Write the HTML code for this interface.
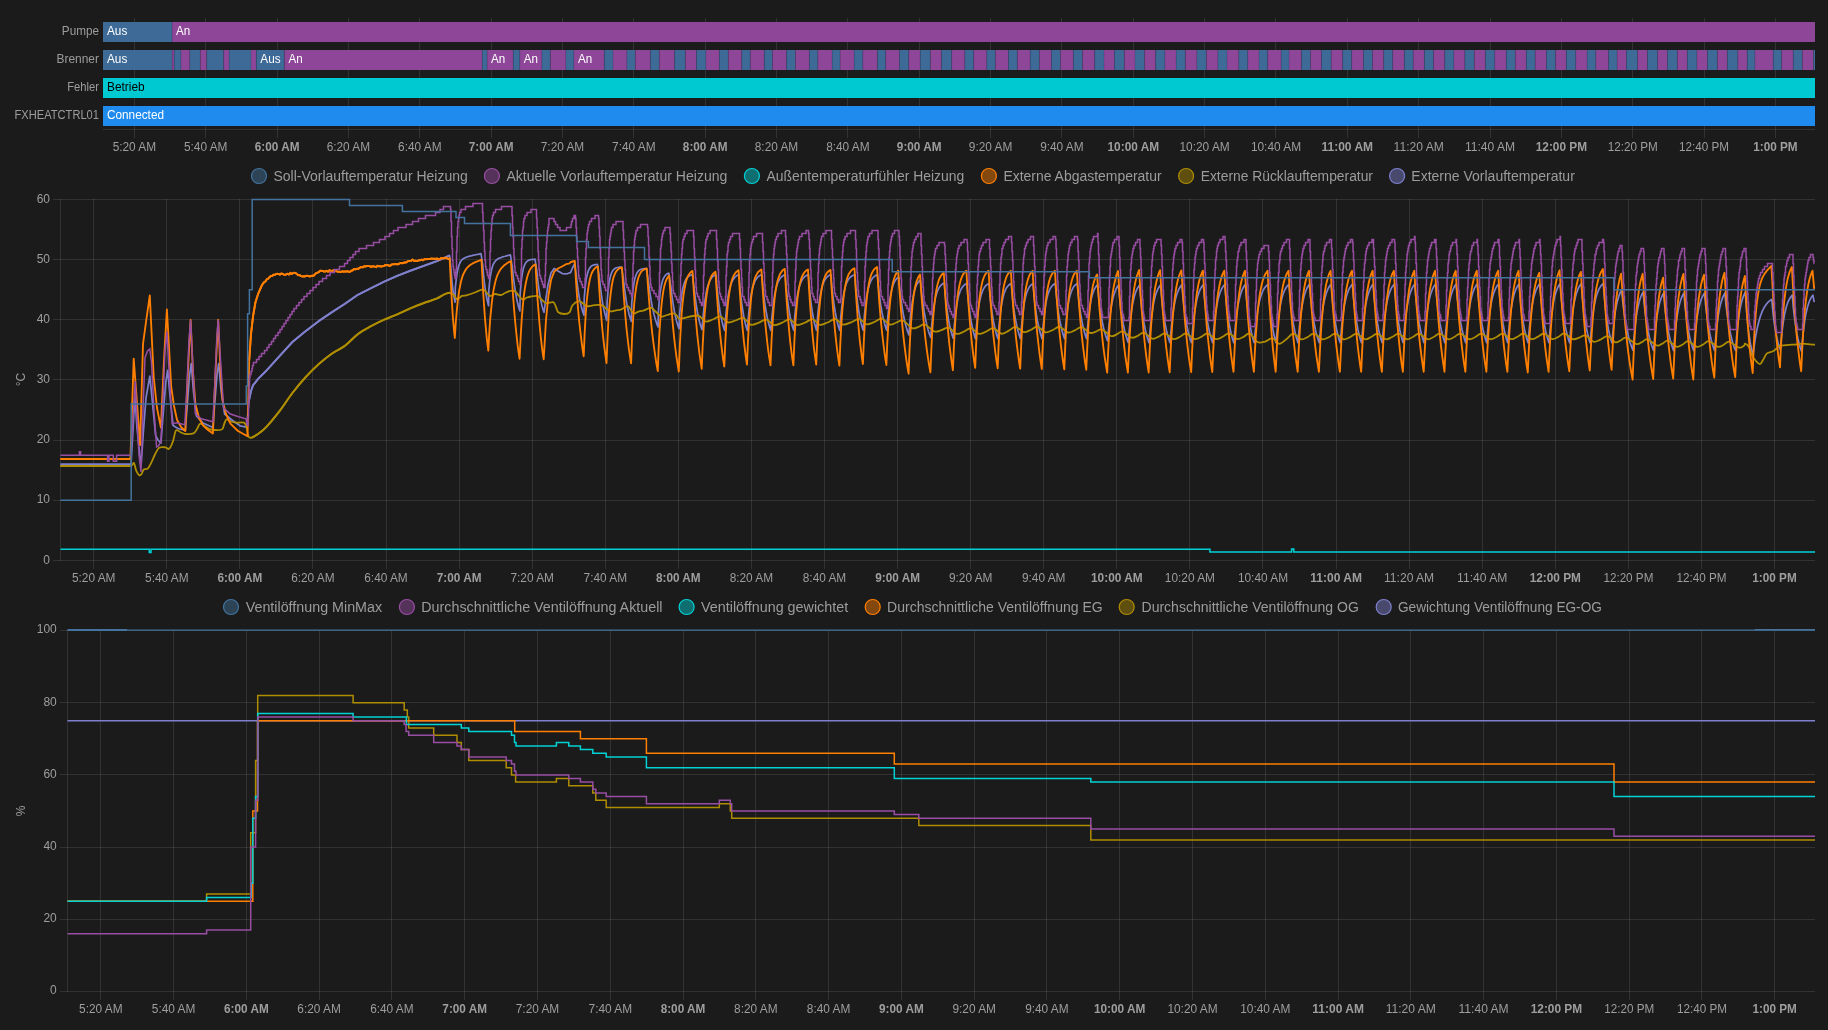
<!DOCTYPE html>
<html><head><meta charset="utf-8"><title>Heizung</title>
<style>html,body{margin:0;padding:0;background:#1b1b1b;overflow:hidden}svg{display:block;will-change:transform;transform:translateZ(0)}text{font-family:"Liberation Sans",sans-serif}</style></head>
<body><svg width="1828" height="1030" viewBox="0 0 1828 1030">
<g shape-rendering="crispEdges" stroke="#e1e1e1" stroke-opacity="0.12" stroke-width="1">
<line x1="134.5" y1="18" x2="134.5" y2="138"/>
<line x1="205.5" y1="18" x2="205.5" y2="138"/>
<line x1="277.5" y1="18" x2="277.5" y2="138"/>
<line x1="348.5" y1="18" x2="348.5" y2="138"/>
<line x1="419.5" y1="18" x2="419.5" y2="138"/>
<line x1="491.5" y1="18" x2="491.5" y2="138"/>
<line x1="562.5" y1="18" x2="562.5" y2="138"/>
<line x1="633.5" y1="18" x2="633.5" y2="138"/>
<line x1="705.5" y1="18" x2="705.5" y2="138"/>
<line x1="776.5" y1="18" x2="776.5" y2="138"/>
<line x1="847.5" y1="18" x2="847.5" y2="138"/>
<line x1="919.5" y1="18" x2="919.5" y2="138"/>
<line x1="990.5" y1="18" x2="990.5" y2="138"/>
<line x1="1061.5" y1="18" x2="1061.5" y2="138"/>
<line x1="1133.5" y1="18" x2="1133.5" y2="138"/>
<line x1="1204.5" y1="18" x2="1204.5" y2="138"/>
<line x1="1275.5" y1="18" x2="1275.5" y2="138"/>
<line x1="1347.5" y1="18" x2="1347.5" y2="138"/>
<line x1="1418.5" y1="18" x2="1418.5" y2="138"/>
<line x1="1490.5" y1="18" x2="1490.5" y2="138"/>
<line x1="1561.5" y1="18" x2="1561.5" y2="138"/>
<line x1="1632.5" y1="18" x2="1632.5" y2="138"/>
<line x1="1704.5" y1="18" x2="1704.5" y2="138"/>
<line x1="1775.5" y1="18" x2="1775.5" y2="138"/>
<line x1="103" y1="129.5" x2="1815" y2="129.5"/>
</g>
<rect x="103.00" y="22" width="69.10" height="20" fill="#3d6a97"/>
<rect x="172.10" y="22" width="1642.90" height="20" fill="#8e4699"/>
<g>
<rect x="103.00" y="50" width="69.10" height="20" fill="#3d6a97"/>
<rect x="172.10" y="50" width="2.10" height="20" fill="#8e4699"/>
<rect x="174.20" y="50" width="6.70" height="20" fill="#3d6a97"/>
<rect x="180.90" y="50" width="8.90" height="20" fill="#8e4699"/>
<rect x="189.80" y="50" width="10.50" height="20" fill="#3d6a97"/>
<rect x="200.30" y="50" width="6.40" height="20" fill="#8e4699"/>
<rect x="206.70" y="50" width="17.00" height="20" fill="#3d6a97"/>
<rect x="223.70" y="50" width="5.40" height="20" fill="#8e4699"/>
<rect x="229.10" y="50" width="21.90" height="20" fill="#3d6a97"/>
<rect x="251.00" y="50" width="5.30" height="20" fill="#8e4699"/>
<rect x="256.30" y="50" width="28.10" height="20" fill="#3d6a97"/>
<rect x="284.40" y="50" width="197.80" height="20" fill="#8e4699"/>
<rect x="482.20" y="50" width="4.90" height="20" fill="#3d6a97"/>
<rect x="487.10" y="50" width="26.10" height="20" fill="#8e4699"/>
<rect x="513.20" y="50" width="6.60" height="20" fill="#3d6a97"/>
<rect x="519.80" y="50" width="22.10" height="20" fill="#8e4699"/>
<rect x="541.90" y="50" width="8.50" height="20" fill="#3d6a97"/>
<rect x="550.40" y="50" width="15.50" height="20" fill="#8e4699"/>
<rect x="565.90" y="50" width="8.00" height="20" fill="#3d6a97"/>
<rect x="573.90" y="50" width="30.40" height="20" fill="#8e4699"/>
<rect x="604.30" y="50" width="8.70" height="20" fill="#3d6a97"/>
<rect x="613.00" y="50" width="13.90" height="20" fill="#8e4699"/>
<rect x="626.90" y="50" width="8.40" height="20" fill="#3d6a97"/>
<rect x="635.30" y="50" width="15.10" height="20" fill="#8e4699"/>
<rect x="650.40" y="50" width="8.90" height="20" fill="#3d6a97"/>
<rect x="659.30" y="50" width="15.30" height="20" fill="#8e4699"/>
<rect x="674.60" y="50" width="10.80" height="20" fill="#3d6a97"/>
<rect x="685.40" y="50" width="11.10" height="20" fill="#8e4699"/>
<rect x="696.50" y="50" width="9.40" height="20" fill="#3d6a97"/>
<rect x="705.90" y="50" width="13.40" height="20" fill="#8e4699"/>
<rect x="719.30" y="50" width="9.00" height="20" fill="#3d6a97"/>
<rect x="728.30" y="50" width="13.40" height="20" fill="#8e4699"/>
<rect x="741.70" y="50" width="8.60" height="20" fill="#3d6a97"/>
<rect x="750.30" y="50" width="14.00" height="20" fill="#8e4699"/>
<rect x="764.30" y="50" width="8.20" height="20" fill="#3d6a97"/>
<rect x="772.50" y="50" width="14.10" height="20" fill="#8e4699"/>
<rect x="786.60" y="50" width="8.90" height="20" fill="#3d6a97"/>
<rect x="795.50" y="50" width="13.90" height="20" fill="#8e4699"/>
<rect x="809.40" y="50" width="8.40" height="20" fill="#3d6a97"/>
<rect x="817.80" y="50" width="14.30" height="20" fill="#8e4699"/>
<rect x="832.10" y="50" width="8.00" height="20" fill="#3d6a97"/>
<rect x="840.10" y="50" width="14.00" height="20" fill="#8e4699"/>
<rect x="854.10" y="50" width="8.70" height="20" fill="#3d6a97"/>
<rect x="862.80" y="50" width="14.70" height="20" fill="#8e4699"/>
<rect x="877.50" y="50" width="8.20" height="20" fill="#3d6a97"/>
<rect x="885.70" y="50" width="13.80" height="20" fill="#8e4699"/>
<rect x="899.50" y="50" width="9.20" height="20" fill="#3d6a97"/>
<rect x="908.70" y="50" width="11.50" height="20" fill="#8e4699"/>
<rect x="920.20" y="50" width="10.20" height="20" fill="#3d6a97"/>
<rect x="930.40" y="50" width="11.10" height="20" fill="#8e4699"/>
<rect x="941.50" y="50" width="10.20" height="20" fill="#3d6a97"/>
<rect x="951.70" y="50" width="13.10" height="20" fill="#8e4699"/>
<rect x="964.80" y="50" width="8.90" height="20" fill="#3d6a97"/>
<rect x="973.70" y="50" width="13.10" height="20" fill="#8e4699"/>
<rect x="986.80" y="50" width="8.60" height="20" fill="#3d6a97"/>
<rect x="995.40" y="50" width="13.10" height="20" fill="#8e4699"/>
<rect x="1008.50" y="50" width="8.90" height="20" fill="#3d6a97"/>
<rect x="1017.40" y="50" width="12.80" height="20" fill="#8e4699"/>
<rect x="1030.20" y="50" width="9.20" height="20" fill="#3d6a97"/>
<rect x="1039.40" y="50" width="12.10" height="20" fill="#8e4699"/>
<rect x="1051.50" y="50" width="9.00" height="20" fill="#3d6a97"/>
<rect x="1060.50" y="50" width="12.80" height="20" fill="#8e4699"/>
<rect x="1073.30" y="50" width="9.20" height="20" fill="#3d6a97"/>
<rect x="1082.50" y="50" width="12.20" height="20" fill="#8e4699"/>
<rect x="1094.70" y="50" width="9.30" height="20" fill="#3d6a97"/>
<rect x="1104.00" y="50" width="10.50" height="20" fill="#8e4699"/>
<rect x="1114.50" y="50" width="9.90" height="20" fill="#3d6a97"/>
<rect x="1124.40" y="50" width="10.60" height="20" fill="#8e4699"/>
<rect x="1135.00" y="50" width="9.60" height="20" fill="#3d6a97"/>
<rect x="1144.60" y="50" width="11.00" height="20" fill="#8e4699"/>
<rect x="1155.60" y="50" width="9.30" height="20" fill="#3d6a97"/>
<rect x="1164.90" y="50" width="11.20" height="20" fill="#8e4699"/>
<rect x="1176.10" y="50" width="9.30" height="20" fill="#3d6a97"/>
<rect x="1185.40" y="50" width="11.50" height="20" fill="#8e4699"/>
<rect x="1196.90" y="50" width="9.50" height="20" fill="#3d6a97"/>
<rect x="1206.40" y="50" width="11.50" height="20" fill="#8e4699"/>
<rect x="1217.90" y="50" width="9.10" height="20" fill="#3d6a97"/>
<rect x="1227.00" y="50" width="11.80" height="20" fill="#8e4699"/>
<rect x="1238.80" y="50" width="9.00" height="20" fill="#3d6a97"/>
<rect x="1247.80" y="50" width="11.20" height="20" fill="#8e4699"/>
<rect x="1259.00" y="50" width="8.70" height="20" fill="#3d6a97"/>
<rect x="1267.70" y="50" width="13.40" height="20" fill="#8e4699"/>
<rect x="1281.10" y="50" width="7.90" height="20" fill="#3d6a97"/>
<rect x="1289.00" y="50" width="12.50" height="20" fill="#8e4699"/>
<rect x="1301.50" y="50" width="9.00" height="20" fill="#3d6a97"/>
<rect x="1310.50" y="50" width="11.00" height="20" fill="#8e4699"/>
<rect x="1321.50" y="50" width="9.70" height="20" fill="#3d6a97"/>
<rect x="1331.20" y="50" width="11.40" height="20" fill="#8e4699"/>
<rect x="1342.60" y="50" width="9.10" height="20" fill="#3d6a97"/>
<rect x="1351.70" y="50" width="11.80" height="20" fill="#8e4699"/>
<rect x="1363.50" y="50" width="9.00" height="20" fill="#3d6a97"/>
<rect x="1372.50" y="50" width="11.20" height="20" fill="#8e4699"/>
<rect x="1383.70" y="50" width="9.00" height="20" fill="#3d6a97"/>
<rect x="1392.70" y="50" width="11.70" height="20" fill="#8e4699"/>
<rect x="1404.40" y="50" width="8.80" height="20" fill="#3d6a97"/>
<rect x="1413.20" y="50" width="11.20" height="20" fill="#8e4699"/>
<rect x="1424.40" y="50" width="9.20" height="20" fill="#3d6a97"/>
<rect x="1433.60" y="50" width="11.10" height="20" fill="#8e4699"/>
<rect x="1444.70" y="50" width="9.20" height="20" fill="#3d6a97"/>
<rect x="1453.90" y="50" width="10.90" height="20" fill="#8e4699"/>
<rect x="1464.80" y="50" width="9.50" height="20" fill="#3d6a97"/>
<rect x="1474.30" y="50" width="11.10" height="20" fill="#8e4699"/>
<rect x="1485.40" y="50" width="9.40" height="20" fill="#3d6a97"/>
<rect x="1494.80" y="50" width="11.50" height="20" fill="#8e4699"/>
<rect x="1506.30" y="50" width="9.00" height="20" fill="#3d6a97"/>
<rect x="1515.30" y="50" width="11.00" height="20" fill="#8e4699"/>
<rect x="1526.30" y="50" width="8.90" height="20" fill="#3d6a97"/>
<rect x="1535.20" y="50" width="11.30" height="20" fill="#8e4699"/>
<rect x="1546.50" y="50" width="9.10" height="20" fill="#3d6a97"/>
<rect x="1555.60" y="50" width="10.70" height="20" fill="#8e4699"/>
<rect x="1566.30" y="50" width="9.50" height="20" fill="#3d6a97"/>
<rect x="1575.80" y="50" width="11.30" height="20" fill="#8e4699"/>
<rect x="1587.10" y="50" width="8.70" height="20" fill="#3d6a97"/>
<rect x="1595.80" y="50" width="12.80" height="20" fill="#8e4699"/>
<rect x="1608.60" y="50" width="8.50" height="20" fill="#3d6a97"/>
<rect x="1617.10" y="50" width="9.40" height="20" fill="#8e4699"/>
<rect x="1626.50" y="50" width="11.10" height="20" fill="#3d6a97"/>
<rect x="1637.60" y="50" width="9.90" height="20" fill="#8e4699"/>
<rect x="1647.50" y="50" width="10.20" height="20" fill="#3d6a97"/>
<rect x="1657.70" y="50" width="9.80" height="20" fill="#8e4699"/>
<rect x="1667.50" y="50" width="9.80" height="20" fill="#3d6a97"/>
<rect x="1677.30" y="50" width="10.00" height="20" fill="#8e4699"/>
<rect x="1687.30" y="50" width="9.60" height="20" fill="#3d6a97"/>
<rect x="1696.90" y="50" width="10.60" height="20" fill="#8e4699"/>
<rect x="1707.50" y="50" width="9.90" height="20" fill="#3d6a97"/>
<rect x="1717.40" y="50" width="10.00" height="20" fill="#8e4699"/>
<rect x="1727.40" y="50" width="10.40" height="20" fill="#3d6a97"/>
<rect x="1737.80" y="50" width="9.50" height="20" fill="#8e4699"/>
<rect x="1747.30" y="50" width="7.60" height="20" fill="#3d6a97"/>
<rect x="1754.90" y="50" width="18.30" height="20" fill="#8e4699"/>
<rect x="1773.20" y="50" width="8.40" height="20" fill="#3d6a97"/>
<rect x="1781.60" y="50" width="11.60" height="20" fill="#8e4699"/>
<rect x="1793.20" y="50" width="9.10" height="20" fill="#3d6a97"/>
<rect x="1802.30" y="50" width="11.10" height="20" fill="#8e4699"/>
<rect x="1813.40" y="50" width="1.60" height="20" fill="#3d6a97"/>
</g>
<g stroke="#2a2540" stroke-opacity="0.35" stroke-width="0.6">
<line x1="172.10" y1="50" x2="172.10" y2="70"/>
<line x1="174.20" y1="50" x2="174.20" y2="70"/>
<line x1="180.90" y1="50" x2="180.90" y2="70"/>
<line x1="189.80" y1="50" x2="189.80" y2="70"/>
<line x1="200.30" y1="50" x2="200.30" y2="70"/>
<line x1="206.70" y1="50" x2="206.70" y2="70"/>
<line x1="223.70" y1="50" x2="223.70" y2="70"/>
<line x1="229.10" y1="50" x2="229.10" y2="70"/>
<line x1="251.00" y1="50" x2="251.00" y2="70"/>
<line x1="256.30" y1="50" x2="256.30" y2="70"/>
<line x1="284.40" y1="50" x2="284.40" y2="70"/>
<line x1="482.20" y1="50" x2="482.20" y2="70"/>
<line x1="487.10" y1="50" x2="487.10" y2="70"/>
<line x1="513.20" y1="50" x2="513.20" y2="70"/>
<line x1="519.80" y1="50" x2="519.80" y2="70"/>
<line x1="541.90" y1="50" x2="541.90" y2="70"/>
<line x1="550.40" y1="50" x2="550.40" y2="70"/>
<line x1="565.90" y1="50" x2="565.90" y2="70"/>
<line x1="573.90" y1="50" x2="573.90" y2="70"/>
<line x1="604.30" y1="50" x2="604.30" y2="70"/>
<line x1="613.00" y1="50" x2="613.00" y2="70"/>
<line x1="626.90" y1="50" x2="626.90" y2="70"/>
<line x1="635.30" y1="50" x2="635.30" y2="70"/>
<line x1="650.40" y1="50" x2="650.40" y2="70"/>
<line x1="659.30" y1="50" x2="659.30" y2="70"/>
<line x1="674.60" y1="50" x2="674.60" y2="70"/>
<line x1="685.40" y1="50" x2="685.40" y2="70"/>
<line x1="696.50" y1="50" x2="696.50" y2="70"/>
<line x1="705.90" y1="50" x2="705.90" y2="70"/>
<line x1="719.30" y1="50" x2="719.30" y2="70"/>
<line x1="728.30" y1="50" x2="728.30" y2="70"/>
<line x1="741.70" y1="50" x2="741.70" y2="70"/>
<line x1="750.30" y1="50" x2="750.30" y2="70"/>
<line x1="764.30" y1="50" x2="764.30" y2="70"/>
<line x1="772.50" y1="50" x2="772.50" y2="70"/>
<line x1="786.60" y1="50" x2="786.60" y2="70"/>
<line x1="795.50" y1="50" x2="795.50" y2="70"/>
<line x1="809.40" y1="50" x2="809.40" y2="70"/>
<line x1="817.80" y1="50" x2="817.80" y2="70"/>
<line x1="832.10" y1="50" x2="832.10" y2="70"/>
<line x1="840.10" y1="50" x2="840.10" y2="70"/>
<line x1="854.10" y1="50" x2="854.10" y2="70"/>
<line x1="862.80" y1="50" x2="862.80" y2="70"/>
<line x1="877.50" y1="50" x2="877.50" y2="70"/>
<line x1="885.70" y1="50" x2="885.70" y2="70"/>
<line x1="899.50" y1="50" x2="899.50" y2="70"/>
<line x1="908.70" y1="50" x2="908.70" y2="70"/>
<line x1="920.20" y1="50" x2="920.20" y2="70"/>
<line x1="930.40" y1="50" x2="930.40" y2="70"/>
<line x1="941.50" y1="50" x2="941.50" y2="70"/>
<line x1="951.70" y1="50" x2="951.70" y2="70"/>
<line x1="964.80" y1="50" x2="964.80" y2="70"/>
<line x1="973.70" y1="50" x2="973.70" y2="70"/>
<line x1="986.80" y1="50" x2="986.80" y2="70"/>
<line x1="995.40" y1="50" x2="995.40" y2="70"/>
<line x1="1008.50" y1="50" x2="1008.50" y2="70"/>
<line x1="1017.40" y1="50" x2="1017.40" y2="70"/>
<line x1="1030.20" y1="50" x2="1030.20" y2="70"/>
<line x1="1039.40" y1="50" x2="1039.40" y2="70"/>
<line x1="1051.50" y1="50" x2="1051.50" y2="70"/>
<line x1="1060.50" y1="50" x2="1060.50" y2="70"/>
<line x1="1073.30" y1="50" x2="1073.30" y2="70"/>
<line x1="1082.50" y1="50" x2="1082.50" y2="70"/>
<line x1="1094.70" y1="50" x2="1094.70" y2="70"/>
<line x1="1104.00" y1="50" x2="1104.00" y2="70"/>
<line x1="1114.50" y1="50" x2="1114.50" y2="70"/>
<line x1="1124.40" y1="50" x2="1124.40" y2="70"/>
<line x1="1135.00" y1="50" x2="1135.00" y2="70"/>
<line x1="1144.60" y1="50" x2="1144.60" y2="70"/>
<line x1="1155.60" y1="50" x2="1155.60" y2="70"/>
<line x1="1164.90" y1="50" x2="1164.90" y2="70"/>
<line x1="1176.10" y1="50" x2="1176.10" y2="70"/>
<line x1="1185.40" y1="50" x2="1185.40" y2="70"/>
<line x1="1196.90" y1="50" x2="1196.90" y2="70"/>
<line x1="1206.40" y1="50" x2="1206.40" y2="70"/>
<line x1="1217.90" y1="50" x2="1217.90" y2="70"/>
<line x1="1227.00" y1="50" x2="1227.00" y2="70"/>
<line x1="1238.80" y1="50" x2="1238.80" y2="70"/>
<line x1="1247.80" y1="50" x2="1247.80" y2="70"/>
<line x1="1259.00" y1="50" x2="1259.00" y2="70"/>
<line x1="1267.70" y1="50" x2="1267.70" y2="70"/>
<line x1="1281.10" y1="50" x2="1281.10" y2="70"/>
<line x1="1289.00" y1="50" x2="1289.00" y2="70"/>
<line x1="1301.50" y1="50" x2="1301.50" y2="70"/>
<line x1="1310.50" y1="50" x2="1310.50" y2="70"/>
<line x1="1321.50" y1="50" x2="1321.50" y2="70"/>
<line x1="1331.20" y1="50" x2="1331.20" y2="70"/>
<line x1="1342.60" y1="50" x2="1342.60" y2="70"/>
<line x1="1351.70" y1="50" x2="1351.70" y2="70"/>
<line x1="1363.50" y1="50" x2="1363.50" y2="70"/>
<line x1="1372.50" y1="50" x2="1372.50" y2="70"/>
<line x1="1383.70" y1="50" x2="1383.70" y2="70"/>
<line x1="1392.70" y1="50" x2="1392.70" y2="70"/>
<line x1="1404.40" y1="50" x2="1404.40" y2="70"/>
<line x1="1413.20" y1="50" x2="1413.20" y2="70"/>
<line x1="1424.40" y1="50" x2="1424.40" y2="70"/>
<line x1="1433.60" y1="50" x2="1433.60" y2="70"/>
<line x1="1444.70" y1="50" x2="1444.70" y2="70"/>
<line x1="1453.90" y1="50" x2="1453.90" y2="70"/>
<line x1="1464.80" y1="50" x2="1464.80" y2="70"/>
<line x1="1474.30" y1="50" x2="1474.30" y2="70"/>
<line x1="1485.40" y1="50" x2="1485.40" y2="70"/>
<line x1="1494.80" y1="50" x2="1494.80" y2="70"/>
<line x1="1506.30" y1="50" x2="1506.30" y2="70"/>
<line x1="1515.30" y1="50" x2="1515.30" y2="70"/>
<line x1="1526.30" y1="50" x2="1526.30" y2="70"/>
<line x1="1535.20" y1="50" x2="1535.20" y2="70"/>
<line x1="1546.50" y1="50" x2="1546.50" y2="70"/>
<line x1="1555.60" y1="50" x2="1555.60" y2="70"/>
<line x1="1566.30" y1="50" x2="1566.30" y2="70"/>
<line x1="1575.80" y1="50" x2="1575.80" y2="70"/>
<line x1="1587.10" y1="50" x2="1587.10" y2="70"/>
<line x1="1595.80" y1="50" x2="1595.80" y2="70"/>
<line x1="1608.60" y1="50" x2="1608.60" y2="70"/>
<line x1="1617.10" y1="50" x2="1617.10" y2="70"/>
<line x1="1626.50" y1="50" x2="1626.50" y2="70"/>
<line x1="1637.60" y1="50" x2="1637.60" y2="70"/>
<line x1="1647.50" y1="50" x2="1647.50" y2="70"/>
<line x1="1657.70" y1="50" x2="1657.70" y2="70"/>
<line x1="1667.50" y1="50" x2="1667.50" y2="70"/>
<line x1="1677.30" y1="50" x2="1677.30" y2="70"/>
<line x1="1687.30" y1="50" x2="1687.30" y2="70"/>
<line x1="1696.90" y1="50" x2="1696.90" y2="70"/>
<line x1="1707.50" y1="50" x2="1707.50" y2="70"/>
<line x1="1717.40" y1="50" x2="1717.40" y2="70"/>
<line x1="1727.40" y1="50" x2="1727.40" y2="70"/>
<line x1="1737.80" y1="50" x2="1737.80" y2="70"/>
<line x1="1747.30" y1="50" x2="1747.30" y2="70"/>
<line x1="1754.90" y1="50" x2="1754.90" y2="70"/>
<line x1="1773.20" y1="50" x2="1773.20" y2="70"/>
<line x1="1781.60" y1="50" x2="1781.60" y2="70"/>
<line x1="1793.20" y1="50" x2="1793.20" y2="70"/>
<line x1="1802.30" y1="50" x2="1802.30" y2="70"/>
<line x1="1813.40" y1="50" x2="1813.40" y2="70"/>
<line x1="172.1" y1="22" x2="172.1" y2="42"/>
</g>
<rect x="103.00" y="78" width="1712.00" height="20" fill="#00c9d1"/>
<rect x="103.00" y="106" width="1712.00" height="20" fill="#1f8bef"/>
<text x="107.0" y="34.8" font-size="12" fill="#fff" text-anchor="start" textLength="20.3" lengthAdjust="spacingAndGlyphs" >Aus</text>
<text x="176.0" y="34.8" font-size="12" fill="#fff" text-anchor="start" textLength="14.2" lengthAdjust="spacingAndGlyphs" >An</text>
<text x="107.0" y="62.8" font-size="12" fill="#fff" text-anchor="start" textLength="20.3" lengthAdjust="spacingAndGlyphs" >Aus</text>
<text x="260.3" y="62.8" font-size="12" fill="#fff" text-anchor="start" textLength="20.3" lengthAdjust="spacingAndGlyphs" >Aus</text>
<text x="288.4" y="62.8" font-size="12" fill="#fff" text-anchor="start" textLength="14.2" lengthAdjust="spacingAndGlyphs" >An</text>
<text x="491.1" y="62.8" font-size="12" fill="#fff" text-anchor="start" textLength="14.2" lengthAdjust="spacingAndGlyphs" >An</text>
<text x="523.8" y="62.8" font-size="12" fill="#fff" text-anchor="start" textLength="14.2" lengthAdjust="spacingAndGlyphs" >An</text>
<text x="577.9" y="62.8" font-size="12" fill="#fff" text-anchor="start" textLength="14.2" lengthAdjust="spacingAndGlyphs" >An</text>
<text x="107.0" y="90.8" font-size="12" fill="#000" text-anchor="start" textLength="37.6" lengthAdjust="spacingAndGlyphs" >Betrieb</text>
<text x="107.0" y="118.8" font-size="12" fill="#fff" text-anchor="start" textLength="57.0" lengthAdjust="spacingAndGlyphs" >Connected</text>
<text x="99.0" y="34.8" font-size="12" fill="#9c9c9c" text-anchor="end" textLength="37.2" lengthAdjust="spacingAndGlyphs" >Pumpe</text>
<text x="99.0" y="62.8" font-size="12" fill="#9c9c9c" text-anchor="end" textLength="42.5" lengthAdjust="spacingAndGlyphs" >Brenner</text>
<text x="99.0" y="90.8" font-size="12" fill="#9c9c9c" text-anchor="end" textLength="31.8" lengthAdjust="spacingAndGlyphs" >Fehler</text>
<text x="99.0" y="118.8" font-size="12" fill="#9c9c9c" text-anchor="end" textLength="84.5" lengthAdjust="spacingAndGlyphs" >FXHEATCTRL01</text>
<text x="134.4" y="151.2" font-size="12" fill="#9e9e9e" text-anchor="middle" textLength="43.5" lengthAdjust="spacingAndGlyphs" >5:20 AM</text>
<text x="205.7" y="151.2" font-size="12" fill="#9e9e9e" text-anchor="middle" textLength="43.5" lengthAdjust="spacingAndGlyphs" >5:40 AM</text>
<text x="277.1" y="151.2" font-size="12" fill="#9e9e9e" text-anchor="middle" font-weight="bold" textLength="44.7" lengthAdjust="spacingAndGlyphs" >6:00 AM</text>
<text x="348.4" y="151.2" font-size="12" fill="#9e9e9e" text-anchor="middle" textLength="43.5" lengthAdjust="spacingAndGlyphs" >6:20 AM</text>
<text x="419.8" y="151.2" font-size="12" fill="#9e9e9e" text-anchor="middle" textLength="43.5" lengthAdjust="spacingAndGlyphs" >6:40 AM</text>
<text x="491.1" y="151.2" font-size="12" fill="#9e9e9e" text-anchor="middle" font-weight="bold" textLength="44.7" lengthAdjust="spacingAndGlyphs" >7:00 AM</text>
<text x="562.5" y="151.2" font-size="12" fill="#9e9e9e" text-anchor="middle" textLength="43.5" lengthAdjust="spacingAndGlyphs" >7:20 AM</text>
<text x="633.8" y="151.2" font-size="12" fill="#9e9e9e" text-anchor="middle" textLength="43.5" lengthAdjust="spacingAndGlyphs" >7:40 AM</text>
<text x="705.2" y="151.2" font-size="12" fill="#9e9e9e" text-anchor="middle" font-weight="bold" textLength="44.7" lengthAdjust="spacingAndGlyphs" >8:00 AM</text>
<text x="776.5" y="151.2" font-size="12" fill="#9e9e9e" text-anchor="middle" textLength="43.5" lengthAdjust="spacingAndGlyphs" >8:20 AM</text>
<text x="847.9" y="151.2" font-size="12" fill="#9e9e9e" text-anchor="middle" textLength="43.5" lengthAdjust="spacingAndGlyphs" >8:40 AM</text>
<text x="919.2" y="151.2" font-size="12" fill="#9e9e9e" text-anchor="middle" font-weight="bold" textLength="44.7" lengthAdjust="spacingAndGlyphs" >9:00 AM</text>
<text x="990.6" y="151.2" font-size="12" fill="#9e9e9e" text-anchor="middle" textLength="43.5" lengthAdjust="spacingAndGlyphs" >9:20 AM</text>
<text x="1061.9" y="151.2" font-size="12" fill="#9e9e9e" text-anchor="middle" textLength="43.5" lengthAdjust="spacingAndGlyphs" >9:40 AM</text>
<text x="1133.3" y="151.2" font-size="12" fill="#9e9e9e" text-anchor="middle" font-weight="bold" textLength="51.6" lengthAdjust="spacingAndGlyphs" >10:00 AM</text>
<text x="1204.6" y="151.2" font-size="12" fill="#9e9e9e" text-anchor="middle" textLength="50.2" lengthAdjust="spacingAndGlyphs" >10:20 AM</text>
<text x="1276.0" y="151.2" font-size="12" fill="#9e9e9e" text-anchor="middle" textLength="50.2" lengthAdjust="spacingAndGlyphs" >10:40 AM</text>
<text x="1347.3" y="151.2" font-size="12" fill="#9e9e9e" text-anchor="middle" font-weight="bold" textLength="51.6" lengthAdjust="spacingAndGlyphs" >11:00 AM</text>
<text x="1418.7" y="151.2" font-size="12" fill="#9e9e9e" text-anchor="middle" textLength="50.2" lengthAdjust="spacingAndGlyphs" >11:20 AM</text>
<text x="1490.0" y="151.2" font-size="12" fill="#9e9e9e" text-anchor="middle" textLength="50.2" lengthAdjust="spacingAndGlyphs" >11:40 AM</text>
<text x="1561.4" y="151.2" font-size="12" fill="#9e9e9e" text-anchor="middle" font-weight="bold" textLength="51.3" lengthAdjust="spacingAndGlyphs" >12:00 PM</text>
<text x="1632.7" y="151.2" font-size="12" fill="#9e9e9e" text-anchor="middle" textLength="50.0" lengthAdjust="spacingAndGlyphs" >12:20 PM</text>
<text x="1704.1" y="151.2" font-size="12" fill="#9e9e9e" text-anchor="middle" textLength="50.0" lengthAdjust="spacingAndGlyphs" >12:40 PM</text>
<text x="1775.4" y="151.2" font-size="12" fill="#9e9e9e" text-anchor="middle" font-weight="bold" textLength="44.4" lengthAdjust="spacingAndGlyphs" >1:00 PM</text>
<circle cx="259" cy="176" r="7.5" fill="#44739e" fill-opacity="0.46" stroke="#44739e" stroke-width="1.2"/>
<text x="273.5" y="181.0" font-size="14" fill="#9c9c9c" text-anchor="start" textLength="194.2" lengthAdjust="spacingAndGlyphs" >Soll-Vorlauftemperatur Heizung</text>
<circle cx="491.9" cy="176" r="7.5" fill="#984ea3" fill-opacity="0.46" stroke="#984ea3" stroke-width="1.2"/>
<text x="506.4" y="181.0" font-size="14" fill="#9c9c9c" text-anchor="start" textLength="221.0" lengthAdjust="spacingAndGlyphs" >Aktuelle Vorlauftemperatur Heizung</text>
<circle cx="751.9" cy="176" r="7.5" fill="#00d2d5" fill-opacity="0.46" stroke="#00d2d5" stroke-width="1.2"/>
<text x="766.4" y="181.0" font-size="14" fill="#9c9c9c" text-anchor="start" textLength="197.9" lengthAdjust="spacingAndGlyphs" >Außentemperaturfühler Heizung</text>
<circle cx="988.9" cy="176" r="7.5" fill="#ff7f00" fill-opacity="0.46" stroke="#ff7f00" stroke-width="1.2"/>
<text x="1003.4" y="181.0" font-size="14" fill="#9c9c9c" text-anchor="start" textLength="158.2" lengthAdjust="spacingAndGlyphs" >Externe Abgastemperatur</text>
<circle cx="1186.1" cy="176" r="7.5" fill="#af8d00" fill-opacity="0.46" stroke="#af8d00" stroke-width="1.2"/>
<text x="1200.7" y="181.0" font-size="14" fill="#9c9c9c" text-anchor="start" textLength="172.3" lengthAdjust="spacingAndGlyphs" >Externe Rücklauftemperatur</text>
<circle cx="1397.1" cy="176" r="7.5" fill="#7f80cd" fill-opacity="0.46" stroke="#7f80cd" stroke-width="1.2"/>
<text x="1411.3" y="181.0" font-size="14" fill="#9c9c9c" text-anchor="start" textLength="163.5" lengthAdjust="spacingAndGlyphs" >Externe Vorlauftemperatur</text>
<circle cx="231" cy="607" r="7.5" fill="#44739e" fill-opacity="0.46" stroke="#44739e" stroke-width="1.2"/>
<text x="245.7" y="612.0" font-size="14" fill="#9c9c9c" text-anchor="start" textLength="136.4" lengthAdjust="spacingAndGlyphs" >Ventilöffnung MinMax</text>
<circle cx="406.9" cy="607" r="7.5" fill="#984ea3" fill-opacity="0.46" stroke="#984ea3" stroke-width="1.2"/>
<text x="421.3" y="612.0" font-size="14" fill="#9c9c9c" text-anchor="start" textLength="241.2" lengthAdjust="spacingAndGlyphs" >Durchschnittliche Ventilöffnung Aktuell</text>
<circle cx="686.6" cy="607" r="7.5" fill="#00d2d5" fill-opacity="0.46" stroke="#00d2d5" stroke-width="1.2"/>
<text x="701.0" y="612.0" font-size="14" fill="#9c9c9c" text-anchor="start" textLength="147.2" lengthAdjust="spacingAndGlyphs" >Ventilöffnung gewichtet</text>
<circle cx="872.7" cy="607" r="7.5" fill="#ff7f00" fill-opacity="0.46" stroke="#ff7f00" stroke-width="1.2"/>
<text x="887.1" y="612.0" font-size="14" fill="#9c9c9c" text-anchor="start" textLength="215.6" lengthAdjust="spacingAndGlyphs" >Durchschnittliche Ventilöffnung EG</text>
<circle cx="1126.7" cy="607" r="7.5" fill="#af8d00" fill-opacity="0.46" stroke="#af8d00" stroke-width="1.2"/>
<text x="1141.5" y="612.0" font-size="14" fill="#9c9c9c" text-anchor="start" textLength="217.3" lengthAdjust="spacingAndGlyphs" >Durchschnittliche Ventilöffnung OG</text>
<circle cx="1383.7" cy="607" r="7.5" fill="#7f80cd" fill-opacity="0.46" stroke="#7f80cd" stroke-width="1.2"/>
<text x="1398.0" y="612.0" font-size="14" fill="#9c9c9c" text-anchor="start" textLength="203.9" lengthAdjust="spacingAndGlyphs" >Gewichtung Ventilöffnung EG-OG</text>
<g shape-rendering="crispEdges" stroke="#e1e1e1" stroke-opacity="0.12" stroke-width="1">
<line x1="53" y1="560.5" x2="1815.0" y2="560.5"/>
<line x1="53" y1="500.5" x2="1815.0" y2="500.5"/>
<line x1="53" y1="440.5" x2="1815.0" y2="440.5"/>
<line x1="53" y1="379.5" x2="1815.0" y2="379.5"/>
<line x1="53" y1="319.5" x2="1815.0" y2="319.5"/>
<line x1="53" y1="259.5" x2="1815.0" y2="259.5"/>
<line x1="53" y1="199.5" x2="1815.0" y2="199.5"/>
<line x1="60.5" y1="199" x2="60.5" y2="561"/>
<line x1="93.5" y1="199" x2="93.5" y2="569"/>
<line x1="166.5" y1="199" x2="166.5" y2="569"/>
<line x1="239.5" y1="199" x2="239.5" y2="569"/>
<line x1="312.5" y1="199" x2="312.5" y2="569"/>
<line x1="386.5" y1="199" x2="386.5" y2="569"/>
<line x1="459.5" y1="199" x2="459.5" y2="569"/>
<line x1="532.5" y1="199" x2="532.5" y2="569"/>
<line x1="605.5" y1="199" x2="605.5" y2="569"/>
<line x1="678.5" y1="199" x2="678.5" y2="569"/>
<line x1="751.5" y1="199" x2="751.5" y2="569"/>
<line x1="824.5" y1="199" x2="824.5" y2="569"/>
<line x1="897.5" y1="199" x2="897.5" y2="569"/>
<line x1="970.5" y1="199" x2="970.5" y2="569"/>
<line x1="1043.5" y1="199" x2="1043.5" y2="569"/>
<line x1="1116.5" y1="199" x2="1116.5" y2="569"/>
<line x1="1189.5" y1="199" x2="1189.5" y2="569"/>
<line x1="1262.5" y1="199" x2="1262.5" y2="569"/>
<line x1="1336.5" y1="199" x2="1336.5" y2="569"/>
<line x1="1409.5" y1="199" x2="1409.5" y2="569"/>
<line x1="1482.5" y1="199" x2="1482.5" y2="569"/>
<line x1="1555.5" y1="199" x2="1555.5" y2="569"/>
<line x1="1628.5" y1="199" x2="1628.5" y2="569"/>
<line x1="1701.5" y1="199" x2="1701.5" y2="569"/>
<line x1="1774.5" y1="199" x2="1774.5" y2="569"/>
</g>
<text x="50.0" y="563.5" font-size="12" fill="#9e9e9e" text-anchor="end" >0</text>
<text x="50.0" y="503.3" font-size="12" fill="#9e9e9e" text-anchor="end" >10</text>
<text x="50.0" y="443.2" font-size="12" fill="#9e9e9e" text-anchor="end" >20</text>
<text x="50.0" y="383.0" font-size="12" fill="#9e9e9e" text-anchor="end" >30</text>
<text x="50.0" y="322.8" font-size="12" fill="#9e9e9e" text-anchor="end" >40</text>
<text x="50.0" y="262.6" font-size="12" fill="#9e9e9e" text-anchor="end" >50</text>
<text x="50.0" y="202.5" font-size="12" fill="#9e9e9e" text-anchor="end" >60</text>
<text x="93.7" y="582.0" font-size="12" fill="#9e9e9e" text-anchor="middle" textLength="43.5" lengthAdjust="spacingAndGlyphs" >5:20 AM</text>
<text x="166.8" y="582.0" font-size="12" fill="#9e9e9e" text-anchor="middle" textLength="43.5" lengthAdjust="spacingAndGlyphs" >5:40 AM</text>
<text x="239.9" y="582.0" font-size="12" fill="#9e9e9e" text-anchor="middle" font-weight="bold" textLength="44.7" lengthAdjust="spacingAndGlyphs" >6:00 AM</text>
<text x="312.9" y="582.0" font-size="12" fill="#9e9e9e" text-anchor="middle" textLength="43.5" lengthAdjust="spacingAndGlyphs" >6:20 AM</text>
<text x="386.0" y="582.0" font-size="12" fill="#9e9e9e" text-anchor="middle" textLength="43.5" lengthAdjust="spacingAndGlyphs" >6:40 AM</text>
<text x="459.1" y="582.0" font-size="12" fill="#9e9e9e" text-anchor="middle" font-weight="bold" textLength="44.7" lengthAdjust="spacingAndGlyphs" >7:00 AM</text>
<text x="532.2" y="582.0" font-size="12" fill="#9e9e9e" text-anchor="middle" textLength="43.5" lengthAdjust="spacingAndGlyphs" >7:20 AM</text>
<text x="605.3" y="582.0" font-size="12" fill="#9e9e9e" text-anchor="middle" textLength="43.5" lengthAdjust="spacingAndGlyphs" >7:40 AM</text>
<text x="678.3" y="582.0" font-size="12" fill="#9e9e9e" text-anchor="middle" font-weight="bold" textLength="44.7" lengthAdjust="spacingAndGlyphs" >8:00 AM</text>
<text x="751.4" y="582.0" font-size="12" fill="#9e9e9e" text-anchor="middle" textLength="43.5" lengthAdjust="spacingAndGlyphs" >8:20 AM</text>
<text x="824.5" y="582.0" font-size="12" fill="#9e9e9e" text-anchor="middle" textLength="43.5" lengthAdjust="spacingAndGlyphs" >8:40 AM</text>
<text x="897.6" y="582.0" font-size="12" fill="#9e9e9e" text-anchor="middle" font-weight="bold" textLength="44.7" lengthAdjust="spacingAndGlyphs" >9:00 AM</text>
<text x="970.7" y="582.0" font-size="12" fill="#9e9e9e" text-anchor="middle" textLength="43.5" lengthAdjust="spacingAndGlyphs" >9:20 AM</text>
<text x="1043.7" y="582.0" font-size="12" fill="#9e9e9e" text-anchor="middle" textLength="43.5" lengthAdjust="spacingAndGlyphs" >9:40 AM</text>
<text x="1116.8" y="582.0" font-size="12" fill="#9e9e9e" text-anchor="middle" font-weight="bold" textLength="51.6" lengthAdjust="spacingAndGlyphs" >10:00 AM</text>
<text x="1189.9" y="582.0" font-size="12" fill="#9e9e9e" text-anchor="middle" textLength="50.2" lengthAdjust="spacingAndGlyphs" >10:20 AM</text>
<text x="1263.0" y="582.0" font-size="12" fill="#9e9e9e" text-anchor="middle" textLength="50.2" lengthAdjust="spacingAndGlyphs" >10:40 AM</text>
<text x="1336.1" y="582.0" font-size="12" fill="#9e9e9e" text-anchor="middle" font-weight="bold" textLength="51.6" lengthAdjust="spacingAndGlyphs" >11:00 AM</text>
<text x="1409.1" y="582.0" font-size="12" fill="#9e9e9e" text-anchor="middle" textLength="50.2" lengthAdjust="spacingAndGlyphs" >11:20 AM</text>
<text x="1482.2" y="582.0" font-size="12" fill="#9e9e9e" text-anchor="middle" textLength="50.2" lengthAdjust="spacingAndGlyphs" >11:40 AM</text>
<text x="1555.3" y="582.0" font-size="12" fill="#9e9e9e" text-anchor="middle" font-weight="bold" textLength="51.3" lengthAdjust="spacingAndGlyphs" >12:00 PM</text>
<text x="1628.4" y="582.0" font-size="12" fill="#9e9e9e" text-anchor="middle" textLength="50.0" lengthAdjust="spacingAndGlyphs" >12:20 PM</text>
<text x="1701.5" y="582.0" font-size="12" fill="#9e9e9e" text-anchor="middle" textLength="50.0" lengthAdjust="spacingAndGlyphs" >12:40 PM</text>
<text x="1774.5" y="582.0" font-size="12" fill="#9e9e9e" text-anchor="middle" font-weight="bold" textLength="44.4" lengthAdjust="spacingAndGlyphs" >1:00 PM</text>
<text transform="translate(24.5,379.5) rotate(-90)" font-size="12" fill="#9e9e9e" text-anchor="middle">°C</text>
<clipPath id="c1"><rect x="60" y="190" width="1755.2" height="372"/></clipPath>
<g clip-path="url(#c1)" fill="none" stroke-width="1.5" stroke-linejoin="round">
<path d="M60.5,464.4L131.0,464.4L133.0,430.0L134.9,396.5L137.0,428.0L141.0,466.4L143.5,430.0L146.0,398.0L149.8,376.1L152.0,398.0L155.6,435.3L158.0,440.0L160.9,443.1L163.5,410.0L165.8,382.0L167.7,370.3L170.0,396.0L173.1,425.6L178.0,428.5L185.3,430.5L187.5,402.0L189.5,376.0L191.2,363.5L193.5,392.0L196.4,415.9L203.0,423.0L212.9,427.6L215.0,400.0L217.0,375.0L218.7,363.5L221.0,390.0L224.6,414.0L232.0,420.0L240.0,425.8L246.5,427.1L249.2,399.6L251.0,391.0L253.1,385.2L258.3,378.6L266.2,370.8L279.3,356.4L292.4,342.0L305.5,331.2L318.6,321.2L331.7,312.3L344.8,303.9L357.9,294.8L371.0,288.2L384.1,281.7L397.2,275.9L410.3,270.7L423.4,266.0L436.5,261.3L449.6,255.5L450.7,265.9L451.4,274.4L452.0,281.5L452.6,287.3L453.2,292.1L453.9,296.1L454.5,299.4L455.1,302.2L455.3,287.6L456.4,277.8L457.4,271.2L458.4,266.8L459.5,263.8L460.5,261.7L461.5,260.3L462.5,259.2L463.6,258.5L464.6,257.9L465.6,257.4L466.6,257.1L467.7,256.7L468.7,256.4L469.7,256.2L470.8,255.9L471.8,255.7L472.8,255.4L473.8,255.2L474.9,255.0L475.9,254.7L476.9,254.5L478.0,254.3L479.0,254.1L480.0,253.8L481.0,253.6L482.7,265.1L483.5,274.6L484.4,282.5L485.2,289.0L486.1,294.4L486.9,298.9L487.7,302.6L488.6,305.7L488.8,290.3L489.8,280.0L490.9,273.1L491.9,268.4L492.9,265.2L494.0,263.0L495.0,261.5L496.0,260.3L497.0,259.5L498.1,258.8L499.1,258.3L500.1,257.9L501.2,257.5L502.2,257.1L503.2,256.8L504.2,256.5L505.3,256.2L506.3,255.9L507.3,255.6L508.4,255.3L509.4,255.1L510.4,254.8L512.3,267.1L513.4,277.4L514.5,285.9L515.6,292.9L516.7,298.8L517.7,303.6L518.8,307.6L519.9,310.9L520.2,293.1L521.2,281.4L522.3,273.7L523.3,268.7L524.4,265.4L525.5,263.2L526.5,261.8L527.6,260.9L528.6,260.3L529.7,259.9L530.8,259.6L531.8,259.5L532.9,259.4L533.9,259.3L535.0,259.2L536.8,270.9L537.8,280.6L538.9,288.6L539.9,295.3L540.9,300.8L541.9,305.4L542.9,309.1L544.0,312.3L546.0,298.0L548.0,285.0L551.0,273.0L554.2,268.5L558.0,271.0L562.3,273.6L567.0,273.8L570.5,272.6L572.5,268.0L574.8,263.4L576.2,274.8L577.3,284.3L578.4,292.2L579.5,298.7L580.7,304.1L581.8,308.6L582.9,312.3L584.0,315.3L584.2,298.3L585.2,286.9L586.2,279.3L587.3,274.3L588.3,270.9L589.3,268.7L590.3,267.2L591.3,266.2L592.3,265.5L593.4,265.1L594.4,264.8L595.4,264.6L596.4,264.5L597.4,264.4L599.3,276.7L600.4,286.9L601.5,295.3L602.5,302.3L603.6,308.1L604.7,313.0L605.8,317.0L606.8,320.3L607.1,302.3L608.1,290.3L609.1,282.4L610.2,277.2L611.2,273.8L612.2,271.5L613.2,270.0L614.3,268.9L615.3,268.3L616.3,267.8L617.4,267.5L618.4,267.4L619.4,267.2L620.5,267.1L621.5,267.1L623.4,279.1L624.6,289.0L625.7,297.2L626.8,304.1L628.0,309.7L629.1,314.4L630.3,318.3L631.4,321.5L631.7,303.8L632.7,291.9L633.8,284.1L634.8,278.8L635.9,275.3L636.9,273.0L638.0,271.4L639.0,270.4L640.0,269.7L641.1,269.3L642.1,269.0L643.2,268.8L644.2,268.6L645.3,268.5L646.3,268.5L648.4,281.4L649.8,292.1L651.2,300.9L652.6,308.3L654.0,314.3L655.4,319.4L656.7,323.6L658.1,327.0L658.3,313.0L659.1,302.5L659.9,294.7L660.7,288.9L661.5,284.7L662.3,281.5L663.1,279.1L664.0,277.4L664.8,276.1L665.6,275.1L666.4,274.4L667.2,273.8L668.0,273.4L668.8,273.2L670.7,285.4L671.9,295.5L673.1,303.9L674.3,310.8L675.5,316.6L676.7,321.4L677.9,325.4L679.1,328.6L679.7,313.8L680.7,303.0L681.6,295.1L682.6,289.4L683.6,285.2L684.6,282.2L685.6,280.0L686.5,278.4L687.5,277.2L688.5,276.3L689.5,275.7L690.5,275.2L691.4,274.9L692.4,274.7L694.0,286.8L695.1,296.8L696.3,305.1L697.4,312.0L698.6,317.8L699.7,322.5L700.9,326.4L702.0,329.7L703.1,316.9L704.1,306.9L705.1,299.3L706.1,293.3L707.0,288.7L708.0,285.2L709.0,282.5L710.0,280.4L711.0,278.7L711.9,277.5L712.9,276.5L713.9,275.7L714.9,275.1L715.9,274.7L716.9,287.0L718.0,297.1L719.1,305.5L720.2,312.5L721.3,318.3L722.4,323.1L723.5,327.1L724.6,330.4L725.7,316.9L726.7,306.7L727.7,298.8L728.7,292.8L729.8,288.2L730.8,284.7L731.8,282.0L732.8,280.0L733.9,278.4L734.9,277.2L735.9,276.3L736.9,275.6L738.0,275.1L739.0,274.7L739.9,287.0L741.0,297.1L742.0,305.5L743.1,312.5L744.1,318.3L745.2,323.1L746.2,327.1L747.3,330.4L748.4,316.8L749.4,306.5L750.5,298.7L751.5,292.7L752.5,288.1L753.6,284.6L754.6,281.9L755.6,279.9L756.7,278.4L757.7,277.2L758.7,276.3L759.8,275.6L760.8,275.1L761.8,274.7L762.9,286.9L764.0,297.1L765.1,305.5L766.3,312.5L767.4,318.3L768.5,323.1L769.7,327.0L770.8,330.3L771.9,317.0L773.0,306.7L774.0,298.9L775.0,292.9L776.0,288.3L777.0,284.8L778.0,282.1L779.1,280.1L780.1,278.5L781.1,277.3L782.1,276.4L783.1,275.7L784.1,275.1L785.2,274.7L786.1,286.9L787.2,297.1L788.3,305.5L789.4,312.5L790.4,318.3L791.5,323.0L792.6,327.0L793.7,330.3L794.8,316.6L795.8,306.3L796.9,298.4L797.9,292.4L799.0,287.8L800.0,284.4L801.1,281.8L802.1,279.8L803.2,278.3L804.2,277.1L805.3,276.2L806.3,275.6L807.3,275.1L808.4,274.7L809.3,286.9L810.3,297.1L811.4,305.5L812.4,312.5L813.4,318.2L814.4,323.0L815.5,327.0L816.5,330.3L817.6,316.9L818.6,306.6L819.7,298.7L820.7,292.8L821.7,288.2L822.7,284.7L823.7,282.0L824.8,280.0L825.8,278.4L826.8,277.2L827.8,276.3L828.9,275.6L829.9,275.1L830.9,274.7L831.9,286.9L833.0,297.1L834.2,305.5L835.3,312.4L836.4,318.2L837.5,323.0L838.6,327.0L839.7,330.3L840.8,317.1L841.8,307.0L842.8,299.3L843.8,293.3L844.8,288.7L845.8,285.2L846.8,282.5L847.8,280.5L848.8,278.9L849.9,277.7L850.9,276.7L851.9,276.0L852.9,275.5L853.9,275.0L854.9,274.7L855.8,286.9L856.9,297.1L857.9,305.5L859.0,312.4L860.0,318.2L861.1,323.0L862.1,326.9L863.2,330.2L864.3,317.0L865.3,306.8L866.3,299.0L867.3,293.0L868.3,288.4L869.3,284.9L870.3,282.2L871.3,280.1L872.3,278.5L873.4,277.3L874.4,276.4L875.4,275.7L876.4,275.1L877.4,274.7L878.5,286.9L879.6,297.0L880.8,305.4L882.0,312.4L883.2,318.2L884.4,322.9L885.5,326.9L886.7,330.2L887.6,319.1L888.5,310.3L889.3,303.1L890.2,297.4L891.0,292.9L891.9,289.2L892.7,286.3L893.5,283.9L894.4,282.0L895.2,280.5L896.1,279.3L896.9,278.4L897.7,277.6L898.6,277.0L899.8,289.7L901.1,300.3L902.4,309.0L903.7,316.3L905.0,322.3L906.3,327.3L907.6,331.5L908.9,334.9L909.8,323.7L910.6,314.7L911.5,307.5L912.3,301.6L913.1,296.9L913.9,293.0L914.7,289.9L915.5,287.4L916.3,285.4L917.1,283.8L918.0,282.5L918.8,281.4L919.6,280.6L920.4,279.9L921.6,292.5L922.9,303.0L924.2,311.7L925.5,319.0L926.8,324.9L928.1,329.9L929.4,334.0L930.7,337.4L931.8,324.9L932.7,315.2L933.7,307.7L934.7,301.8L935.6,297.3L936.6,293.7L937.5,291.0L938.5,288.8L939.4,287.2L940.4,285.9L941.4,284.9L942.3,284.1L943.3,283.5L944.2,283.0L945.3,295.2L946.4,305.2L947.6,313.6L948.7,320.5L949.8,326.2L951.0,331.0L952.1,334.9L953.2,338.2L954.3,325.7L955.3,315.9L956.2,308.3L957.2,302.4L958.1,297.8L959.1,294.3L960.1,291.5L961.0,289.3L962.0,287.7L962.9,286.4L963.9,285.4L964.8,284.6L965.8,284.0L966.8,283.5L967.8,295.7L968.9,305.8L970.0,314.1L971.1,321.1L972.2,326.8L973.3,331.6L974.4,335.5L975.5,338.8L976.5,326.1L977.5,316.2L978.4,308.6L979.4,302.6L980.4,298.0L981.3,294.4L982.3,291.6L983.2,289.4L984.2,287.7L985.1,286.4L986.1,285.4L987.1,284.6L988.0,284.0L989.0,283.5L990.0,295.7L991.2,305.8L992.3,314.1L993.4,321.1L994.6,326.8L995.7,331.6L996.8,335.5L998.0,338.8L999.0,326.3L1000.0,316.6L1000.9,309.0L1001.8,303.0L1002.8,298.4L1003.7,294.7L1004.6,291.9L1005.6,289.6L1006.5,287.9L1007.4,286.5L1008.4,285.5L1009.3,284.7L1010.3,284.0L1011.2,283.5L1012.3,295.7L1013.4,305.8L1014.6,314.1L1015.8,321.1L1017.0,326.8L1018.2,331.6L1019.3,335.5L1020.5,338.8L1021.5,326.9L1022.4,317.4L1023.3,309.9L1024.1,304.0L1025.0,299.2L1025.9,295.5L1026.8,292.6L1027.7,290.2L1028.6,288.4L1029.5,286.9L1030.3,285.7L1031.2,284.8L1032.1,284.1L1033.0,283.5L1034.0,295.7L1035.2,305.8L1036.3,314.1L1037.5,321.1L1038.7,326.8L1039.8,331.6L1041.0,335.5L1042.1,338.8L1043.1,326.3L1044.1,316.6L1045.0,309.0L1045.9,303.0L1046.9,298.4L1047.8,294.7L1048.8,291.9L1049.7,289.6L1050.6,287.9L1051.6,286.5L1052.5,285.5L1053.4,284.7L1054.4,284.0L1055.3,283.5L1056.4,295.7L1057.6,305.8L1058.7,314.1L1059.9,321.1L1061.1,326.8L1062.3,331.6L1063.4,335.5L1064.6,338.8L1065.6,326.8L1066.5,317.3L1067.4,309.8L1068.3,303.8L1069.2,299.1L1070.1,295.4L1071.0,292.5L1071.9,290.1L1072.8,288.3L1073.6,286.8L1074.5,285.7L1075.4,284.8L1076.3,284.1L1077.2,283.5L1078.3,295.7L1079.5,305.8L1080.7,314.1L1081.9,321.1L1083.1,326.8L1084.3,331.6L1085.4,335.6L1086.6,338.8L1087.5,328.4L1088.3,319.9L1089.0,312.9L1089.8,307.2L1090.6,302.5L1091.3,298.7L1092.1,295.6L1092.9,293.0L1093.6,290.9L1094.4,289.2L1095.2,287.8L1095.9,286.6L1096.7,285.7L1097.5,284.9L1098.7,297.2L1099.9,307.4L1101.2,315.8L1102.5,322.8L1103.7,328.6L1105.0,333.4L1106.3,337.4L1107.5,340.7L1108.4,331.1L1109.2,323.0L1109.9,316.2L1110.7,310.4L1111.5,305.6L1112.3,301.5L1113.0,298.1L1113.8,295.2L1114.6,292.8L1115.4,290.7L1116.1,289.0L1116.9,287.5L1117.7,286.3L1118.5,285.3L1119.6,297.9L1120.8,308.3L1122.1,317.0L1123.3,324.2L1124.5,330.1L1125.7,335.0L1127.0,339.1L1128.2,342.5L1129.1,332.4L1129.9,324.0L1130.7,316.9L1131.5,310.9L1132.3,305.9L1133.1,301.7L1133.9,298.2L1134.7,295.2L1135.5,292.7L1136.3,290.6L1137.1,288.9L1138.0,287.4L1138.8,286.2L1139.6,285.1L1140.6,297.8L1141.8,308.3L1143.0,317.0L1144.2,324.2L1145.4,330.2L1146.6,335.2L1147.8,339.3L1149.0,342.7L1149.9,332.4L1150.7,323.9L1151.5,316.7L1152.4,310.6L1153.2,305.6L1154.0,301.4L1154.8,297.9L1155.6,294.9L1156.5,292.5L1157.3,290.4L1158.1,288.7L1158.9,287.2L1159.7,286.0L1160.5,285.0L1161.6,297.7L1162.8,308.2L1164.0,316.9L1165.2,324.2L1166.4,330.2L1167.6,335.2L1168.8,339.3L1170.0,342.7L1170.9,332.2L1171.7,323.5L1172.6,316.2L1173.4,310.2L1174.3,305.1L1175.1,300.9L1176.0,297.4L1176.8,294.5L1177.6,292.1L1178.5,290.1L1179.3,288.4L1180.2,287.0L1181.0,285.8L1181.8,284.8L1183.0,297.6L1184.2,308.1L1185.4,316.9L1186.6,324.1L1187.8,330.2L1189.0,335.1L1190.2,339.3L1191.5,342.7L1192.4,332.2L1193.2,323.4L1194.1,316.2L1194.9,310.1L1195.8,305.0L1196.6,300.8L1197.4,297.3L1198.3,294.4L1199.1,292.0L1200.0,289.9L1200.8,288.2L1201.7,286.8L1202.5,285.7L1203.3,284.7L1204.4,297.5L1205.6,308.0L1206.7,316.8L1207.9,324.1L1209.1,330.1L1210.2,335.1L1211.4,339.3L1212.6,342.7L1213.5,332.0L1214.4,323.1L1215.2,315.7L1216.1,309.6L1217.0,304.5L1217.8,300.3L1218.7,296.9L1219.6,294.0L1220.4,291.6L1221.3,289.6L1222.1,288.0L1223.0,286.6L1223.9,285.5L1224.7,284.5L1225.8,297.3L1226.9,308.0L1228.1,316.7L1229.2,324.0L1230.4,330.1L1231.5,335.1L1232.7,339.3L1233.8,342.7L1234.8,332.3L1235.6,323.7L1236.4,316.4L1237.2,310.4L1238.0,305.3L1238.9,301.0L1239.7,297.5L1240.5,294.5L1241.3,292.0L1242.1,289.9L1243.0,288.2L1243.8,286.7L1244.6,285.5L1245.4,284.5L1246.4,297.3L1247.5,307.9L1248.6,316.7L1249.8,324.0L1250.9,330.1L1252.0,335.1L1253.1,339.3L1254.2,342.7L1255.3,330.9L1256.3,321.4L1257.3,313.7L1258.2,307.5L1259.2,302.5L1260.2,298.4L1261.2,295.1L1262.2,292.5L1263.1,290.3L1264.1,288.6L1265.1,287.2L1266.1,286.1L1267.1,285.2L1268.0,284.4L1268.9,297.3L1270.0,307.9L1271.0,316.7L1272.0,324.0L1273.0,330.1L1274.0,335.1L1275.0,339.2L1276.0,342.7L1277.0,331.5L1277.9,322.3L1278.9,314.8L1279.8,308.6L1280.7,303.6L1281.6,299.4L1282.5,296.0L1283.4,293.2L1284.3,290.9L1285.3,289.1L1286.2,287.5L1287.1,286.3L1288.0,285.2L1288.9,284.4L1290.0,297.2L1291.1,307.9L1292.3,316.7L1293.4,324.0L1294.6,330.1L1295.7,335.1L1296.9,339.2L1298.0,342.7L1298.9,332.5L1299.7,323.9L1300.5,316.6L1301.3,310.6L1302.2,305.5L1303.0,301.2L1303.8,297.6L1304.6,294.6L1305.4,292.1L1306.2,290.0L1307.0,288.2L1307.8,286.7L1308.6,285.4L1309.4,284.4L1310.5,297.2L1311.8,307.8L1313.0,316.7L1314.3,324.0L1315.5,330.0L1316.7,335.1L1318.0,339.2L1319.2,342.7L1320.2,332.2L1321.0,323.4L1321.8,316.1L1322.7,310.0L1323.5,304.9L1324.3,300.7L1325.2,297.1L1326.0,294.2L1326.8,291.7L1327.7,289.7L1328.5,287.9L1329.3,286.5L1330.2,285.3L1331.0,284.3L1332.1,297.2L1333.2,307.8L1334.4,316.7L1335.5,324.0L1336.7,330.0L1337.9,335.1L1339.0,339.2L1340.2,342.7L1341.2,331.9L1342.0,323.0L1342.9,315.6L1343.8,309.5L1344.6,304.4L1345.5,300.2L1346.3,296.7L1347.2,293.8L1348.1,291.4L1348.9,289.4L1349.8,287.7L1350.7,286.4L1351.5,285.2L1352.4,284.3L1353.4,297.1L1354.6,307.8L1355.7,316.6L1356.9,324.0L1358.0,330.0L1359.2,335.1L1360.3,339.2L1361.5,342.7L1362.4,332.3L1363.2,323.6L1364.1,316.3L1364.9,310.2L1365.7,305.1L1366.5,300.9L1367.3,297.3L1368.2,294.3L1369.0,291.8L1369.8,289.7L1370.6,288.0L1371.4,286.5L1372.2,285.3L1373.1,284.3L1374.1,297.1L1375.3,307.8L1376.4,316.6L1377.6,323.9L1378.7,330.0L1379.9,335.1L1381.0,339.2L1382.2,342.7L1383.1,332.0L1384.0,323.1L1384.8,315.7L1385.7,309.6L1386.6,304.5L1387.4,300.2L1388.3,296.7L1389.1,293.8L1390.0,291.4L1390.8,289.4L1391.7,287.7L1392.5,286.3L1393.4,285.2L1394.3,284.2L1395.3,297.1L1396.4,307.8L1397.5,316.6L1398.7,323.9L1399.8,330.0L1400.9,335.1L1402.0,339.2L1403.2,342.7L1404.1,332.3L1404.9,323.6L1405.7,316.3L1406.5,310.2L1407.4,305.1L1408.2,300.8L1409.0,297.3L1409.8,294.3L1410.6,291.8L1411.5,289.7L1412.3,287.9L1413.1,286.4L1413.9,285.2L1414.7,284.2L1415.8,297.1L1417.0,307.7L1418.2,316.6L1419.3,323.9L1420.5,330.0L1421.7,335.1L1422.9,339.2L1424.0,342.7L1425.0,332.4L1425.8,323.7L1426.6,316.4L1427.4,310.3L1428.2,305.2L1429.0,300.9L1429.8,297.3L1430.6,294.3L1431.5,291.8L1432.3,289.7L1433.1,287.9L1433.9,286.4L1434.7,285.2L1435.5,284.1L1436.6,297.0L1437.8,307.7L1438.9,316.6L1440.1,323.9L1441.3,330.0L1442.5,335.0L1443.7,339.2L1444.8,342.7L1445.7,332.5L1446.5,323.9L1447.3,316.6L1448.1,310.6L1448.9,305.5L1449.7,301.2L1450.5,297.5L1451.3,294.5L1452.1,291.9L1452.9,289.8L1453.7,288.0L1454.5,286.5L1455.3,285.2L1456.1,284.1L1457.2,297.0L1458.4,307.7L1459.6,316.6L1460.9,323.9L1462.1,330.0L1463.3,335.0L1464.5,339.2L1465.7,342.7L1466.6,332.3L1467.4,323.7L1468.2,316.4L1469.1,310.3L1469.9,305.2L1470.7,300.9L1471.5,297.3L1472.3,294.3L1473.1,291.7L1473.9,289.6L1474.7,287.9L1475.6,286.4L1476.4,285.1L1477.2,284.1L1478.3,297.0L1479.5,307.7L1480.7,316.5L1481.9,323.9L1483.1,330.0L1484.3,335.0L1485.5,339.2L1486.7,342.7L1487.6,332.1L1488.5,323.2L1489.3,315.9L1490.2,309.7L1491.0,304.6L1491.8,300.4L1492.7,296.8L1493.5,293.8L1494.4,291.4L1495.2,289.3L1496.0,287.6L1496.9,286.2L1497.7,285.0L1498.6,284.0L1499.6,296.9L1500.8,307.7L1501.9,316.5L1503.1,323.9L1504.2,330.0L1505.4,335.0L1506.5,339.2L1507.7,342.7L1508.6,332.4L1509.4,323.7L1510.2,316.5L1511.0,310.4L1511.8,305.3L1512.6,301.0L1513.4,297.3L1514.2,294.3L1515.0,291.8L1515.8,289.6L1516.6,287.8L1517.4,286.3L1518.2,285.1L1519.0,284.0L1520.1,296.9L1521.2,307.6L1522.4,316.5L1523.5,323.9L1524.6,330.0L1525.8,335.0L1526.9,339.2L1528.1,342.7L1529.0,332.2L1529.8,323.4L1530.6,316.0L1531.5,309.9L1532.3,304.8L1533.1,300.5L1533.9,296.9L1534.8,293.9L1535.6,291.4L1536.4,289.3L1537.2,287.6L1538.1,286.1L1538.9,284.9L1539.7,283.9L1540.8,296.8L1542.0,307.6L1543.1,316.5L1544.3,323.8L1545.4,329.9L1546.6,335.0L1547.8,339.2L1548.9,342.7L1549.8,332.5L1550.6,324.0L1551.4,316.7L1552.2,310.6L1553.0,305.5L1553.7,301.2L1554.5,297.5L1555.3,294.4L1556.1,291.8L1556.9,289.6L1557.6,287.8L1558.4,286.2L1559.2,284.9L1560.0,283.8L1561.1,296.7L1562.3,307.5L1563.5,316.4L1564.8,323.8L1566.0,329.9L1567.2,335.0L1568.4,339.2L1569.6,342.7L1570.5,332.1L1571.4,323.3L1572.2,315.9L1573.0,309.8L1573.8,304.6L1574.7,300.3L1575.5,296.7L1576.3,293.7L1577.2,291.2L1578.0,289.1L1578.8,287.3L1579.6,285.9L1580.5,284.7L1581.3,283.6L1582.3,296.6L1583.4,307.4L1584.5,316.3L1585.6,323.8L1586.8,329.9L1587.9,335.0L1589.0,339.2L1590.1,342.7L1591.1,331.1L1592.1,321.7L1593.0,314.0L1593.9,307.7L1594.9,302.6L1595.8,298.4L1596.7,295.0L1597.7,292.2L1598.6,289.9L1599.6,288.1L1600.5,286.6L1601.4,285.3L1602.4,284.3L1603.3,283.5L1604.3,296.5L1605.4,307.3L1606.5,316.3L1607.5,323.7L1608.6,329.9L1609.7,335.0L1610.8,339.2L1611.9,342.7L1612.7,334.4L1613.4,327.2L1614.1,321.0L1614.7,315.7L1615.4,311.1L1616.1,307.1L1616.8,303.7L1617.5,300.8L1618.2,298.3L1618.9,296.1L1619.6,294.2L1620.2,292.6L1620.9,291.2L1621.6,290.0L1622.9,303.2L1624.4,314.2L1625.8,323.3L1627.2,330.8L1628.6,337.1L1630.0,342.3L1631.5,346.6L1632.9,350.1L1633.7,340.6L1634.4,332.5L1635.2,325.6L1635.9,319.7L1636.6,314.6L1637.3,310.3L1638.1,306.6L1638.8,303.5L1639.5,300.8L1640.2,298.5L1640.9,296.5L1641.7,294.8L1642.4,293.4L1643.1,292.1L1644.3,305.0L1645.6,315.6L1646.9,324.5L1648.2,331.8L1649.5,337.8L1650.8,342.9L1652.2,347.0L1653.5,350.5L1654.3,341.2L1655.0,333.2L1655.7,326.4L1656.4,320.5L1657.1,315.5L1657.9,311.2L1658.6,307.6L1659.3,304.4L1660.0,301.8L1660.7,299.5L1661.4,297.5L1662.2,295.8L1662.9,294.4L1663.6,293.2L1664.7,305.8L1666.0,316.2L1667.3,324.9L1668.5,332.1L1669.8,338.1L1671.0,343.0L1672.3,347.1L1673.5,350.5L1674.4,341.1L1675.1,333.0L1675.8,326.1L1676.5,320.3L1677.3,315.3L1678.0,311.0L1678.7,307.4L1679.5,304.3L1680.2,301.6L1680.9,299.4L1681.7,297.4L1682.4,295.8L1683.1,294.4L1683.9,293.2L1685.0,305.8L1686.2,316.3L1687.4,324.9L1688.7,332.1L1689.9,338.1L1691.1,343.0L1692.4,347.1L1693.6,350.5L1694.5,340.7L1695.2,332.4L1696.0,325.4L1696.8,319.5L1697.6,314.5L1698.3,310.2L1699.1,306.7L1699.9,303.7L1700.7,301.1L1701.4,299.0L1702.2,297.1L1703.0,295.6L1703.8,294.3L1704.5,293.2L1705.7,305.8L1707.0,316.3L1708.2,324.9L1709.5,332.1L1710.8,338.1L1712.0,343.0L1713.3,347.1L1714.6,350.5L1715.4,341.1L1716.1,333.0L1716.9,326.1L1717.6,320.3L1718.3,315.3L1719.1,311.0L1719.8,307.4L1720.5,304.3L1721.3,301.6L1722.0,299.4L1722.7,297.4L1723.4,295.8L1724.2,294.4L1724.9,293.2L1726.1,305.8L1727.5,316.3L1728.8,325.0L1730.1,332.1L1731.5,338.1L1732.8,343.0L1734.1,347.1L1735.5,350.5L1736.3,341.2L1736.9,333.3L1737.6,326.4L1738.3,320.5L1739.0,315.4L1739.7,311.0L1740.4,307.3L1741.1,304.0L1741.8,301.3L1742.5,298.9L1743.2,296.8L1743.9,295.0L1744.6,293.5L1745.3,292.2L1746.2,306.0L1747.1,317.5L1748.1,327.0L1749.1,334.9L1750.0,341.4L1751.0,346.8L1752.0,351.3L1753.0,355.1L1754.1,346.8L1755.1,339.7L1756.2,333.5L1757.2,328.2L1758.3,323.7L1759.3,319.8L1760.3,316.4L1761.4,313.5L1762.4,310.9L1763.5,308.8L1764.5,306.9L1765.6,305.3L1766.6,303.9L1767.6,302.7L1768.7,301.7L1769.7,300.8L1770.8,300.0L1771.8,299.4L1772.8,310.4L1773.8,319.6L1774.9,327.2L1776.0,333.4L1777.1,338.7L1778.1,343.0L1779.2,346.6L1780.3,349.5L1781.2,339.6L1782.1,331.4L1782.9,324.6L1783.8,318.9L1784.6,314.1L1785.5,310.2L1786.3,306.9L1787.2,304.2L1788.0,301.9L1788.9,300.1L1789.7,298.5L1790.6,297.2L1791.4,296.1L1792.3,295.2L1793.3,307.5L1794.5,317.7L1795.7,326.1L1796.8,333.1L1798.0,339.0L1799.2,343.8L1800.3,347.8L1801.5,351.1L1802.4,341.2L1803.2,332.9L1804.0,326.0L1804.8,320.2L1805.6,315.3L1806.5,311.2L1807.3,307.8L1808.1,304.9L1808.9,302.5L1809.7,300.5L1810.5,298.8L1811.3,297.4L1812.1,296.2L1812.9,295.2L1814.2,302.2" stroke="#7f80cd" stroke-width="1.7"/>
<path d="M60.5,464.4L131.0,464.4" stroke="#7f80cd" stroke-width="2"/>
<path d="M249.2,399.6L251.0,391.0L253.1,385.2L258.3,378.6L266.2,370.8L279.3,356.4L292.4,342.0L305.5,331.2L318.6,321.2L331.7,312.3L344.8,303.9L357.9,294.8L371.0,288.2L384.1,281.7L397.2,275.9L410.3,270.7L423.4,266.0L436.5,261.3L449.6,255.5" stroke="#7f80cd" stroke-width="2"/>
<path d="M60.5,466.0C72.1,466.0 117.8,466.5 130.0,466.0C133.9,465.5 132.9,462.2 133.9,463.0C134.9,463.8 135.3,468.6 136.2,470.6C137.1,472.6 138.3,474.6 139.2,475.2C140.1,475.8 140.7,474.9 141.5,474.0C142.3,473.1 142.8,470.4 143.8,469.5C144.8,468.6 146.4,469.9 147.7,468.7C149.0,467.5 150.2,464.7 151.5,462.2C152.8,459.7 154.0,456.2 155.3,453.8C156.6,451.4 157.5,448.8 159.2,447.7C160.9,446.6 163.7,447.1 165.3,447.3C167.0,447.5 167.8,449.8 169.1,448.8C170.4,447.8 171.8,444.6 172.9,441.5C174.1,438.4 174.7,432.0 176.0,430.5C177.3,429.0 179.4,431.9 181.0,432.5C182.6,433.1 183.6,433.9 185.7,434.0C187.8,434.1 191.6,434.2 193.5,433.4C195.4,432.6 195.9,430.6 197.0,429.0C198.1,427.4 198.8,424.0 200.3,423.7C201.8,423.4 204.2,426.0 206.0,427.0C207.8,428.0 208.4,429.1 211.0,429.5C213.6,429.9 219.5,430.3 221.7,429.5C223.9,428.7 223.2,426.2 224.0,424.5C224.8,422.8 225.3,419.9 226.5,419.4C227.7,418.9 229.4,420.9 231.0,421.5C232.6,422.1 234.0,422.5 236.2,422.7C238.4,422.9 242.3,422.0 244.0,422.7C245.7,423.4 245.8,424.7 246.5,427.0C247.2,429.3 247.5,434.5 248.4,436.3C249.3,438.1 250.2,438.0 251.8,437.6C253.5,437.2 255.9,435.4 258.3,433.7C260.7,431.9 262.7,430.8 266.2,427.1C269.7,423.4 274.9,417.1 279.3,411.4C283.7,405.7 288.0,398.7 292.4,393.0C296.8,387.3 301.1,382.1 305.5,377.3C309.9,372.5 314.2,368.1 318.6,364.2C323.0,360.3 327.3,356.8 331.7,353.7C336.1,350.6 340.4,349.2 344.8,345.9C349.2,342.6 353.5,337.4 357.9,334.1C362.3,330.8 366.6,328.6 371.0,326.2C375.4,323.8 379.7,321.7 384.1,319.7C388.5,317.7 392.8,316.3 397.2,314.4C401.6,312.5 405.9,310.3 410.3,308.4C414.7,306.5 419.0,304.8 423.4,303.2C427.8,301.6 433.0,300.2 436.5,298.7C440.0,297.2 442.2,295.3 444.4,294.3C446.6,293.3 448.1,292.6 449.6,292.7C451.1,292.8 452.2,293.7 453.5,294.8C454.8,295.9 456.1,299.3 457.4,299.5C458.7,299.7 460.0,296.8 461.4,296.1C462.8,295.4 464.5,295.7 466.0,295.3C467.5,294.9 468.9,294.6 470.6,294.0C472.3,293.4 474.0,292.8 476.0,292.0C478.0,291.2 481.1,289.3 482.8,289.3C484.5,289.3 484.8,290.9 486.0,292.0C487.2,293.1 488.5,295.7 490.0,296.0C491.5,296.3 493.3,294.2 495.1,294.0C496.9,293.8 499.4,295.2 501.0,295.0C502.6,294.8 503.4,293.7 505.0,293.0C506.6,292.3 508.7,291.2 510.4,290.9C512.1,290.6 513.6,290.4 515.0,291.3C516.4,292.2 517.7,294.6 519.0,296.0C520.3,297.4 521.3,299.2 522.6,299.5C523.9,299.8 525.6,298.0 527.0,297.5C528.4,297.0 529.2,296.8 531.0,296.5C532.8,296.2 536.1,295.4 537.9,296.0C539.7,296.6 540.6,298.8 542.0,300.0C543.4,301.2 544.1,302.8 546.0,303.2C547.9,303.6 551.5,301.6 553.2,302.2C554.9,302.8 555.1,305.3 556.0,307.0C556.9,308.7 556.9,311.1 558.3,312.3C559.7,313.5 562.5,314.0 564.4,314.0C566.3,314.0 568.1,313.8 569.5,312.3C570.9,310.8 571.0,307.1 572.5,305.2C574.0,303.3 577.0,301.4 578.7,301.1C580.5,300.8 581.6,302.6 583.0,303.5C584.4,304.4 585.1,305.9 586.8,306.2C588.5,306.5 591.0,305.5 593.0,305.3C595.0,305.1 597.3,304.7 599.0,304.8C600.7,304.9 601.8,305.2 603.0,305.8C604.2,306.4 604.8,307.6 606.0,308.5C607.2,309.4 608.6,311.0 610.3,311.3C612.0,311.6 614.1,310.6 616.0,310.3C617.9,310.0 619.6,310.0 621.5,309.3C623.4,308.6 626.1,306.2 627.6,306.2C629.1,306.2 629.5,308.3 630.5,309.5C631.5,310.7 632.5,313.0 633.7,313.4C635.0,313.8 636.3,312.3 638.0,311.8C639.7,311.3 641.7,311.0 643.9,310.3C646.1,309.6 649.1,307.8 651.0,307.9C652.9,308.0 653.3,309.6 655.0,311.0C656.7,312.4 659.2,315.7 661.2,316.4C663.2,317.1 665.0,315.5 667.0,315.0C669.0,314.5 671.8,313.3 673.5,313.4C675.2,313.5 675.9,314.9 677.0,315.8C678.1,316.7 677.0,319.0 680.0,318.9C683.4,318.8 693.1,315.1 697.3,315.5C701.5,315.9 702.8,320.7 705.3,321.4C707.9,322.1 710.3,320.3 712.8,319.5C715.3,318.7 717.7,315.9 720.3,316.4C722.8,316.9 725.3,321.7 727.9,322.4C730.4,323.0 733.0,321.2 735.6,320.5C738.2,319.8 740.9,317.2 743.4,317.9C745.9,318.6 748.1,323.9 750.6,324.7C753.1,325.6 755.8,323.8 758.4,322.9C761.0,322.0 763.6,319.2 766.2,319.6C768.8,319.9 771.5,324.5 774.1,325.1C776.7,325.6 779.3,323.8 781.8,322.8C784.4,321.9 787.0,319.0 789.6,319.4C792.1,319.7 794.4,324.4 797.0,324.9C799.5,325.5 802.2,323.6 804.9,322.7C807.5,321.7 810.3,318.9 812.8,319.2C815.3,319.6 817.3,324.2 819.8,324.8C822.2,325.3 825.0,323.4 827.5,322.5C830.1,321.5 832.7,318.7 835.3,319.0C837.9,319.4 840.4,324.0 843.0,324.6C845.7,325.1 848.4,323.3 851.1,322.3C853.9,321.4 856.7,318.5 859.3,318.9C861.8,319.2 864.0,323.9 866.5,324.4C868.9,324.9 871.6,323.1 874.1,322.1C876.7,321.2 879.1,318.3 881.8,318.7C884.4,319.1 887.6,323.9 890.0,324.6C892.5,325.2 894.3,323.2 896.5,322.5C898.7,321.8 900.4,319.6 903.0,320.5C905.6,321.5 909.6,327.1 912.2,328.2C914.8,329.2 916.4,327.5 918.5,326.9C920.6,326.3 922.2,323.7 924.8,324.5C927.4,325.2 931.3,330.5 934.0,331.4C936.8,332.4 938.9,330.9 941.3,330.2C943.8,329.6 946.1,327.0 948.6,327.6C951.2,328.2 954.0,333.1 956.5,333.8C959.1,334.5 961.4,332.5 963.9,331.6C966.3,330.7 968.7,327.8 971.2,328.2C973.6,328.6 976.3,333.2 978.8,333.8C981.2,334.4 983.6,332.5 986.1,331.6C988.5,330.7 990.8,327.9 993.4,328.2C995.9,328.5 998.8,333.2 1001.3,333.7C1003.8,334.1 1006.1,332.0 1008.4,330.9C1010.8,329.8 1013.0,326.7 1015.6,326.9C1018.1,327.1 1021.3,331.6 1023.8,332.1C1026.3,332.6 1028.3,330.9 1030.6,330.0C1032.9,329.1 1034.9,326.2 1037.4,326.6C1039.9,327.0 1042.9,331.7 1045.4,332.3C1047.9,332.9 1050.2,331.0 1052.6,330.1C1054.9,329.2 1057.1,326.4 1059.7,326.8C1062.3,327.2 1065.4,331.9 1067.9,332.5C1070.4,333.1 1072.5,331.3 1074.8,330.4C1077.1,329.5 1079.1,326.7 1081.6,327.1C1084.1,327.5 1087.6,332.0 1089.9,332.8C1092.3,333.6 1093.9,332.2 1095.9,331.7C1097.9,331.1 1099.4,328.7 1101.9,329.4C1104.4,330.1 1108.3,335.2 1110.8,336.0C1113.3,336.9 1114.8,335.1 1116.8,334.3C1118.9,333.5 1120.4,330.8 1122.9,331.4C1125.3,331.9 1129.0,336.9 1131.5,337.6C1134.0,338.3 1135.7,336.6 1137.7,335.8C1139.8,334.9 1141.5,332.2 1144.0,332.7C1146.4,333.2 1149.8,338.1 1152.3,338.7C1154.7,339.4 1156.5,337.6 1158.6,336.7C1160.7,335.8 1162.5,333.0 1164.9,333.4C1167.4,333.8 1170.8,338.5 1173.3,339.1C1175.7,339.7 1177.6,337.8 1179.8,336.9C1181.9,336.0 1183.7,333.1 1186.2,333.5C1188.7,333.9 1192.3,338.5 1194.8,339.1C1197.3,339.7 1199.1,337.8 1201.2,336.9C1203.4,336.0 1205.3,333.1 1207.7,333.5C1210.2,333.9 1213.4,338.5 1215.9,339.1C1218.3,339.7 1220.3,337.8 1222.5,336.9C1224.7,336.0 1226.7,333.1 1229.1,333.5C1231.6,333.9 1234.8,338.5 1237.1,339.1C1239.5,339.7 1241.4,337.8 1243.5,336.9C1245.6,336.0 1247.5,332.6 1249.8,333.5C1252.1,334.4 1255.0,340.7 1257.5,342.0C1260.0,343.4 1262.5,342.2 1265.0,341.6C1267.5,341.0 1270.0,337.8 1272.4,338.2C1274.8,338.6 1277.0,343.6 1279.3,343.8C1281.6,344.0 1284.0,341.0 1286.3,339.3C1288.7,337.6 1290.8,333.7 1293.3,333.7C1295.8,333.7 1299.0,338.7 1301.3,339.3C1303.7,339.9 1305.5,338.0 1307.6,337.1C1309.6,336.2 1311.3,333.3 1313.8,333.7C1316.3,334.0 1320.0,338.7 1322.5,339.3C1325.0,339.8 1326.8,338.0 1329.0,337.1C1331.1,336.1 1333.0,333.3 1335.4,333.7C1337.8,334.0 1341.0,338.7 1343.5,339.3C1346.0,339.8 1347.9,338.0 1350.1,337.1C1352.4,336.1 1354.3,333.3 1356.8,333.7C1359.2,334.0 1362.4,338.7 1364.8,339.2C1367.2,339.8 1369.0,338.0 1371.1,337.0C1373.2,336.1 1375.1,333.3 1377.5,333.6C1379.9,334.0 1383.0,338.7 1385.5,339.2C1387.9,339.8 1389.9,338.0 1392.1,337.0C1394.3,336.1 1396.3,333.3 1398.7,333.6C1401.1,334.0 1404.1,338.7 1406.5,339.2C1408.8,339.8 1410.7,337.9 1412.8,337.0C1414.9,336.1 1416.7,333.2 1419.1,333.6C1421.6,334.0 1424.9,338.6 1427.3,339.2C1429.8,339.8 1431.5,337.9 1433.6,337.0C1435.7,336.1 1437.5,333.2 1439.9,333.6C1442.3,334.0 1445.7,338.6 1448.1,339.2C1450.5,339.8 1452.2,337.9 1454.3,337.0C1456.4,336.1 1458.0,333.2 1460.5,333.6C1462.9,333.9 1466.5,338.6 1469.0,339.2C1471.5,339.7 1473.2,337.9 1475.3,337.0C1477.4,336.0 1479.1,333.2 1481.6,333.6C1484.0,333.9 1487.5,338.6 1490.0,339.2C1492.5,339.7 1494.3,337.9 1496.5,337.0C1498.6,336.0 1500.6,333.2 1503.0,333.6C1505.4,333.9 1508.6,338.6 1511.0,339.1C1513.4,339.7 1515.1,337.9 1517.2,336.9C1519.3,336.0 1521.1,333.2 1523.4,333.5C1525.8,333.9 1529.0,338.6 1531.4,339.1C1533.7,339.7 1535.6,337.9 1537.7,336.9C1539.9,336.0 1541.7,333.2 1544.1,333.5C1546.5,333.9 1549.9,338.6 1552.2,339.1C1554.6,339.7 1556.3,337.8 1558.3,336.9C1560.3,336.0 1562.0,333.1 1564.4,333.5C1566.8,333.9 1570.4,338.4 1572.9,339.1C1575.4,339.8 1577.2,338.2 1579.3,337.6C1581.4,337.0 1583.3,334.7 1585.7,335.4C1588.0,336.0 1590.9,341.0 1593.4,341.7C1595.9,342.4 1598.2,340.5 1600.5,339.6C1602.9,338.6 1605.3,335.7 1607.7,336.2C1610.1,336.6 1613.0,341.5 1615.2,342.3C1617.3,343.0 1618.8,341.3 1620.6,340.5C1622.4,339.8 1623.4,337.1 1626.0,337.6C1628.6,338.2 1633.5,343.3 1636.2,344.0C1638.8,344.8 1640.0,343.0 1641.9,342.2C1643.7,341.4 1645.0,338.7 1647.5,339.3C1650.0,339.8 1654.3,344.8 1656.8,345.5C1659.2,346.3 1660.5,344.5 1662.4,343.7C1664.2,342.9 1665.6,340.2 1668.0,340.7C1670.4,341.2 1674.4,346.2 1676.8,346.8C1679.2,347.4 1680.6,345.5 1682.5,344.6C1684.4,343.7 1685.9,340.8 1688.3,341.2C1690.7,341.6 1694.4,346.2 1696.9,346.8C1699.3,347.4 1700.9,345.5 1702.9,344.6C1704.9,343.7 1706.4,340.8 1708.9,341.2C1711.4,341.6 1715.4,346.2 1717.9,346.8C1720.3,347.4 1721.7,345.6 1723.6,344.8C1725.5,343.9 1726.8,341.2 1729.3,341.6C1731.8,342.1 1736.3,347.0 1738.8,347.6C1741.2,348.3 1743.2,346.2 1744.2,345.5C1745.0,344.9 1744.2,343.4 1745.0,343.6C1745.8,343.8 1747.8,345.0 1749.0,347.0C1750.2,349.0 1750.8,353.1 1752.0,355.4C1753.2,357.7 1754.7,359.6 1756.0,361.0C1757.3,362.4 1758.8,364.3 1760.0,364.1C1761.2,363.9 1761.8,361.8 1763.0,360.0C1764.2,358.2 1765.4,354.8 1767.0,353.4C1768.6,352.0 1771.0,352.2 1772.5,351.5C1774.0,350.8 1774.8,350.0 1776.0,349.0C1777.2,348.0 1778.3,346.3 1780.0,345.7C1781.7,345.1 1784.0,345.4 1786.0,345.2C1788.0,345.0 1790.2,344.8 1792.0,344.7C1793.8,344.6 1795.4,344.6 1797.0,344.4C1798.6,344.2 1799.8,343.6 1801.6,343.6C1803.4,343.6 1805.8,344.0 1808.0,344.2C1810.2,344.4 1813.8,344.6 1815.0,344.7" stroke="#af8d00" stroke-width="1.8"/>
<path d="M60.5,466.0C72.1,466.0 118.4,466.0 130.0,466.0" stroke="#af8d00" stroke-width="2"/>
<path d="M251.8,437.6C252.9,437.0 255.9,435.4 258.3,433.7C260.7,431.9 262.7,430.8 266.2,427.1C269.7,423.4 274.9,417.1 279.3,411.4C283.7,405.7 288.0,398.7 292.4,393.0C296.8,387.3 301.1,382.1 305.5,377.3C309.9,372.5 314.2,368.1 318.6,364.2C323.0,360.3 327.3,356.8 331.7,353.7C336.1,350.6 340.4,349.2 344.8,345.9C349.2,342.6 353.5,337.4 357.9,334.1C362.3,330.8 366.6,328.6 371.0,326.2C375.4,323.8 379.7,321.7 384.1,319.7C388.5,317.7 392.8,316.3 397.2,314.4C401.6,312.5 405.9,310.3 410.3,308.4C414.7,306.5 419.0,304.8 423.4,303.2C427.8,301.6 433.0,300.2 436.5,298.7C440.0,297.2 442.2,295.3 444.4,294.3C446.6,293.3 448.7,293.0 449.6,292.7" stroke="#af8d00" stroke-width="2"/>
<path d="M60.5,459.0L130.4,459.0L133.7,358.6L140.1,445.0L143.0,344.0L146.0,322.0L149.8,295.5L153.7,377.0L157.0,408.0L160.9,427.6L164.0,360.0L166.9,309.5L171.2,386.8L174.0,406.0L177.0,419.8L181.0,427.0L185.3,431.0L188.0,370.0L190.6,319.8L193.0,372.0L195.4,404.0L199.0,418.0L203.2,425.6L208.0,430.0L212.9,433.4L215.6,370.0L218.2,319.8L220.4,368.0L222.6,400.4L226.0,414.0L230.4,423.7L238.0,431.0L247.5,436.3L249.2,360.3L251.0,334.0L253.1,315.8L255.5,302.0L258.3,293.5L262.0,285.0L263.0,283.6L264.3,282.0L265.6,281.3L266.9,279.1L268.2,278.7L269.5,277.2L270.8,276.0L272.1,276.0L273.4,274.7L274.7,274.9L276.0,274.0L277.3,273.8L278.6,274.0L279.9,274.6L281.2,273.6L282.5,273.8L283.8,274.5L285.1,275.0L286.4,274.2L287.7,273.8L289.0,274.5L290.3,272.9L291.6,274.0L292.9,273.1L294.2,272.8L295.5,273.0L296.8,273.9L298.1,275.2L299.4,274.9L300.7,275.9L302.0,276.4L303.3,276.3L304.6,276.5L305.9,275.8L307.2,275.8L308.5,275.9L309.8,276.5L311.1,276.0L312.4,275.7L313.7,275.7L315.0,274.3L316.3,272.9L317.6,272.7L318.9,272.0L320.2,270.7L321.5,270.8L322.8,270.9L324.1,271.6L325.4,271.5L326.7,270.8L328.0,271.7L329.3,270.3L330.6,270.7L331.9,271.1L333.2,270.3L334.5,271.0L335.8,270.5L337.1,271.5L338.4,271.8L339.7,271.7L341.0,272.1L342.3,271.2L343.6,271.7L344.9,271.5L346.2,271.5L347.5,271.2L348.8,271.8L350.1,271.8L351.4,270.6L352.7,270.4L354.0,268.9L355.3,269.4L356.6,268.8L357.9,268.8L359.2,268.3L360.5,267.2L361.8,267.1L363.1,267.3L364.4,266.1L365.7,266.5L367.0,266.0L368.3,266.0L369.6,266.0L370.9,267.1L372.2,266.2L373.5,266.4L374.8,266.6L376.1,267.2L377.4,265.8L378.7,266.2L380.0,266.2L381.3,266.5L382.6,266.2L383.9,266.1L385.2,265.1L386.5,265.2L387.8,265.0L389.1,265.7L390.4,265.7L391.7,264.4L393.0,264.3L394.3,264.2L395.6,264.0L396.9,264.2L398.2,264.2L399.5,263.5L400.8,262.9L402.1,263.3L403.4,262.8L404.7,262.5L406.0,262.5L407.3,261.6L408.6,260.9L409.9,260.9L411.2,260.7L412.5,259.6L413.8,260.8L415.1,260.7L416.4,260.9L417.7,260.8L419.0,260.2L420.3,260.2L421.6,259.6L422.9,260.3L424.2,259.3L425.5,259.1L426.8,259.2L428.1,259.0L429.4,259.1L430.7,258.7L432.0,258.6L433.3,258.8L434.6,258.7L435.9,259.0L437.2,258.4L438.5,259.5L439.8,259.0L441.1,258.1L442.4,258.2L443.7,258.2L445.0,258.2L446.3,257.7L447.6,258.7L448.9,258.9L449.6,258.1L450.4,273.5L451.1,286.9L451.7,298.6L452.3,308.8L452.9,317.6L453.6,325.4L454.2,332.1L454.8,338.0L455.8,322.0L456.9,309.6L457.9,299.8L458.9,292.2L460.0,286.3L461.0,281.6L462.0,277.9L463.0,274.9L464.1,272.6L465.1,270.7L466.1,269.1L467.1,267.8L468.2,266.7L469.2,265.8L470.2,265.0L471.3,264.3L472.3,263.7L473.3,263.2L474.3,262.7L475.4,262.2L476.4,261.7L477.4,261.3L478.5,260.9L479.5,260.5L480.5,260.1L481.5,259.7L482.4,277.2L483.2,292.5L484.1,305.8L484.9,317.4L485.8,327.5L486.6,336.3L487.4,344.0L488.3,350.7L489.3,332.2L490.3,317.9L491.4,306.6L492.4,297.8L493.4,290.9L494.5,285.5L495.5,281.1L496.5,277.7L497.5,274.9L498.6,272.6L499.6,270.8L500.6,269.2L501.7,267.9L502.7,266.8L503.7,265.8L504.7,264.9L505.8,264.2L506.8,263.4L507.8,262.8L508.9,262.1L509.9,261.5L510.9,261.0L512.0,279.8L513.1,296.2L514.2,310.5L515.3,323.0L516.4,333.9L517.4,343.4L518.5,351.6L519.6,358.8L520.7,336.4L521.7,319.3L522.8,306.1L523.8,296.0L524.9,288.2L526.0,282.2L527.0,277.7L528.1,274.1L529.1,271.4L530.2,269.4L531.3,267.8L532.3,266.6L533.4,265.6L534.4,264.9L535.5,264.4L536.5,282.6L537.5,298.6L538.6,312.5L539.6,324.6L540.6,335.1L541.6,344.3L542.6,352.3L543.7,359.3L546.0,320.0L548.5,295.0L551.0,280.0L554.2,271.6L558.0,268.5L562.0,266.5L566.0,264.2L569.0,263.6L571.0,262.0L574.8,261.0L575.9,279.4L577.0,295.4L578.1,309.3L579.2,321.4L580.4,332.0L581.5,341.2L582.6,349.3L583.7,356.3L584.7,332.2L585.7,314.4L586.7,301.4L587.8,291.8L588.8,284.8L589.8,279.6L590.8,275.8L591.8,273.0L592.8,271.0L593.9,269.4L594.9,268.3L595.9,267.5L596.9,266.9L597.9,266.5L599.0,285.1L600.1,301.3L601.2,315.4L602.2,327.8L603.3,338.5L604.4,347.8L605.5,356.0L606.5,363.1L607.6,336.6L608.6,317.3L609.6,303.4L610.7,293.3L611.7,286.0L612.7,280.7L613.7,276.8L614.8,274.1L615.8,272.0L616.8,270.6L617.9,269.5L618.9,268.7L619.9,268.2L621.0,267.8L622.0,267.5L623.1,286.0L624.3,302.1L625.4,316.1L626.5,328.3L627.7,339.0L628.8,348.3L630.0,356.4L631.1,363.4L632.1,336.8L633.2,317.6L634.2,303.7L635.3,293.7L636.3,286.5L637.4,281.3L638.4,277.5L639.5,274.8L640.5,272.8L641.5,271.4L642.6,270.4L643.6,269.7L644.7,269.1L645.7,268.8L646.8,268.5L648.1,288.3L649.5,305.5L650.9,320.5L652.3,333.6L653.7,345.0L655.1,354.9L656.4,363.6L657.8,371.1L658.6,349.7L659.4,332.9L660.3,319.7L661.1,309.5L661.9,301.4L662.7,295.1L663.5,290.1L664.3,286.3L665.1,283.2L665.9,280.9L666.7,279.0L667.6,277.6L668.4,276.4L669.2,275.5L670.4,294.0L671.6,310.1L672.8,324.2L674.0,336.4L675.2,347.0L676.4,356.3L677.6,364.4L678.8,371.5L679.8,346.2L680.8,327.1L681.7,312.8L682.7,302.0L683.7,293.8L684.7,287.7L685.7,283.1L686.6,279.6L687.6,276.9L688.6,275.0L689.6,273.5L690.6,272.4L691.5,271.5L692.5,270.9L693.7,289.8L694.8,306.2L696.0,320.5L697.1,333.0L698.3,343.9L699.4,353.4L700.6,361.7L701.7,368.9L702.7,345.2L703.7,327.2L704.7,313.5L705.7,303.0L706.6,295.1L707.6,289.0L708.6,284.4L709.6,280.8L710.6,278.2L711.5,276.1L712.5,274.6L713.5,273.4L714.5,272.5L715.5,271.8L716.6,290.0L717.7,305.9L718.8,319.8L719.9,331.9L721.0,342.4L722.1,351.5L723.2,359.5L724.3,366.5L725.3,342.2L726.3,324.0L727.3,310.2L728.3,299.9L729.4,292.1L730.4,286.3L731.4,281.9L732.4,278.5L733.5,276.0L734.5,274.2L735.5,272.8L736.5,271.7L737.6,270.9L738.6,270.3L739.6,288.5L740.7,304.3L741.7,318.1L742.8,330.1L743.8,340.6L744.9,349.7L745.9,357.7L747.0,364.6L748.0,340.5L749.0,322.4L750.1,308.8L751.1,298.5L752.1,290.9L753.2,285.1L754.2,280.8L755.2,277.5L756.3,275.1L757.3,273.3L758.3,271.9L759.4,270.9L760.4,270.1L761.4,269.5L762.6,288.0L763.7,304.1L764.8,318.1L766.0,330.3L767.1,341.0L768.2,350.3L769.4,358.3L770.5,365.4L771.5,341.2L772.6,323.0L773.6,309.2L774.6,298.8L775.6,291.0L776.6,285.1L777.6,280.7L778.7,277.3L779.7,274.8L780.7,272.9L781.7,271.4L782.7,270.3L783.7,269.5L784.8,268.9L785.8,287.5L786.9,303.7L788.0,317.8L789.1,330.1L790.1,340.8L791.2,350.2L792.3,358.3L793.4,365.4L794.4,340.8L795.4,322.4L796.5,308.7L797.5,298.4L798.6,290.7L799.6,284.9L800.7,280.6L801.7,277.4L802.8,275.0L803.8,273.2L804.9,271.8L805.9,270.8L806.9,270.1L808.0,269.5L809.0,287.8L810.0,303.8L811.1,317.7L812.1,329.8L813.1,340.4L814.1,349.6L815.2,357.6L816.2,364.6L817.2,340.7L818.2,322.7L819.3,309.2L820.3,299.0L821.3,291.4L822.3,285.6L823.3,281.3L824.4,278.0L825.4,275.6L826.4,273.7L827.4,272.3L828.5,271.3L829.5,270.5L830.5,269.9L831.6,288.3L832.7,304.4L833.9,318.4L835.0,330.6L836.1,341.2L837.2,350.5L838.3,358.6L839.4,365.6L840.4,341.6L841.4,323.4L842.4,309.6L843.4,299.2L844.4,291.3L845.4,285.3L846.4,280.8L847.4,277.4L848.4,274.8L849.5,272.9L850.5,271.4L851.5,270.3L852.5,269.4L853.5,268.8L854.5,268.3L855.5,286.7L856.6,302.8L857.6,316.8L858.7,329.0L859.7,339.6L860.8,348.9L861.8,357.0L862.9,364.0L863.9,339.8L864.9,321.6L865.9,307.7L866.9,297.3L867.9,289.4L868.9,283.5L869.9,279.0L870.9,275.6L871.9,273.0L873.0,271.1L874.0,269.6L875.0,268.5L876.0,267.7L877.0,267.0L878.2,285.9L879.3,302.3L880.5,316.7L881.7,329.2L882.9,340.0L884.1,349.5L885.2,357.8L886.4,365.0L887.2,344.6L888.1,328.4L888.9,315.6L889.8,305.5L890.6,297.5L891.5,291.1L892.3,286.1L893.1,282.1L894.0,279.0L894.8,276.5L895.7,274.5L896.5,272.9L897.3,271.7L898.2,270.7L899.5,290.5L900.8,307.8L902.1,322.9L903.4,336.0L904.7,347.4L906.0,357.4L907.3,366.1L908.6,373.7L909.4,352.8L910.2,336.1L911.1,322.8L911.9,312.1L912.7,303.7L913.5,296.9L914.3,291.5L915.1,287.2L915.9,283.7L916.7,281.0L917.6,278.8L918.4,277.0L919.2,275.6L920.0,274.5L921.3,293.4L922.6,309.8L923.9,324.1L925.2,336.6L926.5,347.4L927.8,356.9L929.1,365.2L930.4,372.4L931.4,348.5L932.3,330.3L933.3,316.3L934.3,305.5L935.2,297.3L936.2,291.0L937.1,286.2L938.1,282.5L939.0,279.6L940.0,277.5L941.0,275.8L941.9,274.5L942.9,273.5L943.8,272.8L945.0,291.6L946.1,307.9L947.3,322.2L948.4,334.6L949.5,345.5L950.7,354.9L951.8,363.2L952.9,370.3L953.9,346.5L954.9,328.2L955.8,314.3L956.8,303.5L957.7,295.3L958.7,289.0L959.7,284.2L960.6,280.5L961.6,277.6L962.5,275.5L963.5,273.8L964.4,272.5L965.4,271.5L966.4,270.8L967.5,289.5L968.6,305.8L969.7,320.0L970.8,332.4L971.9,343.2L973.0,352.6L974.1,360.8L975.2,367.9L976.1,344.7L977.1,326.8L978.0,313.2L979.0,302.7L980.0,294.7L980.9,288.6L981.9,283.9L982.8,280.2L983.8,277.5L984.7,275.4L985.7,273.7L986.7,272.5L987.6,271.5L988.6,270.8L989.7,289.6L990.9,305.9L992.0,320.2L993.1,332.6L994.3,343.5L995.4,352.9L996.5,361.1L997.7,368.3L998.6,345.4L999.6,327.7L1000.5,314.1L1001.4,303.6L1002.4,295.5L1003.3,289.2L1004.2,284.4L1005.2,280.7L1006.1,277.8L1007.0,275.6L1008.0,273.9L1008.9,272.6L1009.9,271.6L1010.8,270.8L1012.0,289.6L1013.1,306.1L1014.3,320.4L1015.5,332.9L1016.7,343.7L1017.9,353.2L1019.0,361.5L1020.2,368.7L1021.1,346.6L1022.0,329.4L1022.9,315.9L1023.7,305.4L1024.6,297.1L1025.5,290.7L1026.4,285.7L1027.3,281.7L1028.2,278.6L1029.1,276.2L1029.9,274.3L1030.8,272.9L1031.7,271.7L1032.6,270.8L1033.7,289.7L1034.9,306.2L1036.0,320.6L1037.2,333.1L1038.4,344.0L1039.5,353.5L1040.7,361.8L1041.8,369.0L1042.7,345.9L1043.7,328.1L1044.6,314.4L1045.5,303.8L1046.5,295.6L1047.4,289.4L1048.4,284.5L1049.3,280.8L1050.2,277.9L1051.2,275.6L1052.1,273.9L1053.0,272.6L1054.0,271.6L1054.9,270.8L1056.1,289.8L1057.3,306.3L1058.4,320.8L1059.6,333.3L1060.8,344.3L1062.0,353.9L1063.1,362.2L1064.3,369.4L1065.2,347.1L1066.1,329.6L1067.0,316.0L1067.9,305.4L1068.8,297.1L1069.7,290.6L1070.6,285.6L1071.5,281.7L1072.4,278.6L1073.2,276.2L1074.1,274.3L1075.0,272.8L1075.9,271.7L1076.8,270.8L1078.0,289.9L1079.2,306.5L1080.4,321.0L1081.6,333.6L1082.8,344.6L1084.0,354.2L1085.1,362.6L1086.3,369.8L1087.1,350.8L1087.9,335.3L1088.6,322.7L1089.4,312.6L1090.2,304.4L1090.9,297.7L1091.7,292.3L1092.5,287.9L1093.2,284.4L1094.0,281.5L1094.8,279.2L1095.5,277.3L1096.3,275.8L1097.1,274.5L1098.4,293.4L1099.6,309.9L1100.9,324.3L1102.2,336.8L1103.4,347.7L1104.7,357.2L1106.0,365.5L1107.2,372.7L1108.0,354.7L1108.8,339.7L1109.5,327.1L1110.3,316.5L1111.1,307.6L1111.9,300.2L1112.6,293.9L1113.4,288.7L1114.2,284.3L1115.0,280.7L1115.7,277.6L1116.5,275.0L1117.3,272.8L1118.1,271.0L1119.3,290.6L1120.5,307.6L1121.8,322.5L1123.0,335.5L1124.2,346.8L1125.4,356.6L1126.7,365.2L1127.9,372.7L1128.7,354.4L1129.5,339.1L1130.3,326.3L1131.1,315.6L1131.9,306.6L1132.7,299.1L1133.5,292.9L1134.3,287.6L1135.1,283.3L1135.9,279.6L1136.7,276.5L1137.6,274.0L1138.4,271.8L1139.2,270.0L1140.3,289.8L1141.5,307.0L1142.7,322.0L1143.9,335.0L1145.1,346.4L1146.3,356.4L1147.5,365.0L1148.7,372.5L1149.5,354.1L1150.3,338.7L1151.1,325.8L1152.0,315.1L1152.8,306.2L1153.6,298.8L1154.4,292.6L1155.2,287.4L1156.1,283.1L1156.9,279.5L1157.7,276.5L1158.5,274.0L1159.3,271.9L1160.1,270.2L1161.3,289.9L1162.5,307.0L1163.7,322.0L1164.9,335.0L1166.1,346.3L1167.3,356.2L1168.5,364.9L1169.7,372.4L1170.5,353.6L1171.3,338.1L1172.2,325.1L1173.0,314.4L1173.9,305.6L1174.7,298.2L1175.6,292.1L1176.4,287.0L1177.2,282.8L1178.1,279.3L1178.9,276.4L1179.8,274.0L1180.6,272.0L1181.4,270.4L1182.7,290.0L1183.9,307.1L1185.1,322.0L1186.3,334.9L1187.5,346.3L1188.7,356.1L1189.9,364.7L1191.2,372.2L1192.0,353.5L1192.8,338.0L1193.7,325.1L1194.5,314.5L1195.4,305.6L1196.2,298.3L1197.0,292.2L1197.9,287.1L1198.7,282.9L1199.6,279.5L1200.4,276.6L1201.3,274.2L1202.1,272.2L1202.9,270.6L1204.1,290.1L1205.3,307.1L1206.4,322.0L1207.6,334.9L1208.8,346.2L1209.9,356.0L1211.1,364.6L1212.3,372.0L1213.1,353.1L1214.0,337.4L1214.8,324.5L1215.7,313.8L1216.6,305.0L1217.4,297.7L1218.3,291.7L1219.2,286.8L1220.0,282.7L1220.9,279.3L1221.7,276.5L1222.6,274.2L1223.5,272.3L1224.3,270.7L1225.5,290.2L1226.6,307.2L1227.8,322.0L1228.9,334.9L1230.1,346.1L1231.2,355.9L1232.4,364.4L1233.5,371.9L1234.4,353.6L1235.2,338.4L1236.0,325.7L1236.8,315.2L1237.6,306.4L1238.5,299.0L1239.3,292.9L1240.1,287.8L1240.9,283.5L1241.7,280.0L1242.6,277.0L1243.4,274.6L1244.2,272.5L1245.0,270.8L1246.1,290.2L1247.2,307.2L1248.3,322.0L1249.5,334.8L1250.6,346.1L1251.7,355.8L1252.8,364.4L1253.9,371.8L1254.9,351.1L1255.9,334.4L1256.9,320.9L1257.8,310.1L1258.8,301.5L1259.8,294.5L1260.8,288.9L1261.8,284.3L1262.7,280.7L1263.7,277.8L1264.7,275.4L1265.7,273.5L1266.7,272.0L1267.6,270.8L1268.6,290.2L1269.7,307.2L1270.7,322.0L1271.7,334.8L1272.7,346.1L1273.7,355.8L1274.7,364.4L1275.7,371.8L1276.6,352.1L1277.5,336.0L1278.5,322.9L1279.4,312.1L1280.3,303.4L1281.2,296.3L1282.1,290.4L1283.0,285.7L1283.9,281.8L1284.9,278.6L1285.8,276.0L1286.7,273.9L1287.6,272.2L1288.5,270.8L1289.7,290.2L1290.8,307.2L1292.0,322.0L1293.1,334.8L1294.3,346.1L1295.4,355.8L1296.6,364.4L1297.7,371.8L1298.5,353.8L1299.3,338.7L1300.1,326.1L1300.9,315.6L1301.8,306.8L1302.6,299.4L1303.4,293.3L1304.2,288.1L1305.0,283.8L1305.8,280.2L1306.6,277.2L1307.4,274.7L1308.2,272.6L1309.0,270.8L1310.2,290.2L1311.5,307.2L1312.7,322.0L1314.0,334.8L1315.2,346.1L1316.4,355.8L1317.7,364.4L1318.9,371.8L1319.8,353.3L1320.6,338.0L1321.4,325.3L1322.3,314.7L1323.1,305.9L1323.9,298.6L1324.8,292.5L1325.6,287.4L1326.4,283.2L1327.3,279.8L1328.1,276.9L1328.9,274.5L1329.8,272.5L1330.6,270.8L1331.8,290.2L1332.9,307.2L1334.1,322.0L1335.2,334.8L1336.4,346.1L1337.6,355.8L1338.7,364.4L1339.9,371.8L1340.8,352.9L1341.6,337.3L1342.5,324.4L1343.4,313.7L1344.2,305.0L1345.1,297.7L1345.9,291.7L1346.8,286.8L1347.7,282.7L1348.5,279.3L1349.4,276.6L1350.3,274.3L1351.1,272.4L1352.0,270.8L1353.1,290.2L1354.3,307.2L1355.4,322.0L1356.6,334.8L1357.7,346.1L1358.9,355.8L1360.0,364.4L1361.2,371.8L1362.0,353.6L1362.8,338.4L1363.7,325.7L1364.5,315.1L1365.3,306.3L1366.1,299.0L1366.9,292.9L1367.8,287.8L1368.6,283.5L1369.4,280.0L1370.2,277.0L1371.0,274.6L1371.8,272.5L1372.7,270.8L1373.8,290.2L1375.0,307.2L1376.1,322.0L1377.3,334.8L1378.4,346.1L1379.6,355.8L1380.7,364.4L1381.9,371.8L1382.7,353.0L1383.6,337.5L1384.4,324.6L1385.3,314.0L1386.2,305.2L1387.0,297.9L1387.9,291.9L1388.7,286.9L1389.6,282.8L1390.4,279.4L1391.3,276.6L1392.1,274.3L1393.0,272.4L1393.9,270.8L1395.0,290.2L1396.1,307.2L1397.2,322.0L1398.4,334.8L1399.5,346.1L1400.6,355.8L1401.7,364.4L1402.9,371.8L1403.7,353.6L1404.5,338.4L1405.3,325.7L1406.1,315.1L1407.0,306.3L1407.8,299.0L1408.6,292.9L1409.4,287.8L1410.2,283.5L1411.1,280.0L1411.9,277.0L1412.7,274.6L1413.5,272.5L1414.3,270.8L1415.5,290.2L1416.7,307.2L1417.9,322.0L1419.0,334.8L1420.2,346.1L1421.4,355.8L1422.6,364.4L1423.7,371.8L1424.6,353.7L1425.4,338.6L1426.2,325.9L1427.0,315.4L1427.8,306.6L1428.6,299.2L1429.4,293.1L1430.2,287.9L1431.1,283.7L1431.9,280.1L1432.7,277.1L1433.5,274.6L1434.3,272.5L1435.1,270.8L1436.3,290.2L1437.5,307.2L1438.6,322.0L1439.8,334.8L1441.0,346.1L1442.2,355.8L1443.4,364.4L1444.5,371.8L1445.3,353.9L1446.1,338.9L1446.9,326.4L1447.7,315.8L1448.5,307.0L1449.3,299.7L1450.1,293.5L1450.9,288.3L1451.7,284.0L1452.5,280.3L1453.3,277.3L1454.1,274.7L1454.9,272.6L1455.7,270.8L1456.9,290.2L1458.1,307.2L1459.3,322.0L1460.6,334.8L1461.8,346.1L1463.0,355.8L1464.2,364.4L1465.4,371.8L1466.2,353.7L1467.0,338.6L1467.8,325.9L1468.7,315.4L1469.5,306.6L1470.3,299.2L1471.1,293.1L1471.9,287.9L1472.7,283.7L1473.5,280.1L1474.3,277.1L1475.2,274.6L1476.0,272.5L1476.8,270.8L1478.0,290.2L1479.2,307.2L1480.4,322.0L1481.6,334.8L1482.8,346.1L1484.0,355.8L1485.2,364.4L1486.4,371.8L1487.2,353.2L1488.1,337.8L1488.9,325.0L1489.8,314.4L1490.6,305.6L1491.4,298.3L1492.3,292.3L1493.1,287.3L1494.0,283.1L1494.8,279.7L1495.6,276.8L1496.5,274.4L1497.3,272.4L1498.2,270.8L1499.3,290.2L1500.5,307.2L1501.6,322.0L1502.8,334.8L1503.9,346.1L1505.1,355.8L1506.2,364.4L1507.4,371.8L1508.2,353.8L1509.0,338.7L1509.8,326.1L1510.6,315.6L1511.4,306.8L1512.2,299.4L1513.0,293.3L1513.8,288.1L1514.6,283.8L1515.4,280.2L1516.2,277.2L1517.0,274.7L1517.8,272.6L1518.6,270.8L1519.8,290.4L1520.9,307.5L1522.1,322.3L1523.2,335.3L1524.3,346.6L1525.5,356.4L1526.6,365.0L1527.8,372.5L1528.6,354.4L1529.4,339.3L1530.2,326.8L1531.1,316.3L1531.9,307.6L1532.7,300.4L1533.5,294.4L1534.4,289.4L1535.2,285.2L1536.0,281.7L1536.8,278.9L1537.7,276.5L1538.5,274.5L1539.3,272.8L1540.5,291.9L1541.7,308.5L1542.8,323.0L1544.0,335.6L1545.1,346.7L1546.3,356.3L1547.5,364.6L1548.6,371.9L1549.4,354.1L1550.2,339.2L1551.0,326.7L1551.8,316.1L1552.6,307.2L1553.3,299.8L1554.1,293.5L1554.9,288.3L1555.7,283.8L1556.5,280.1L1557.2,277.0L1558.0,274.4L1558.8,272.2L1559.6,270.3L1560.8,289.8L1562.0,306.7L1563.2,321.5L1564.5,334.4L1565.7,345.6L1566.9,355.4L1568.1,363.9L1569.3,371.3L1570.1,353.3L1571.0,338.2L1571.8,325.7L1572.6,315.3L1573.4,306.6L1574.3,299.4L1575.1,293.4L1575.9,288.4L1576.8,284.3L1577.6,280.8L1578.4,277.9L1579.2,275.5L1580.1,273.5L1580.9,271.9L1582.0,290.9L1583.1,307.4L1584.2,321.9L1585.3,334.4L1586.5,345.4L1587.6,355.0L1588.7,363.3L1589.8,370.5L1590.7,350.4L1591.7,334.0L1592.6,320.7L1593.5,309.9L1594.5,301.2L1595.4,294.1L1596.3,288.3L1597.3,283.6L1598.2,279.8L1599.2,276.7L1600.1,274.1L1601.0,272.1L1602.0,270.4L1602.9,269.1L1604.0,288.5L1605.1,305.4L1606.2,320.2L1607.2,333.0L1608.3,344.2L1609.4,354.0L1610.5,362.5L1611.6,369.9L1612.3,354.5L1613.0,341.2L1613.7,329.8L1614.3,320.0L1615.0,311.6L1615.7,304.4L1616.4,298.2L1617.1,292.9L1617.8,288.3L1618.5,284.4L1619.2,281.1L1619.8,278.2L1620.5,275.7L1621.2,273.6L1622.6,294.0L1624.1,311.8L1625.5,327.4L1626.9,340.9L1628.3,352.7L1629.7,363.0L1631.2,371.9L1632.6,379.7L1633.3,362.1L1634.0,347.1L1634.8,334.4L1635.5,323.5L1636.2,314.3L1636.9,306.4L1637.7,299.7L1638.4,294.0L1639.1,289.2L1639.8,285.0L1640.5,281.5L1641.3,278.5L1642.0,276.0L1642.7,273.8L1644.0,294.1L1645.3,311.8L1646.6,327.2L1647.9,340.6L1649.2,352.3L1650.5,362.5L1651.9,371.4L1653.2,379.1L1653.9,362.4L1654.6,348.1L1655.3,335.9L1656.0,325.5L1656.7,316.7L1657.5,309.1L1658.2,302.7L1658.9,297.2L1659.6,292.5L1660.3,288.5L1661.0,285.1L1661.8,282.2L1662.5,279.7L1663.2,277.6L1664.4,297.1L1665.7,314.0L1667.0,328.8L1668.2,341.7L1669.5,353.0L1670.7,362.8L1672.0,371.3L1673.2,378.7L1674.0,361.2L1674.7,346.3L1675.4,333.7L1676.1,322.9L1676.9,313.7L1677.6,306.0L1678.3,299.4L1679.1,293.7L1679.8,289.0L1680.5,284.9L1681.3,281.5L1682.0,278.5L1682.7,276.0L1683.5,273.9L1684.7,294.3L1685.9,312.0L1687.1,327.5L1688.4,340.9L1689.6,352.7L1690.8,362.9L1692.1,371.8L1693.3,379.6L1694.1,361.4L1694.8,346.0L1695.6,333.1L1696.4,322.3L1697.2,313.1L1697.9,305.4L1698.7,298.9L1699.5,293.5L1700.3,288.9L1701.0,285.0L1701.8,281.8L1702.6,279.0L1703.4,276.7L1704.1,274.8L1705.4,294.6L1706.7,311.9L1707.9,326.9L1709.2,340.0L1710.5,351.5L1711.7,361.4L1713.0,370.1L1714.3,377.7L1715.0,360.2L1715.7,345.3L1716.5,332.6L1717.2,321.8L1717.9,312.7L1718.7,304.9L1719.4,298.3L1720.1,292.7L1720.9,287.9L1721.6,283.8L1722.3,280.4L1723.0,277.5L1723.8,275.0L1724.5,272.8L1725.8,292.9L1727.2,310.4L1728.5,325.7L1729.8,339.0L1731.2,350.5L1732.5,360.6L1733.8,369.4L1735.2,377.1L1735.9,360.8L1736.5,346.8L1737.2,334.8L1737.9,324.5L1738.6,315.7L1739.3,308.1L1740.0,301.6L1740.7,296.1L1741.4,291.3L1742.1,287.3L1742.8,283.8L1743.5,280.8L1744.2,278.2L1744.9,276.0L1745.9,294.7L1746.8,311.0L1747.8,325.2L1748.8,337.5L1749.7,348.3L1750.7,357.7L1751.7,365.8L1752.7,373.0L1753.7,346.8L1754.7,327.6L1755.8,313.5L1756.8,303.1L1757.9,295.3L1758.9,289.4L1759.9,284.9L1761.0,281.4L1762.0,278.7L1763.1,276.4L1764.1,274.6L1765.2,273.0L1766.2,271.6L1767.2,270.3L1768.3,269.1L1769.3,268.1L1770.4,267.0L1771.4,266.0L1772.5,285.6L1773.5,302.6L1774.6,317.4L1775.7,330.3L1776.8,341.6L1777.8,351.4L1778.9,360.0L1780.0,367.4L1780.8,348.9L1781.7,333.5L1782.5,320.7L1783.4,310.2L1784.2,301.4L1785.1,294.2L1785.9,288.2L1786.8,283.2L1787.6,279.1L1788.5,275.7L1789.3,272.9L1790.2,270.5L1791.0,268.6L1791.9,267.0L1793.0,287.1L1794.2,304.6L1795.4,319.9L1796.5,333.2L1797.7,344.8L1798.9,354.9L1800.0,363.7L1801.2,371.3L1802.0,353.3L1802.8,338.2L1803.6,325.7L1804.4,315.2L1805.2,306.4L1806.1,299.1L1806.9,292.9L1807.7,287.8L1808.5,283.6L1809.3,280.0L1810.1,277.0L1810.9,274.6L1811.7,272.5L1812.5,270.8L1814.2,288.9" stroke="#ff7f00" stroke-width="1.85"/>
<path d="M60.5,459.0L130.4,459.0" stroke="#ff7f00" stroke-width="2"/>
<path d="M249.2,360.3L251.0,334.0L253.1,315.8L255.5,302.0L258.3,293.5L262.0,285.0L263.0,283.6L264.3,282.0L265.6,281.3L266.9,279.1L268.2,278.7L269.5,277.2L270.8,276.0L272.1,276.0L273.4,274.7L274.7,274.9L276.0,274.0L277.3,273.8L278.6,274.0L279.9,274.6L281.2,273.6L282.5,273.8L283.8,274.5L285.1,275.0L286.4,274.2L287.7,273.8L289.0,274.5L290.3,272.9L291.6,274.0L292.9,273.1L294.2,272.8L295.5,273.0L296.8,273.9L298.1,275.2L299.4,274.9L300.7,275.9L302.0,276.4L303.3,276.3L304.6,276.5L305.9,275.8L307.2,275.8L308.5,275.9L309.8,276.5L311.1,276.0L312.4,275.7L313.7,275.7L315.0,274.3L316.3,272.9L317.6,272.7L318.9,272.0L320.2,270.7L321.5,270.8L322.8,270.9L324.1,271.6L325.4,271.5L326.7,270.8L328.0,271.7L329.3,270.3L330.6,270.7L331.9,271.1L333.2,270.3L334.5,271.0L335.8,270.5L337.1,271.5L338.4,271.8L339.7,271.7L341.0,272.1L342.3,271.2L343.6,271.7L344.9,271.5L346.2,271.5L347.5,271.2L348.8,271.8L350.1,271.8L351.4,270.6L352.7,270.4L354.0,268.9L355.3,269.4L356.6,268.8L357.9,268.8L359.2,268.3L360.5,267.2L361.8,267.1L363.1,267.3L364.4,266.1L365.7,266.5L367.0,266.0L368.3,266.0L369.6,266.0L370.9,267.1L372.2,266.2L373.5,266.4L374.8,266.6L376.1,267.2L377.4,265.8L378.7,266.2L380.0,266.2L381.3,266.5L382.6,266.2L383.9,266.1L385.2,265.1L386.5,265.2L387.8,265.0L389.1,265.7L390.4,265.7L391.7,264.4L393.0,264.3L394.3,264.2L395.6,264.0L396.9,264.2L398.2,264.2L399.5,263.5L400.8,262.9L402.1,263.3L403.4,262.8L404.7,262.5L406.0,262.5L407.3,261.6L408.6,260.9L409.9,260.9L411.2,260.7L412.5,259.6L413.8,260.8L415.1,260.7L416.4,260.9L417.7,260.8L419.0,260.2L420.3,260.2L421.6,259.6L422.9,260.3L424.2,259.3L425.5,259.1L426.8,259.2L428.1,259.0L429.4,259.1L430.7,258.7L432.0,258.6L433.3,258.8L434.6,258.7L435.9,259.0L437.2,258.4L438.5,259.5L439.8,259.0L441.1,258.1L442.4,258.2L443.7,258.2L445.0,258.2L446.3,257.7L447.6,258.7L448.9,258.9L449.6,258.1" stroke="#ff7f00" stroke-width="2"/>
<path d="M60.5,549.2L149.3,549.2L149.3,552.4L151.0,552.4L151.0,549.2L1209.9,549.2L1209.9,552.1L1291.6,552.1L1291.6,549.1L1293.8,549.1L1293.8,552.1L1815.0,552.1" stroke="#00d2d5" stroke-linejoin="miter"/>
<path d="M60.5,455.3L79.4,455.3L79.4,451.8L80.6,451.8L80.6,455.3L107.5,455.3L107.5,461.3L109.0,461.3L109.0,455.3L113.3,455.3L113.3,461.3L116.6,461.3L116.6,455.3L131.0,455.3L133.0,420.0L135.2,381.0L137.0,420.0L139.0,455.0L141.0,472.0L143.0,410.0L145.0,357.7L147.5,351.0L149.8,349.0L151.5,362.0L154.0,410.0L156.6,447.0L158.5,446.0L160.9,441.0L163.0,400.0L165.0,350.0L166.9,331.5L169.0,370.0L172.1,423.7L176.9,422.7L184.8,424.7L187.0,385.0L189.0,340.0L190.6,319.8L192.5,360.0L195.4,414.0L201.3,418.8L212.9,421.7L215.0,380.0L216.8,338.0L218.2,319.8L220.0,352.0L223.6,408.0L230.4,414.0L238.0,416.5L245.9,418.8L247.5,425.5L248.0,425.5L248.0,416.5L248.5,416.5L248.5,401.5L249.0,401.5L249.0,386.5L249.5,386.5L249.5,377.5L250.0,377.5L250.0,374.5L251.0,374.5L251.0,371.5L252.0,371.5L252.0,368.5L252.5,368.5L252.5,365.5L253.5,365.5L253.5,362.5L256.5,362.5L256.5,359.5L259.0,359.5L259.0,356.5L261.5,356.5L261.5,353.5L264.5,353.5L264.5,350.5L267.0,350.5L267.0,347.5L269.0,347.5L269.0,344.5L271.5,344.5L271.5,341.5L273.5,341.5L273.5,338.5L275.5,338.5L275.5,335.5L278.0,335.5L278.0,332.5L280.0,332.5L280.0,329.5L282.0,329.5L282.0,326.5L284.0,326.5L284.0,323.5L286.0,323.5L286.0,320.5L288.0,320.5L288.0,317.5L290.0,317.5L290.0,314.5L292.0,314.5L292.0,311.5L294.0,311.5L294.0,308.5L296.5,308.5L296.5,305.5L299.0,305.5L299.0,302.5L301.5,302.5L301.5,299.5L304.0,299.5L304.0,296.5L307.0,296.5L307.0,293.5L310.0,293.5L310.0,290.5L313.0,290.5L313.0,287.5L316.0,287.5L316.0,284.5L319.0,284.5L319.0,281.5L322.5,281.5L322.5,278.5L326.5,278.5L326.5,275.5L330.0,275.5L330.0,272.5L334.5,272.5L334.5,269.5L339.5,269.5L339.5,266.5L344.5,266.5L344.5,263.5L347.5,263.5L347.5,260.5L350.0,260.5L350.0,257.5L353.0,257.5L353.0,254.5L355.5,254.5L355.5,251.5L359.0,251.5L359.0,248.5L366.5,248.5L366.5,245.5L373.5,245.5L373.5,242.5L379.5,242.5L379.5,239.5L385.0,239.5L385.0,236.5L389.5,236.5L389.5,233.5L393.5,233.5L393.5,230.5L398.0,230.5L398.0,227.5L406.0,227.5L406.0,224.5L412.5,224.5L412.5,221.5L418.5,221.5L418.5,218.5L425.5,218.5L425.5,215.5L435.5,215.5L435.5,212.5L440.0,212.5L440.0,209.5L443.5,209.5L443.5,206.5L450.5,206.5L450.5,209.5L451.0,209.5L451.0,221.5L451.5,221.5L451.5,236.5L452.0,236.5L452.0,248.5L452.5,248.5L452.5,260.5L453.0,260.5L453.0,266.5L453.5,266.5L453.5,269.5L454.0,269.5L454.0,272.5L454.5,272.5L454.5,275.5L455.0,275.5L455.0,278.5L456.0,278.5L456.0,269.5L456.5,269.5L456.5,251.5L457.0,251.5L457.0,236.5L457.5,236.5L457.5,227.5L458.0,227.5L458.0,221.5L458.5,221.5L458.5,218.5L459.0,218.5L459.0,215.5L459.5,215.5L459.5,212.5L461.0,212.5L461.0,209.5L465.5,209.5L465.5,206.5L473.0,206.5L473.0,203.5L482.5,203.5L482.5,212.5L483.0,212.5L483.0,221.5L483.5,221.5L483.5,230.5L484.0,230.5L484.0,242.5L484.5,242.5L484.5,251.5L485.0,251.5L485.0,260.5L485.5,260.5L485.5,266.5L486.0,266.5L486.0,269.5L487.0,269.5L487.0,272.5L487.5,272.5L487.5,275.5L488.5,275.5L488.5,278.5L489.5,278.5L489.5,269.5L490.0,269.5L490.0,251.5L490.5,251.5L490.5,239.5L491.0,239.5L491.0,230.5L491.5,230.5L491.5,224.5L492.0,224.5L492.0,218.5L492.5,218.5L492.5,215.5L493.5,215.5L493.5,212.5L495.5,212.5L495.5,209.5L501.5,209.5L501.5,206.5L512.0,206.5L512.0,215.5L512.5,215.5L512.5,227.5L513.0,227.5L513.0,236.5L513.5,236.5L513.5,248.5L514.0,248.5L514.0,257.5L514.5,257.5L514.5,266.5L515.0,266.5L515.0,272.5L516.0,272.5L516.0,275.5L517.5,275.5L517.5,278.5L518.5,278.5L518.5,281.5L520.0,281.5L520.0,284.5L521.0,284.5L521.0,269.5L521.5,269.5L521.5,248.5L522.0,248.5L522.0,239.5L522.5,239.5L522.5,230.5L523.0,230.5L523.0,227.5L523.5,227.5L523.5,221.5L524.0,221.5L524.0,218.5L525.0,218.5L525.0,215.5L527.0,215.5L527.0,212.5L531.0,212.5L531.0,209.5L536.5,209.5L536.5,218.5L537.0,218.5L537.0,227.5L537.5,227.5L537.5,239.5L538.0,239.5L538.0,251.5L538.5,251.5L538.5,260.5L539.0,260.5L539.0,269.5L539.5,269.5L539.5,275.5L540.5,275.5L540.5,278.5L541.5,278.5L541.5,281.5L542.5,281.5L542.5,284.5L543.5,284.5L543.5,287.5L545.0,287.5L545.0,275.5L545.5,275.5L545.5,263.5L546.0,263.5L546.0,248.5L546.5,248.5L546.5,242.5L547.0,242.5L547.0,236.5L547.5,236.5L547.5,230.5L548.0,230.5L548.0,227.5L548.5,227.5L548.5,224.5L549.0,224.5L549.0,218.5L554.0,218.5L554.0,221.5L555.5,221.5L555.5,224.5L557.5,224.5L557.5,227.5L560.0,227.5L560.0,230.5L566.5,230.5L566.5,227.5L571.0,227.5L571.0,224.5L571.5,224.5L571.5,221.5L572.5,221.5L572.5,218.5L574.0,218.5L574.0,215.5L575.5,215.5L575.5,218.5L576.0,218.5L576.0,227.5L576.5,227.5L576.5,236.5L577.0,236.5L577.0,248.5L577.5,248.5L577.5,257.5L578.0,257.5L578.0,266.5L578.5,266.5L578.5,275.5L579.0,275.5L579.0,278.5L580.0,278.5L580.0,281.5L581.5,281.5L581.5,284.5L582.5,284.5L582.5,287.5L585.0,287.5L585.0,278.5L585.5,278.5L585.5,257.5L586.0,257.5L586.0,248.5L586.5,248.5L586.5,239.5L587.0,239.5L587.0,233.5L587.5,233.5L587.5,230.5L588.0,230.5L588.0,227.5L588.5,227.5L588.5,224.5L589.5,224.5L589.5,221.5L591.5,221.5L591.5,218.5L595.0,218.5L595.0,215.5L598.5,215.5L598.5,218.5L599.0,218.5L599.0,227.5L599.5,227.5L599.5,236.5L600.0,236.5L600.0,248.5L600.5,248.5L600.5,257.5L601.0,257.5L601.0,269.5L601.5,269.5L601.5,275.5L602.0,275.5L602.0,281.5L603.0,281.5L603.0,284.5L604.5,284.5L604.5,287.5L605.5,287.5L605.5,290.5L608.0,290.5L608.0,275.5L608.5,275.5L608.5,257.5L609.0,257.5L609.0,248.5L609.5,248.5L609.5,239.5L610.0,239.5L610.0,236.5L610.5,236.5L610.5,233.5L611.0,233.5L611.0,230.5L611.5,230.5L611.5,227.5L613.0,227.5L613.0,224.5L616.0,224.5L616.0,221.5L623.0,221.5L623.0,230.5L623.5,230.5L623.5,239.5L624.0,239.5L624.0,251.5L624.5,251.5L624.5,260.5L625.0,260.5L625.0,269.5L625.5,269.5L625.5,278.5L626.0,278.5L626.0,284.5L627.0,284.5L627.0,287.5L628.5,287.5L628.5,290.5L630.0,290.5L630.0,293.5L631.5,293.5L631.5,296.5L632.5,296.5L632.5,278.5L633.0,278.5L633.0,263.5L633.5,263.5L633.5,251.5L634.0,251.5L634.0,245.5L634.5,245.5L634.5,239.5L635.0,239.5L635.0,236.5L635.5,236.5L635.5,233.5L636.0,233.5L636.0,230.5L637.5,230.5L637.5,227.5L640.5,227.5L640.5,224.5L647.5,224.5L647.5,227.5L648.0,227.5L648.0,236.5L648.5,236.5L648.5,245.5L649.0,245.5L649.0,257.5L649.5,257.5L649.5,266.5L650.0,266.5L650.0,278.5L650.5,278.5L650.5,284.5L651.0,284.5L651.0,287.5L652.0,287.5L652.0,290.5L654.0,290.5L654.0,293.5L656.0,293.5L656.0,296.5L658.0,296.5L658.0,299.5L659.0,299.5L659.0,290.5L659.5,290.5L659.5,272.5L660.0,272.5L660.0,260.5L660.5,260.5L660.5,248.5L661.0,248.5L661.0,245.5L661.5,245.5L661.5,239.5L662.0,239.5L662.0,236.5L662.5,236.5L662.5,233.5L663.5,233.5L663.5,230.5L665.0,230.5L665.0,227.5L670.0,227.5L670.0,233.5L670.5,233.5L670.5,242.5L671.0,242.5L671.0,251.5L671.5,251.5L671.5,263.5L672.0,263.5L672.0,272.5L672.5,272.5L672.5,281.5L673.0,281.5L673.0,290.5L673.5,290.5L673.5,293.5L675.0,293.5L675.0,296.5L676.5,296.5L676.5,299.5L678.0,299.5L678.0,302.5L680.0,302.5L680.0,296.5L680.5,296.5L680.5,275.5L681.0,275.5L681.0,263.5L681.5,263.5L681.5,254.5L682.0,254.5L682.0,248.5L682.5,248.5L682.5,242.5L683.0,242.5L683.0,239.5L684.0,239.5L684.0,236.5L685.0,236.5L685.0,233.5L687.0,233.5L687.0,230.5L693.5,230.5L693.5,236.5L694.0,236.5L694.0,248.5L694.5,248.5L694.5,257.5L695.0,257.5L695.0,269.5L695.5,269.5L695.5,278.5L696.0,278.5L696.0,287.5L696.5,287.5L696.5,293.5L697.5,293.5L697.5,296.5L699.0,296.5L699.0,299.5L700.0,299.5L700.0,302.5L701.5,302.5L701.5,305.5L703.0,305.5L703.0,293.5L703.5,293.5L703.5,275.5L704.0,275.5L704.0,263.5L704.5,263.5L704.5,254.5L705.0,254.5L705.0,248.5L705.5,248.5L705.5,242.5L706.0,242.5L706.0,239.5L707.0,239.5L707.0,236.5L708.0,236.5L708.0,233.5L710.0,233.5L710.0,230.5L716.5,230.5L716.5,239.5L717.0,239.5L717.0,248.5L717.5,248.5L717.5,260.5L718.0,260.5L718.0,269.5L718.5,269.5L718.5,281.5L719.0,281.5L719.0,287.5L719.5,287.5L719.5,293.5L720.5,293.5L720.5,296.5L721.5,296.5L721.5,299.5L723.0,299.5L723.0,302.5L724.0,302.5L724.0,305.5L725.5,305.5L725.5,296.5L726.0,296.5L726.0,275.5L726.5,275.5L726.5,266.5L727.0,266.5L727.0,254.5L727.5,254.5L727.5,251.5L728.0,251.5L728.0,245.5L728.5,245.5L728.5,242.5L729.5,242.5L729.5,239.5L730.5,239.5L730.5,236.5L732.5,236.5L732.5,233.5L739.5,233.5L739.5,239.5L740.0,239.5L740.0,248.5L740.5,248.5L740.5,260.5L741.0,260.5L741.0,269.5L741.5,269.5L741.5,278.5L742.0,278.5L742.0,287.5L742.5,287.5L742.5,296.5L744.0,296.5L744.0,299.5L745.0,299.5L745.0,302.5L746.5,302.5L746.5,305.5L748.5,305.5L748.5,287.5L749.0,287.5L749.0,272.5L749.5,272.5L749.5,260.5L750.0,260.5L750.0,254.5L750.5,254.5L750.5,248.5L751.0,248.5L751.0,245.5L751.5,245.5L751.5,242.5L752.5,242.5L752.5,239.5L753.5,239.5L753.5,236.5L756.5,236.5L756.5,233.5L762.5,233.5L762.5,242.5L763.0,242.5L763.0,251.5L763.5,251.5L763.5,263.5L764.0,263.5L764.0,272.5L764.5,272.5L764.5,284.5L765.0,284.5L765.0,290.5L765.5,290.5L765.5,296.5L767.0,296.5L767.0,299.5L768.0,299.5L768.0,302.5L769.5,302.5L769.5,305.5L772.0,305.5L772.0,287.5L772.5,287.5L772.5,272.5L773.0,272.5L773.0,260.5L773.5,260.5L773.5,254.5L774.0,254.5L774.0,248.5L774.5,248.5L774.5,245.5L775.0,245.5L775.0,242.5L775.5,242.5L775.5,239.5L776.5,239.5L776.5,236.5L778.0,236.5L778.0,233.5L781.5,233.5L781.5,230.5L785.5,230.5L785.5,236.5L786.0,236.5L786.0,245.5L786.5,245.5L786.5,254.5L787.0,254.5L787.0,266.5L787.5,266.5L787.5,275.5L788.0,275.5L788.0,284.5L788.5,284.5L788.5,293.5L789.0,293.5L789.0,296.5L790.0,296.5L790.0,299.5L791.0,299.5L791.0,302.5L792.5,302.5L792.5,305.5L794.5,305.5L794.5,302.5L795.0,302.5L795.0,281.5L795.5,281.5L795.5,269.5L796.0,269.5L796.0,257.5L796.5,257.5L796.5,251.5L797.0,251.5L797.0,248.5L797.5,248.5L797.5,245.5L798.0,245.5L798.0,242.5L798.5,242.5L798.5,239.5L799.5,239.5L799.5,236.5L802.0,236.5L802.0,233.5L806.0,233.5L806.0,230.5L808.5,230.5L808.5,233.5L809.0,233.5L809.0,239.5L809.5,239.5L809.5,248.5L810.0,248.5L810.0,260.5L810.5,260.5L810.5,269.5L811.0,269.5L811.0,278.5L811.5,278.5L811.5,287.5L812.0,287.5L812.0,293.5L813.0,293.5L813.0,296.5L814.0,296.5L814.0,299.5L815.5,299.5L815.5,302.5L817.5,302.5L817.5,290.5L818.0,290.5L818.0,272.5L818.5,272.5L818.5,263.5L819.0,263.5L819.0,254.5L819.5,254.5L819.5,248.5L820.0,248.5L820.0,245.5L820.5,245.5L820.5,242.5L821.0,242.5L821.0,239.5L821.5,239.5L821.5,236.5L823.0,236.5L823.0,233.5L826.0,233.5L826.0,230.5L831.5,230.5L831.5,239.5L832.0,239.5L832.0,248.5L832.5,248.5L832.5,257.5L833.0,257.5L833.0,269.5L833.5,269.5L833.5,278.5L834.0,278.5L834.0,287.5L834.5,287.5L834.5,293.5L835.5,293.5L835.5,296.5L837.0,296.5L837.0,299.5L838.5,299.5L838.5,302.5L840.5,302.5L840.5,299.5L841.0,299.5L841.0,281.5L841.5,281.5L841.5,266.5L842.0,266.5L842.0,257.5L842.5,257.5L842.5,251.5L843.0,251.5L843.0,245.5L843.5,245.5L843.5,242.5L844.0,242.5L844.0,239.5L845.0,239.5L845.0,236.5L847.0,236.5L847.0,233.5L850.5,233.5L850.5,230.5L855.5,230.5L855.5,239.5L856.0,239.5L856.0,248.5L856.5,248.5L856.5,260.5L857.0,260.5L857.0,272.5L857.5,272.5L857.5,281.5L858.0,281.5L858.0,290.5L858.5,290.5L858.5,296.5L860.0,296.5L860.0,299.5L861.0,299.5L861.0,302.5L862.0,302.5L862.0,305.5L864.0,305.5L864.0,302.5L864.5,302.5L864.5,281.5L865.0,281.5L865.0,266.5L865.5,266.5L865.5,257.5L866.0,257.5L866.0,251.5L866.5,251.5L866.5,245.5L867.0,245.5L867.0,242.5L867.5,242.5L867.5,239.5L868.0,239.5L868.0,236.5L869.5,236.5L869.5,233.5L872.0,233.5L872.0,230.5L878.0,230.5L878.0,239.5L878.5,239.5L878.5,248.5L879.0,248.5L879.0,260.5L879.5,260.5L879.5,269.5L880.0,269.5L880.0,281.5L880.5,281.5L880.5,290.5L881.0,290.5L881.0,296.5L882.5,296.5L882.5,299.5L884.0,299.5L884.0,302.5L885.0,302.5L885.0,305.5L886.5,305.5L886.5,308.5L887.5,308.5L887.5,302.5L888.0,302.5L888.0,284.5L888.5,284.5L888.5,269.5L889.0,269.5L889.0,257.5L889.5,257.5L889.5,251.5L890.0,251.5L890.0,245.5L890.5,245.5L890.5,242.5L891.0,242.5L891.0,239.5L891.5,239.5L891.5,236.5L892.5,236.5L892.5,233.5L894.5,233.5L894.5,230.5L899.0,230.5L899.0,236.5L899.5,236.5L899.5,245.5L900.0,245.5L900.0,257.5L900.5,257.5L900.5,269.5L901.0,269.5L901.0,278.5L901.5,278.5L901.5,290.5L902.0,290.5L902.0,296.5L902.5,296.5L902.5,299.5L903.5,299.5L903.5,302.5L905.5,302.5L905.5,305.5L907.0,305.5L907.0,308.5L908.5,308.5L908.5,311.5L910.0,311.5L910.0,296.5L910.5,296.5L910.5,278.5L911.0,278.5L911.0,266.5L911.5,266.5L911.5,257.5L912.0,257.5L912.0,251.5L912.5,251.5L912.5,248.5L913.0,248.5L913.0,245.5L913.5,245.5L913.5,242.5L914.5,242.5L914.5,239.5L916.0,239.5L916.0,236.5L918.0,236.5L918.0,233.5L921.0,233.5L921.0,245.5L921.5,245.5L921.5,254.5L922.0,254.5L922.0,266.5L922.5,266.5L922.5,278.5L923.0,278.5L923.0,287.5L923.5,287.5L923.5,296.5L924.0,296.5L924.0,302.5L925.0,302.5L925.0,305.5L927.0,305.5L927.0,308.5L928.5,308.5L928.5,311.5L930.0,311.5L930.0,314.5L931.5,314.5L931.5,311.5L932.0,311.5L932.0,293.5L932.5,293.5L932.5,278.5L933.0,278.5L933.0,269.5L933.5,269.5L933.5,263.5L934.0,263.5L934.0,257.5L934.5,257.5L934.5,254.5L935.0,254.5L935.0,251.5L935.5,251.5L935.5,248.5L937.0,248.5L937.0,245.5L939.0,245.5L939.0,242.5L944.5,242.5L944.5,245.5L945.0,245.5L945.0,254.5L945.5,254.5L945.5,263.5L946.0,263.5L946.0,275.5L946.5,275.5L946.5,284.5L947.0,284.5L947.0,293.5L947.5,293.5L947.5,302.5L948.0,302.5L948.0,305.5L949.0,305.5L949.0,308.5L950.0,308.5L950.0,311.5L951.5,311.5L951.5,314.5L953.0,314.5L953.0,317.5L954.0,317.5L954.0,314.5L954.5,314.5L954.5,296.5L955.0,296.5L955.0,281.5L955.5,281.5L955.5,269.5L956.0,269.5L956.0,263.5L956.5,263.5L956.5,257.5L957.0,257.5L957.0,254.5L957.5,254.5L957.5,251.5L958.0,251.5L958.0,248.5L959.0,248.5L959.0,245.5L961.0,245.5L961.0,242.5L964.0,242.5L964.0,239.5L967.0,239.5L967.0,242.5L967.5,242.5L967.5,251.5L968.0,251.5L968.0,263.5L968.5,263.5L968.5,272.5L969.0,272.5L969.0,284.5L969.5,284.5L969.5,293.5L970.0,293.5L970.0,302.5L970.5,302.5L970.5,305.5L971.5,305.5L971.5,308.5L972.5,308.5L972.5,311.5L974.0,311.5L974.0,314.5L975.0,314.5L975.0,317.5L976.5,317.5L976.5,302.5L977.0,302.5L977.0,284.5L977.5,284.5L977.5,275.5L978.0,275.5L978.0,266.5L978.5,266.5L978.5,260.5L979.0,260.5L979.0,254.5L979.5,254.5L979.5,251.5L980.5,251.5L980.5,248.5L981.5,248.5L981.5,245.5L983.0,245.5L983.0,242.5L986.0,242.5L986.0,239.5L989.5,239.5L989.5,248.5L990.0,248.5L990.0,257.5L990.5,257.5L990.5,266.5L991.0,266.5L991.0,278.5L991.5,278.5L991.5,287.5L992.0,287.5L992.0,296.5L992.5,296.5L992.5,302.5L993.0,302.5L993.0,305.5L994.5,305.5L994.5,308.5L996.0,308.5L996.0,311.5L997.0,311.5L997.0,314.5L999.0,314.5L999.0,302.5L999.5,302.5L999.5,284.5L1000.0,284.5L1000.0,272.5L1000.5,272.5L1000.5,263.5L1001.0,263.5L1001.0,257.5L1001.5,257.5L1001.5,254.5L1002.0,254.5L1002.0,248.5L1003.0,248.5L1003.0,245.5L1004.0,245.5L1004.0,242.5L1005.5,242.5L1005.5,239.5L1008.5,239.5L1008.5,236.5L1011.5,236.5L1011.5,242.5L1012.0,242.5L1012.0,251.5L1012.5,251.5L1012.5,260.5L1013.0,260.5L1013.0,272.5L1013.5,272.5L1013.5,281.5L1014.0,281.5L1014.0,293.5L1014.5,293.5L1014.5,299.5L1015.0,299.5L1015.0,302.5L1015.5,302.5L1015.5,305.5L1017.0,305.5L1017.0,308.5L1018.5,308.5L1018.5,311.5L1019.5,311.5L1019.5,314.5L1021.5,314.5L1021.5,302.5L1022.0,302.5L1022.0,284.5L1022.5,284.5L1022.5,272.5L1023.0,272.5L1023.0,263.5L1023.5,263.5L1023.5,257.5L1024.0,257.5L1024.0,254.5L1024.5,254.5L1024.5,248.5L1025.5,248.5L1025.5,245.5L1026.5,245.5L1026.5,242.5L1028.0,242.5L1028.0,239.5L1030.5,239.5L1030.5,236.5L1033.5,236.5L1033.5,245.5L1034.0,245.5L1034.0,254.5L1034.5,254.5L1034.5,266.5L1035.0,266.5L1035.0,275.5L1035.5,275.5L1035.5,287.5L1036.0,287.5L1036.0,296.5L1036.5,296.5L1036.5,302.5L1037.0,302.5L1037.0,305.5L1038.5,305.5L1038.5,308.5L1040.0,308.5L1040.0,311.5L1041.5,311.5L1041.5,314.5L1043.0,314.5L1043.0,308.5L1043.5,308.5L1043.5,287.5L1044.0,287.5L1044.0,275.5L1044.5,275.5L1044.5,266.5L1045.0,266.5L1045.0,260.5L1045.5,260.5L1045.5,254.5L1046.0,254.5L1046.0,251.5L1046.5,251.5L1046.5,248.5L1047.0,248.5L1047.0,245.5L1048.0,245.5L1048.0,242.5L1050.0,242.5L1050.0,239.5L1053.0,239.5L1053.0,236.5L1055.5,236.5L1055.5,239.5L1056.0,239.5L1056.0,248.5L1056.5,248.5L1056.5,257.5L1057.0,257.5L1057.0,269.5L1057.5,269.5L1057.5,281.5L1058.0,281.5L1058.0,290.5L1058.5,290.5L1058.5,299.5L1059.0,299.5L1059.0,305.5L1060.5,305.5L1060.5,308.5L1062.0,308.5L1062.0,311.5L1063.0,311.5L1063.0,314.5L1065.5,314.5L1065.5,308.5L1066.0,308.5L1066.0,290.5L1066.5,290.5L1066.5,275.5L1067.0,275.5L1067.0,266.5L1067.5,266.5L1067.5,260.5L1068.0,260.5L1068.0,254.5L1068.5,254.5L1068.5,251.5L1069.0,251.5L1069.0,248.5L1069.5,248.5L1069.5,245.5L1070.5,245.5L1070.5,242.5L1072.0,242.5L1072.0,239.5L1074.5,239.5L1074.5,236.5L1077.5,236.5L1077.5,239.5L1078.0,239.5L1078.0,251.5L1078.5,251.5L1078.5,260.5L1079.0,260.5L1079.0,272.5L1079.5,272.5L1079.5,284.5L1080.0,284.5L1080.0,293.5L1080.5,293.5L1080.5,299.5L1081.0,299.5L1081.0,305.5L1082.5,305.5L1082.5,308.5L1083.5,308.5L1083.5,311.5L1085.0,311.5L1085.0,314.5L1086.5,314.5L1086.5,317.5L1087.5,317.5L1087.5,308.5L1088.0,308.5L1088.0,290.5L1088.5,290.5L1088.5,275.5L1089.0,275.5L1089.0,263.5L1089.5,263.5L1089.5,257.5L1090.0,257.5L1090.0,251.5L1090.5,251.5L1090.5,248.5L1091.0,248.5L1091.0,245.5L1091.5,245.5L1091.5,242.5L1092.5,242.5L1092.5,239.5L1093.5,239.5L1093.5,236.5L1097.5,236.5L1097.5,233.5L1098.0,233.5L1098.0,242.5L1098.5,242.5L1098.5,254.5L1099.0,254.5L1099.0,266.5L1099.5,266.5L1099.5,278.5L1100.0,278.5L1100.0,287.5L1100.5,287.5L1100.5,299.5L1101.0,299.5L1101.0,308.5L1101.5,308.5L1101.5,311.5L1102.0,311.5L1102.0,314.5L1102.5,314.5L1102.5,317.5L1108.5,317.5L1108.5,308.5L1109.0,308.5L1109.0,287.5L1109.5,287.5L1109.5,275.5L1110.0,275.5L1110.0,266.5L1110.5,266.5L1110.5,257.5L1111.0,257.5L1111.0,254.5L1111.5,254.5L1111.5,251.5L1112.0,251.5L1112.0,248.5L1112.5,248.5L1112.5,245.5L1113.0,245.5L1113.0,242.5L1114.5,242.5L1114.5,239.5L1117.0,239.5L1117.0,236.5L1119.0,236.5L1119.0,245.5L1119.5,245.5L1119.5,257.5L1120.0,257.5L1120.0,269.5L1120.5,269.5L1120.5,278.5L1121.0,278.5L1121.0,290.5L1121.5,290.5L1121.5,302.5L1122.0,302.5L1122.0,311.5L1122.5,311.5L1122.5,314.5L1123.5,314.5L1123.5,317.5L1124.0,317.5L1124.0,320.5L1129.0,320.5L1129.0,317.5L1129.5,317.5L1129.5,296.5L1130.0,296.5L1130.0,281.5L1130.5,281.5L1130.5,269.5L1131.0,269.5L1131.0,263.5L1131.5,263.5L1131.5,257.5L1132.0,257.5L1132.0,254.5L1132.5,254.5L1132.5,251.5L1133.0,251.5L1133.0,248.5L1134.0,248.5L1134.0,245.5L1135.5,245.5L1135.5,242.5L1137.5,242.5L1137.5,239.5L1140.0,239.5L1140.0,248.5L1140.5,248.5L1140.5,257.5L1141.0,257.5L1141.0,269.5L1141.5,269.5L1141.5,278.5L1142.0,278.5L1142.0,290.5L1142.5,290.5L1142.5,299.5L1143.0,299.5L1143.0,311.5L1143.5,311.5L1143.5,314.5L1144.0,314.5L1144.0,317.5L1144.5,317.5L1144.5,320.5L1150.0,320.5L1150.0,308.5L1150.5,308.5L1150.5,287.5L1151.0,287.5L1151.0,275.5L1151.5,275.5L1151.5,266.5L1152.0,266.5L1152.0,260.5L1152.5,260.5L1152.5,254.5L1153.0,254.5L1153.0,251.5L1153.5,251.5L1153.5,248.5L1154.0,248.5L1154.0,245.5L1155.0,245.5L1155.0,242.5L1156.5,242.5L1156.5,239.5L1161.0,239.5L1161.0,245.5L1161.5,245.5L1161.5,254.5L1162.0,254.5L1162.0,266.5L1162.5,266.5L1162.5,278.5L1163.0,278.5L1163.0,290.5L1163.5,290.5L1163.5,302.5L1164.0,302.5L1164.0,311.5L1164.5,311.5L1164.5,314.5L1165.0,314.5L1165.0,317.5L1165.5,317.5L1165.5,320.5L1171.0,320.5L1171.0,308.5L1171.5,308.5L1171.5,290.5L1172.0,290.5L1172.0,278.5L1172.5,278.5L1172.5,269.5L1173.0,269.5L1173.0,263.5L1173.5,263.5L1173.5,257.5L1174.0,257.5L1174.0,254.5L1174.5,254.5L1174.5,251.5L1175.0,251.5L1175.0,248.5L1176.0,248.5L1176.0,245.5L1177.5,245.5L1177.5,242.5L1180.0,242.5L1180.0,239.5L1182.0,239.5L1182.0,242.5L1182.5,242.5L1182.5,251.5L1183.0,251.5L1183.0,263.5L1183.5,263.5L1183.5,275.5L1184.0,275.5L1184.0,284.5L1184.5,284.5L1184.5,296.5L1185.0,296.5L1185.0,305.5L1185.5,305.5L1185.5,314.5L1186.0,314.5L1186.0,317.5L1187.0,317.5L1187.0,320.5L1187.5,320.5L1187.5,323.5L1192.5,323.5L1192.5,308.5L1193.0,308.5L1193.0,290.5L1193.5,290.5L1193.5,278.5L1194.0,278.5L1194.0,269.5L1194.5,269.5L1194.5,263.5L1195.0,263.5L1195.0,257.5L1195.5,257.5L1195.5,254.5L1196.0,254.5L1196.0,251.5L1196.5,251.5L1196.5,248.5L1197.5,248.5L1197.5,245.5L1199.0,245.5L1199.0,242.5L1201.5,242.5L1201.5,239.5L1203.5,239.5L1203.5,242.5L1204.0,242.5L1204.0,251.5L1204.5,251.5L1204.5,263.5L1205.0,263.5L1205.0,272.5L1205.5,272.5L1205.5,284.5L1206.0,284.5L1206.0,296.5L1206.5,296.5L1206.5,305.5L1207.0,305.5L1207.0,311.5L1207.5,311.5L1207.5,314.5L1208.0,314.5L1208.0,317.5L1208.5,317.5L1208.5,320.5L1213.5,320.5L1213.5,311.5L1214.0,311.5L1214.0,290.5L1214.5,290.5L1214.5,278.5L1215.0,278.5L1215.0,269.5L1215.5,269.5L1215.5,260.5L1216.0,260.5L1216.0,257.5L1216.5,257.5L1216.5,251.5L1217.0,251.5L1217.0,248.5L1217.5,248.5L1217.5,245.5L1218.5,245.5L1218.5,242.5L1220.0,242.5L1220.0,239.5L1223.0,239.5L1223.0,236.5L1225.0,236.5L1225.0,242.5L1225.5,242.5L1225.5,251.5L1226.0,251.5L1226.0,260.5L1226.5,260.5L1226.5,272.5L1227.0,272.5L1227.0,284.5L1227.5,284.5L1227.5,296.5L1228.0,296.5L1228.0,305.5L1228.5,305.5L1228.5,311.5L1229.0,311.5L1229.0,314.5L1229.5,314.5L1229.5,317.5L1230.0,317.5L1230.0,320.5L1235.0,320.5L1235.0,302.5L1235.5,302.5L1235.5,284.5L1236.0,284.5L1236.0,275.5L1236.5,275.5L1236.5,266.5L1237.0,266.5L1237.0,260.5L1237.5,260.5L1237.5,257.5L1238.0,257.5L1238.0,251.5L1239.0,251.5L1239.0,248.5L1239.5,248.5L1239.5,245.5L1241.0,245.5L1241.0,242.5L1244.0,242.5L1244.0,239.5L1246.0,239.5L1246.0,251.5L1246.5,251.5L1246.5,260.5L1247.0,260.5L1247.0,272.5L1247.5,272.5L1247.5,284.5L1248.0,284.5L1248.0,296.5L1248.5,296.5L1248.5,308.5L1249.0,308.5L1249.0,317.5L1249.5,317.5L1249.5,320.5L1250.0,320.5L1250.0,323.5L1250.5,323.5L1250.5,326.5L1255.0,326.5L1255.0,323.5L1255.5,323.5L1255.5,302.5L1256.0,302.5L1256.0,290.5L1256.5,290.5L1256.5,278.5L1257.0,278.5L1257.0,269.5L1257.5,269.5L1257.5,263.5L1258.0,263.5L1258.0,260.5L1258.5,260.5L1258.5,257.5L1259.0,257.5L1259.0,254.5L1260.0,254.5L1260.0,251.5L1261.5,251.5L1261.5,248.5L1264.0,248.5L1264.0,245.5L1268.5,245.5L1268.5,251.5L1269.0,251.5L1269.0,260.5L1269.5,260.5L1269.5,272.5L1270.0,272.5L1270.0,284.5L1270.5,284.5L1270.5,296.5L1271.0,296.5L1271.0,305.5L1271.5,305.5L1271.5,314.5L1272.0,314.5L1272.0,317.5L1272.5,317.5L1272.5,320.5L1273.0,320.5L1273.0,323.5L1273.5,323.5L1273.5,326.5L1277.0,326.5L1277.0,314.5L1277.5,314.5L1277.5,293.5L1278.0,293.5L1278.0,281.5L1278.5,281.5L1278.5,272.5L1279.0,272.5L1279.0,263.5L1279.5,263.5L1279.5,260.5L1280.0,260.5L1280.0,254.5L1280.5,254.5L1280.5,251.5L1281.5,251.5L1281.5,248.5L1282.5,248.5L1282.5,245.5L1284.0,245.5L1284.0,242.5L1286.5,242.5L1286.5,239.5L1289.5,239.5L1289.5,248.5L1290.0,248.5L1290.0,260.5L1290.5,260.5L1290.5,272.5L1291.0,272.5L1291.0,281.5L1291.5,281.5L1291.5,293.5L1292.0,293.5L1292.0,302.5L1292.5,302.5L1292.5,311.5L1293.0,311.5L1293.0,314.5L1293.5,314.5L1293.5,317.5L1294.5,317.5L1294.5,320.5L1299.0,320.5L1299.0,308.5L1299.5,308.5L1299.5,290.5L1300.0,290.5L1300.0,278.5L1300.5,278.5L1300.5,269.5L1301.0,269.5L1301.0,263.5L1301.5,263.5L1301.5,257.5L1302.0,257.5L1302.0,254.5L1302.5,254.5L1302.5,251.5L1303.0,251.5L1303.0,248.5L1304.0,248.5L1304.0,245.5L1305.5,245.5L1305.5,242.5L1308.0,242.5L1308.0,239.5L1310.0,239.5L1310.0,251.5L1310.5,251.5L1310.5,260.5L1311.0,260.5L1311.0,272.5L1311.5,272.5L1311.5,284.5L1312.0,284.5L1312.0,293.5L1312.5,293.5L1312.5,302.5L1313.0,302.5L1313.0,311.5L1313.5,311.5L1313.5,314.5L1314.0,314.5L1314.0,317.5L1315.0,317.5L1315.0,320.5L1320.0,320.5L1320.0,317.5L1320.5,317.5L1320.5,299.5L1321.0,299.5L1321.0,284.5L1321.5,284.5L1321.5,272.5L1322.0,272.5L1322.0,266.5L1322.5,266.5L1322.5,260.5L1323.0,260.5L1323.0,254.5L1323.5,254.5L1323.5,251.5L1324.5,251.5L1324.5,248.5L1325.0,248.5L1325.0,245.5L1326.5,245.5L1326.5,242.5L1329.5,242.5L1329.5,239.5L1331.5,239.5L1331.5,248.5L1332.0,248.5L1332.0,257.5L1332.5,257.5L1332.5,269.5L1333.0,269.5L1333.0,281.5L1333.5,281.5L1333.5,290.5L1334.0,290.5L1334.0,302.5L1334.5,302.5L1334.5,311.5L1335.0,311.5L1335.0,314.5L1336.0,314.5L1336.0,317.5L1336.5,317.5L1336.5,320.5L1341.0,320.5L1341.0,317.5L1341.5,317.5L1341.5,299.5L1342.0,299.5L1342.0,284.5L1342.5,284.5L1342.5,272.5L1343.0,272.5L1343.0,266.5L1343.5,266.5L1343.5,260.5L1344.0,260.5L1344.0,257.5L1344.5,257.5L1344.5,254.5L1345.0,254.5L1345.0,251.5L1345.5,251.5L1345.5,248.5L1346.5,248.5L1346.5,245.5L1348.0,245.5L1348.0,242.5L1350.5,242.5L1350.5,239.5L1352.5,239.5L1352.5,242.5L1353.0,242.5L1353.0,251.5L1353.5,251.5L1353.5,260.5L1354.0,260.5L1354.0,272.5L1354.5,272.5L1354.5,284.5L1355.0,284.5L1355.0,293.5L1355.5,293.5L1355.5,302.5L1356.0,302.5L1356.0,311.5L1356.5,311.5L1356.5,314.5L1357.0,314.5L1357.0,317.5L1357.5,317.5L1357.5,320.5L1362.5,320.5L1362.5,308.5L1363.0,308.5L1363.0,290.5L1363.5,290.5L1363.5,281.5L1364.0,281.5L1364.0,269.5L1364.5,269.5L1364.5,263.5L1365.0,263.5L1365.0,260.5L1365.5,260.5L1365.5,254.5L1366.0,254.5L1366.0,251.5L1366.5,251.5L1366.5,248.5L1367.5,248.5L1367.5,245.5L1369.0,245.5L1369.0,242.5L1372.0,242.5L1372.0,239.5L1373.5,239.5L1373.5,248.5L1374.0,248.5L1374.0,257.5L1374.5,257.5L1374.5,266.5L1375.0,266.5L1375.0,278.5L1375.5,278.5L1375.5,290.5L1376.0,290.5L1376.0,299.5L1376.5,299.5L1376.5,308.5L1377.0,308.5L1377.0,311.5L1377.5,311.5L1377.5,314.5L1378.0,314.5L1378.0,317.5L1378.5,317.5L1378.5,320.5L1383.0,320.5L1383.0,314.5L1383.5,314.5L1383.5,299.5L1384.0,299.5L1384.0,284.5L1384.5,284.5L1384.5,272.5L1385.0,272.5L1385.0,266.5L1385.5,266.5L1385.5,260.5L1386.0,260.5L1386.0,257.5L1386.5,257.5L1386.5,254.5L1387.0,254.5L1387.0,251.5L1387.5,251.5L1387.5,248.5L1388.5,248.5L1388.5,245.5L1390.0,245.5L1390.0,242.5L1392.0,242.5L1392.0,239.5L1394.5,239.5L1394.5,242.5L1395.0,242.5L1395.0,251.5L1395.5,251.5L1395.5,263.5L1396.0,263.5L1396.0,275.5L1396.5,275.5L1396.5,284.5L1397.0,284.5L1397.0,296.5L1397.5,296.5L1397.5,305.5L1398.0,305.5L1398.0,311.5L1398.5,311.5L1398.5,314.5L1399.0,314.5L1399.0,317.5L1399.5,317.5L1399.5,320.5L1404.0,320.5L1404.0,314.5L1404.5,314.5L1404.5,296.5L1405.0,296.5L1405.0,284.5L1405.5,284.5L1405.5,272.5L1406.0,272.5L1406.0,266.5L1406.5,266.5L1406.5,260.5L1407.0,260.5L1407.0,254.5L1407.5,254.5L1407.5,251.5L1408.0,251.5L1408.0,248.5L1408.5,248.5L1408.5,245.5L1409.5,245.5L1409.5,242.5L1411.0,242.5L1411.0,239.5L1414.5,239.5L1414.5,236.5L1415.0,236.5L1415.0,242.5L1415.5,242.5L1415.5,251.5L1416.0,251.5L1416.0,263.5L1416.5,263.5L1416.5,275.5L1417.0,275.5L1417.0,284.5L1417.5,284.5L1417.5,296.5L1418.0,296.5L1418.0,305.5L1418.5,305.5L1418.5,311.5L1419.0,311.5L1419.0,314.5L1419.5,314.5L1419.5,317.5L1420.0,317.5L1420.0,320.5L1425.0,320.5L1425.0,311.5L1425.5,311.5L1425.5,293.5L1426.0,293.5L1426.0,284.5L1426.5,284.5L1426.5,272.5L1427.0,272.5L1427.0,266.5L1427.5,266.5L1427.5,260.5L1428.0,260.5L1428.0,257.5L1428.5,257.5L1428.5,254.5L1429.0,254.5L1429.0,251.5L1429.5,251.5L1429.5,248.5L1430.5,248.5L1430.5,245.5L1431.5,245.5L1431.5,242.5L1434.5,242.5L1434.5,239.5L1436.0,239.5L1436.0,248.5L1436.5,248.5L1436.5,257.5L1437.0,257.5L1437.0,269.5L1437.5,269.5L1437.5,281.5L1438.0,281.5L1438.0,290.5L1438.5,290.5L1438.5,299.5L1439.0,299.5L1439.0,311.5L1439.5,311.5L1439.5,314.5L1440.5,314.5L1440.5,317.5L1441.0,317.5L1441.0,320.5L1446.0,320.5L1446.0,305.5L1446.5,305.5L1446.5,290.5L1447.0,290.5L1447.0,278.5L1447.5,278.5L1447.5,272.5L1448.0,272.5L1448.0,263.5L1448.5,263.5L1448.5,260.5L1449.0,260.5L1449.0,254.5L1449.5,254.5L1449.5,251.5L1450.5,251.5L1450.5,248.5L1451.0,248.5L1451.0,245.5L1452.5,245.5L1452.5,242.5L1456.0,242.5L1456.0,239.5L1456.5,239.5L1456.5,245.5L1457.0,245.5L1457.0,254.5L1457.5,254.5L1457.5,266.5L1458.0,266.5L1458.0,278.5L1458.5,278.5L1458.5,290.5L1459.0,290.5L1459.0,299.5L1459.5,299.5L1459.5,308.5L1460.0,308.5L1460.0,311.5L1460.5,311.5L1460.5,314.5L1461.0,314.5L1461.0,317.5L1461.5,317.5L1461.5,320.5L1466.5,320.5L1466.5,317.5L1467.0,317.5L1467.0,299.5L1467.5,299.5L1467.5,287.5L1468.0,287.5L1468.0,278.5L1468.5,278.5L1468.5,269.5L1469.0,269.5L1469.0,263.5L1469.5,263.5L1469.5,260.5L1470.0,260.5L1470.0,254.5L1470.5,254.5L1470.5,251.5L1471.5,251.5L1471.5,248.5L1472.0,248.5L1472.0,245.5L1473.5,245.5L1473.5,242.5L1477.0,242.5L1477.0,239.5L1477.5,239.5L1477.5,245.5L1478.0,245.5L1478.0,254.5L1478.5,254.5L1478.5,266.5L1479.0,266.5L1479.0,275.5L1479.5,275.5L1479.5,287.5L1480.0,287.5L1480.0,296.5L1480.5,296.5L1480.5,308.5L1481.0,308.5L1481.0,311.5L1481.5,311.5L1481.5,314.5L1482.0,314.5L1482.0,317.5L1482.5,317.5L1482.5,320.5L1487.5,320.5L1487.5,317.5L1488.0,317.5L1488.0,302.5L1488.5,302.5L1488.5,287.5L1489.0,287.5L1489.0,278.5L1489.5,278.5L1489.5,269.5L1490.0,269.5L1490.0,263.5L1490.5,263.5L1490.5,260.5L1491.0,260.5L1491.0,257.5L1491.5,257.5L1491.5,254.5L1492.0,254.5L1492.0,251.5L1492.5,251.5L1492.5,248.5L1493.5,248.5L1493.5,245.5L1494.5,245.5L1494.5,242.5L1498.0,242.5L1498.0,239.5L1499.0,239.5L1499.0,245.5L1499.5,245.5L1499.5,257.5L1500.0,257.5L1500.0,266.5L1500.5,266.5L1500.5,278.5L1501.0,278.5L1501.0,290.5L1501.5,290.5L1501.5,299.5L1502.0,299.5L1502.0,308.5L1502.5,308.5L1502.5,311.5L1503.0,311.5L1503.0,314.5L1503.5,314.5L1503.5,317.5L1504.0,317.5L1504.0,320.5L1508.5,320.5L1508.5,317.5L1509.0,317.5L1509.0,299.5L1509.5,299.5L1509.5,287.5L1510.0,287.5L1510.0,278.5L1510.5,278.5L1510.5,269.5L1511.0,269.5L1511.0,263.5L1511.5,263.5L1511.5,260.5L1512.0,260.5L1512.0,257.5L1512.5,257.5L1512.5,254.5L1513.0,254.5L1513.0,251.5L1513.5,251.5L1513.5,248.5L1514.5,248.5L1514.5,245.5L1515.5,245.5L1515.5,242.5L1519.0,242.5L1519.0,239.5L1519.5,239.5L1519.5,248.5L1520.0,248.5L1520.0,257.5L1520.5,257.5L1520.5,269.5L1521.0,269.5L1521.0,278.5L1521.5,278.5L1521.5,290.5L1522.0,290.5L1522.0,299.5L1522.5,299.5L1522.5,308.5L1523.0,308.5L1523.0,314.5L1524.0,314.5L1524.0,317.5L1524.5,317.5L1524.5,320.5L1529.0,320.5L1529.0,311.5L1529.5,311.5L1529.5,296.5L1530.0,296.5L1530.0,287.5L1530.5,287.5L1530.5,275.5L1531.0,275.5L1531.0,269.5L1531.5,269.5L1531.5,263.5L1532.0,263.5L1532.0,260.5L1532.5,260.5L1532.5,257.5L1533.0,257.5L1533.0,254.5L1533.5,254.5L1533.5,251.5L1534.0,251.5L1534.0,248.5L1535.0,248.5L1535.0,245.5L1536.0,245.5L1536.0,242.5L1539.5,242.5L1539.5,239.5L1540.0,239.5L1540.0,245.5L1540.5,245.5L1540.5,254.5L1541.0,254.5L1541.0,263.5L1541.5,263.5L1541.5,275.5L1542.0,275.5L1542.0,287.5L1542.5,287.5L1542.5,299.5L1543.0,299.5L1543.0,308.5L1543.5,308.5L1543.5,314.5L1544.0,314.5L1544.0,317.5L1544.5,317.5L1544.5,320.5L1545.0,320.5L1545.0,323.5L1550.0,323.5L1550.0,311.5L1550.5,311.5L1550.5,296.5L1551.0,296.5L1551.0,284.5L1551.5,284.5L1551.5,275.5L1552.0,275.5L1552.0,266.5L1552.5,266.5L1552.5,260.5L1553.0,260.5L1553.0,257.5L1553.5,257.5L1553.5,254.5L1554.0,254.5L1554.0,251.5L1554.5,251.5L1554.5,248.5L1555.0,248.5L1555.0,245.5L1556.0,245.5L1556.0,242.5L1557.0,242.5L1557.0,239.5L1560.0,239.5L1560.0,236.5L1560.5,236.5L1560.5,245.5L1561.0,245.5L1561.0,257.5L1561.5,257.5L1561.5,269.5L1562.0,269.5L1562.0,281.5L1562.5,281.5L1562.5,293.5L1563.0,293.5L1563.0,302.5L1563.5,302.5L1563.5,311.5L1564.0,311.5L1564.0,314.5L1564.5,314.5L1564.5,317.5L1565.0,317.5L1565.0,320.5L1565.5,320.5L1565.5,323.5L1570.5,323.5L1570.5,317.5L1571.0,317.5L1571.0,299.5L1571.5,299.5L1571.5,287.5L1572.0,287.5L1572.0,278.5L1572.5,278.5L1572.5,269.5L1573.0,269.5L1573.0,263.5L1573.5,263.5L1573.5,260.5L1574.0,260.5L1574.0,254.5L1574.5,254.5L1574.5,251.5L1575.0,251.5L1575.0,248.5L1576.0,248.5L1576.0,245.5L1577.0,245.5L1577.0,242.5L1578.0,242.5L1578.0,239.5L1582.0,239.5L1582.0,251.5L1582.5,251.5L1582.5,263.5L1583.0,263.5L1583.0,275.5L1583.5,275.5L1583.5,287.5L1584.0,287.5L1584.0,299.5L1584.5,299.5L1584.5,308.5L1585.0,308.5L1585.0,314.5L1585.5,314.5L1585.5,317.5L1586.0,317.5L1586.0,320.5L1586.5,320.5L1586.5,323.5L1587.0,323.5L1587.0,326.5L1591.0,326.5L1591.0,317.5L1591.5,317.5L1591.5,302.5L1592.0,302.5L1592.0,290.5L1592.5,290.5L1592.5,281.5L1593.0,281.5L1593.0,275.5L1593.5,275.5L1593.5,269.5L1594.0,269.5L1594.0,263.5L1594.5,263.5L1594.5,260.5L1595.0,260.5L1595.0,254.5L1596.0,254.5L1596.0,251.5L1596.5,251.5L1596.5,248.5L1597.5,248.5L1597.5,245.5L1599.0,245.5L1599.0,242.5L1602.5,242.5L1602.5,239.5L1603.5,239.5L1603.5,242.5L1604.0,242.5L1604.0,251.5L1604.5,251.5L1604.5,263.5L1605.0,263.5L1605.0,275.5L1605.5,275.5L1605.5,287.5L1606.0,287.5L1606.0,296.5L1606.5,296.5L1606.5,305.5L1607.0,305.5L1607.0,314.5L1607.5,314.5L1607.5,317.5L1608.0,317.5L1608.0,320.5L1609.0,320.5L1609.0,323.5L1613.0,323.5L1613.0,311.5L1613.5,311.5L1613.5,296.5L1614.0,296.5L1614.0,287.5L1614.5,287.5L1614.5,278.5L1615.0,278.5L1615.0,272.5L1615.5,272.5L1615.5,266.5L1616.0,266.5L1616.0,263.5L1616.5,263.5L1616.5,260.5L1617.0,260.5L1617.0,257.5L1617.5,257.5L1617.5,254.5L1618.0,254.5L1618.0,251.5L1619.0,251.5L1619.0,248.5L1620.0,248.5L1620.0,245.5L1622.0,245.5L1622.0,251.5L1622.5,251.5L1622.5,260.5L1623.0,260.5L1623.0,272.5L1623.5,272.5L1623.5,284.5L1624.0,284.5L1624.0,296.5L1624.5,296.5L1624.5,305.5L1625.0,305.5L1625.0,314.5L1625.5,314.5L1625.5,320.5L1626.0,320.5L1626.0,323.5L1626.5,323.5L1626.5,326.5L1627.0,326.5L1627.0,329.5L1634.0,329.5L1634.0,314.5L1634.5,314.5L1634.5,302.5L1635.0,302.5L1635.0,290.5L1635.5,290.5L1635.5,284.5L1636.0,284.5L1636.0,275.5L1636.5,275.5L1636.5,272.5L1637.0,272.5L1637.0,266.5L1637.5,266.5L1637.5,263.5L1638.0,263.5L1638.0,260.5L1638.5,260.5L1638.5,257.5L1639.0,257.5L1639.0,254.5L1640.0,254.5L1640.0,251.5L1641.0,251.5L1641.0,248.5L1643.5,248.5L1643.5,251.5L1644.0,251.5L1644.0,263.5L1644.5,263.5L1644.5,272.5L1645.0,272.5L1645.0,284.5L1645.5,284.5L1645.5,296.5L1646.0,296.5L1646.0,305.5L1646.5,305.5L1646.5,317.5L1647.0,317.5L1647.0,320.5L1647.5,320.5L1647.5,323.5L1648.0,323.5L1648.0,326.5L1648.5,326.5L1648.5,329.5L1654.5,329.5L1654.5,317.5L1655.0,317.5L1655.0,305.5L1655.5,305.5L1655.5,293.5L1656.0,293.5L1656.0,284.5L1656.5,284.5L1656.5,278.5L1657.0,278.5L1657.0,272.5L1657.5,272.5L1657.5,266.5L1658.0,266.5L1658.0,263.5L1658.5,263.5L1658.5,260.5L1659.0,260.5L1659.0,257.5L1660.0,257.5L1660.0,254.5L1660.5,254.5L1660.5,251.5L1661.5,251.5L1661.5,248.5L1664.0,248.5L1664.0,254.5L1664.5,254.5L1664.5,263.5L1665.0,263.5L1665.0,275.5L1665.5,275.5L1665.5,287.5L1666.0,287.5L1666.0,296.5L1666.5,296.5L1666.5,308.5L1667.0,308.5L1667.0,317.5L1667.5,317.5L1667.5,320.5L1668.0,320.5L1668.0,323.5L1668.5,323.5L1668.5,326.5L1669.0,326.5L1669.0,329.5L1674.5,329.5L1674.5,320.5L1675.0,320.5L1675.0,308.5L1675.5,308.5L1675.5,296.5L1676.0,296.5L1676.0,287.5L1676.5,287.5L1676.5,281.5L1677.0,281.5L1677.0,275.5L1677.5,275.5L1677.5,269.5L1678.0,269.5L1678.0,266.5L1678.5,266.5L1678.5,260.5L1679.5,260.5L1679.5,257.5L1680.0,257.5L1680.0,254.5L1681.0,254.5L1681.0,251.5L1682.0,251.5L1682.0,248.5L1684.5,248.5L1684.5,257.5L1685.0,257.5L1685.0,269.5L1685.5,269.5L1685.5,281.5L1686.0,281.5L1686.0,290.5L1686.5,290.5L1686.5,302.5L1687.0,302.5L1687.0,311.5L1687.5,311.5L1687.5,320.5L1688.0,320.5L1688.0,323.5L1688.5,323.5L1688.5,326.5L1689.0,326.5L1689.0,329.5L1694.5,329.5L1694.5,323.5L1695.0,323.5L1695.0,308.5L1695.5,308.5L1695.5,299.5L1696.0,299.5L1696.0,290.5L1696.5,290.5L1696.5,281.5L1697.0,281.5L1697.0,275.5L1697.5,275.5L1697.5,269.5L1698.0,269.5L1698.0,266.5L1698.5,266.5L1698.5,263.5L1699.0,263.5L1699.0,260.5L1699.5,260.5L1699.5,257.5L1700.0,257.5L1700.0,254.5L1701.0,254.5L1701.0,251.5L1702.0,251.5L1702.0,248.5L1705.0,248.5L1705.0,254.5L1705.5,254.5L1705.5,263.5L1706.0,263.5L1706.0,275.5L1706.5,275.5L1706.5,287.5L1707.0,287.5L1707.0,299.5L1707.5,299.5L1707.5,308.5L1708.0,308.5L1708.0,320.5L1708.5,320.5L1708.5,323.5L1709.0,323.5L1709.0,326.5L1710.0,326.5L1710.0,329.5L1715.5,329.5L1715.5,323.5L1716.0,323.5L1716.0,308.5L1716.5,308.5L1716.5,299.5L1717.0,299.5L1717.0,290.5L1717.5,290.5L1717.5,281.5L1718.0,281.5L1718.0,275.5L1718.5,275.5L1718.5,269.5L1719.0,269.5L1719.0,266.5L1719.5,266.5L1719.5,263.5L1720.0,263.5L1720.0,260.5L1720.5,260.5L1720.5,257.5L1721.0,257.5L1721.0,254.5L1722.0,254.5L1722.0,251.5L1723.0,251.5L1723.0,248.5L1725.5,248.5L1725.5,257.5L1726.0,257.5L1726.0,266.5L1726.5,266.5L1726.5,278.5L1727.0,278.5L1727.0,290.5L1727.5,290.5L1727.5,302.5L1728.0,302.5L1728.0,311.5L1728.5,311.5L1728.5,320.5L1729.0,320.5L1729.0,323.5L1729.5,323.5L1729.5,326.5L1730.0,326.5L1730.0,329.5L1736.5,329.5L1736.5,320.5L1737.0,320.5L1737.0,305.5L1737.5,305.5L1737.5,296.5L1738.0,296.5L1738.0,287.5L1738.5,287.5L1738.5,278.5L1739.0,278.5L1739.0,272.5L1739.5,272.5L1739.5,269.5L1740.0,269.5L1740.0,266.5L1740.5,266.5L1740.5,260.5L1741.0,260.5L1741.0,257.5L1742.0,257.5L1742.0,254.5L1742.5,254.5L1742.5,251.5L1744.0,251.5L1744.0,248.5L1746.0,248.5L1746.0,257.5L1746.5,257.5L1746.5,269.5L1747.0,269.5L1747.0,281.5L1747.5,281.5L1747.5,293.5L1748.0,293.5L1748.0,302.5L1748.5,302.5L1748.5,314.5L1749.0,314.5L1749.0,320.5L1749.5,320.5L1749.5,323.5L1750.0,323.5L1750.0,326.5L1751.0,326.5L1751.0,329.5L1754.0,329.5L1754.0,320.5L1754.5,320.5L1754.5,311.5L1755.0,311.5L1755.0,305.5L1755.5,305.5L1755.5,299.5L1756.0,299.5L1756.0,293.5L1756.5,293.5L1756.5,290.5L1757.0,290.5L1757.0,287.5L1757.5,287.5L1757.5,284.5L1758.0,284.5L1758.0,281.5L1758.5,281.5L1758.5,278.5L1759.5,278.5L1759.5,275.5L1760.5,275.5L1760.5,272.5L1762.5,272.5L1762.5,269.5L1764.5,269.5L1764.5,266.5L1767.5,266.5L1767.5,263.5L1772.5,263.5L1772.5,272.5L1773.0,272.5L1773.0,281.5L1773.5,281.5L1773.5,293.5L1774.0,293.5L1774.0,302.5L1774.5,302.5L1774.5,311.5L1775.0,311.5L1775.0,320.5L1775.5,320.5L1775.5,326.5L1776.0,326.5L1776.0,329.5L1776.5,329.5L1776.5,332.5L1781.5,332.5L1781.5,320.5L1782.0,320.5L1782.0,308.5L1782.5,308.5L1782.5,299.5L1783.0,299.5L1783.0,290.5L1783.5,290.5L1783.5,284.5L1784.0,284.5L1784.0,278.5L1784.5,278.5L1784.5,275.5L1785.0,275.5L1785.0,272.5L1785.5,272.5L1785.5,266.5L1786.5,266.5L1786.5,263.5L1787.0,263.5L1787.0,260.5L1788.0,260.5L1788.0,257.5L1789.5,257.5L1789.5,254.5L1793.0,254.5L1793.0,263.5L1793.5,263.5L1793.5,275.5L1794.0,275.5L1794.0,287.5L1794.5,287.5L1794.5,296.5L1795.0,296.5L1795.0,308.5L1795.5,308.5L1795.5,317.5L1796.0,317.5L1796.0,323.5L1797.0,323.5L1797.0,326.5L1797.5,326.5L1797.5,329.5L1802.5,329.5L1802.5,323.5L1803.0,323.5L1803.0,308.5L1803.5,308.5L1803.5,299.5L1804.0,299.5L1804.0,290.5L1804.5,290.5L1804.5,284.5L1805.0,284.5L1805.0,278.5L1805.5,278.5L1805.5,275.5L1806.0,275.5L1806.0,272.5L1806.5,272.5L1806.5,269.5L1807.0,269.5L1807.0,266.5L1807.5,266.5L1807.5,263.5L1808.0,263.5L1808.0,260.5L1809.0,260.5L1809.0,257.5L1810.5,257.5L1810.5,254.5L1813.0,254.5L1813.0,257.5L1813.5,257.5L1813.5,260.5L1814.0,260.5L1814.0,263.5L1814.2,263.5" stroke="#984ea3" stroke-linejoin="miter"/>
<path d="M60.5,500.3L131.2,500.3L131.2,404.1L246.3,404.1L246.3,386.0L247.6,386.0L247.6,313.8L249.4,313.8L249.4,289.7L252.2,289.7L252.2,199.5L349.5,199.5L349.5,205.5L402.4,205.5L402.4,211.5L456.0,211.5L456.0,217.5L464.5,217.5L464.5,223.5L510.4,223.5L510.4,235.6L576.6,235.6L576.6,241.6L588.4,241.6L588.4,247.6L644.5,247.6L644.5,259.6L892.2,259.6L892.2,271.7L1089.4,271.7L1089.4,277.7L1613.8,277.7L1613.8,289.7L1815.0,289.7" stroke="#44739e" stroke-linejoin="miter"/>
</g>
<g shape-rendering="crispEdges" stroke="#e1e1e1" stroke-opacity="0.12" stroke-width="1">
<line x1="60" y1="991.5" x2="1815" y2="991.5"/>
<line x1="60" y1="919.5" x2="1815" y2="919.5"/>
<line x1="60" y1="847.5" x2="1815" y2="847.5"/>
<line x1="60" y1="774.5" x2="1815" y2="774.5"/>
<line x1="60" y1="702.5" x2="1815" y2="702.5"/>
<line x1="60" y1="630.5" x2="1815" y2="630.5"/>
<line x1="67.5" y1="630" x2="67.5" y2="992"/>
<line x1="100.5" y1="630" x2="100.5" y2="1000"/>
<line x1="173.5" y1="630" x2="173.5" y2="1000"/>
<line x1="246.5" y1="630" x2="246.5" y2="1000"/>
<line x1="319.5" y1="630" x2="319.5" y2="1000"/>
<line x1="391.5" y1="630" x2="391.5" y2="1000"/>
<line x1="464.5" y1="630" x2="464.5" y2="1000"/>
<line x1="537.5" y1="630" x2="537.5" y2="1000"/>
<line x1="610.5" y1="630" x2="610.5" y2="1000"/>
<line x1="683.5" y1="630" x2="683.5" y2="1000"/>
<line x1="755.5" y1="630" x2="755.5" y2="1000"/>
<line x1="828.5" y1="630" x2="828.5" y2="1000"/>
<line x1="901.5" y1="630" x2="901.5" y2="1000"/>
<line x1="974.5" y1="630" x2="974.5" y2="1000"/>
<line x1="1046.5" y1="630" x2="1046.5" y2="1000"/>
<line x1="1119.5" y1="630" x2="1119.5" y2="1000"/>
<line x1="1192.5" y1="630" x2="1192.5" y2="1000"/>
<line x1="1265.5" y1="630" x2="1265.5" y2="1000"/>
<line x1="1338.5" y1="630" x2="1338.5" y2="1000"/>
<line x1="1410.5" y1="630" x2="1410.5" y2="1000"/>
<line x1="1483.5" y1="630" x2="1483.5" y2="1000"/>
<line x1="1556.5" y1="630" x2="1556.5" y2="1000"/>
<line x1="1629.5" y1="630" x2="1629.5" y2="1000"/>
<line x1="1701.5" y1="630" x2="1701.5" y2="1000"/>
<line x1="1774.5" y1="630" x2="1774.5" y2="1000"/>
</g>
<text x="56.8" y="994.4" font-size="12" fill="#9e9e9e" text-anchor="end" >0</text>
<text x="56.8" y="922.2" font-size="12" fill="#9e9e9e" text-anchor="end" >20</text>
<text x="56.8" y="850.0" font-size="12" fill="#9e9e9e" text-anchor="end" >40</text>
<text x="56.8" y="777.8" font-size="12" fill="#9e9e9e" text-anchor="end" >60</text>
<text x="56.8" y="705.6" font-size="12" fill="#9e9e9e" text-anchor="end" >80</text>
<text x="56.8" y="633.4" font-size="12" fill="#9e9e9e" text-anchor="end" >100</text>
<text x="100.8" y="1012.9" font-size="12" fill="#9e9e9e" text-anchor="middle" textLength="43.5" lengthAdjust="spacingAndGlyphs" >5:20 AM</text>
<text x="173.6" y="1012.9" font-size="12" fill="#9e9e9e" text-anchor="middle" textLength="43.5" lengthAdjust="spacingAndGlyphs" >5:40 AM</text>
<text x="246.4" y="1012.9" font-size="12" fill="#9e9e9e" text-anchor="middle" font-weight="bold" textLength="44.7" lengthAdjust="spacingAndGlyphs" >6:00 AM</text>
<text x="319.1" y="1012.9" font-size="12" fill="#9e9e9e" text-anchor="middle" textLength="43.5" lengthAdjust="spacingAndGlyphs" >6:20 AM</text>
<text x="391.9" y="1012.9" font-size="12" fill="#9e9e9e" text-anchor="middle" textLength="43.5" lengthAdjust="spacingAndGlyphs" >6:40 AM</text>
<text x="464.7" y="1012.9" font-size="12" fill="#9e9e9e" text-anchor="middle" font-weight="bold" textLength="44.7" lengthAdjust="spacingAndGlyphs" >7:00 AM</text>
<text x="537.5" y="1012.9" font-size="12" fill="#9e9e9e" text-anchor="middle" textLength="43.5" lengthAdjust="spacingAndGlyphs" >7:20 AM</text>
<text x="610.3" y="1012.9" font-size="12" fill="#9e9e9e" text-anchor="middle" textLength="43.5" lengthAdjust="spacingAndGlyphs" >7:40 AM</text>
<text x="683.0" y="1012.9" font-size="12" fill="#9e9e9e" text-anchor="middle" font-weight="bold" textLength="44.7" lengthAdjust="spacingAndGlyphs" >8:00 AM</text>
<text x="755.8" y="1012.9" font-size="12" fill="#9e9e9e" text-anchor="middle" textLength="43.5" lengthAdjust="spacingAndGlyphs" >8:20 AM</text>
<text x="828.6" y="1012.9" font-size="12" fill="#9e9e9e" text-anchor="middle" textLength="43.5" lengthAdjust="spacingAndGlyphs" >8:40 AM</text>
<text x="901.4" y="1012.9" font-size="12" fill="#9e9e9e" text-anchor="middle" font-weight="bold" textLength="44.7" lengthAdjust="spacingAndGlyphs" >9:00 AM</text>
<text x="974.2" y="1012.9" font-size="12" fill="#9e9e9e" text-anchor="middle" textLength="43.5" lengthAdjust="spacingAndGlyphs" >9:20 AM</text>
<text x="1046.9" y="1012.9" font-size="12" fill="#9e9e9e" text-anchor="middle" textLength="43.5" lengthAdjust="spacingAndGlyphs" >9:40 AM</text>
<text x="1119.7" y="1012.9" font-size="12" fill="#9e9e9e" text-anchor="middle" font-weight="bold" textLength="51.6" lengthAdjust="spacingAndGlyphs" >10:00 AM</text>
<text x="1192.5" y="1012.9" font-size="12" fill="#9e9e9e" text-anchor="middle" textLength="50.2" lengthAdjust="spacingAndGlyphs" >10:20 AM</text>
<text x="1265.3" y="1012.9" font-size="12" fill="#9e9e9e" text-anchor="middle" textLength="50.2" lengthAdjust="spacingAndGlyphs" >10:40 AM</text>
<text x="1338.1" y="1012.9" font-size="12" fill="#9e9e9e" text-anchor="middle" font-weight="bold" textLength="51.6" lengthAdjust="spacingAndGlyphs" >11:00 AM</text>
<text x="1410.8" y="1012.9" font-size="12" fill="#9e9e9e" text-anchor="middle" textLength="50.2" lengthAdjust="spacingAndGlyphs" >11:20 AM</text>
<text x="1483.6" y="1012.9" font-size="12" fill="#9e9e9e" text-anchor="middle" textLength="50.2" lengthAdjust="spacingAndGlyphs" >11:40 AM</text>
<text x="1556.4" y="1012.9" font-size="12" fill="#9e9e9e" text-anchor="middle" font-weight="bold" textLength="51.3" lengthAdjust="spacingAndGlyphs" >12:00 PM</text>
<text x="1629.2" y="1012.9" font-size="12" fill="#9e9e9e" text-anchor="middle" textLength="50.0" lengthAdjust="spacingAndGlyphs" >12:20 PM</text>
<text x="1702.0" y="1012.9" font-size="12" fill="#9e9e9e" text-anchor="middle" textLength="50.0" lengthAdjust="spacingAndGlyphs" >12:40 PM</text>
<text x="1774.7" y="1012.9" font-size="12" fill="#9e9e9e" text-anchor="middle" font-weight="bold" textLength="44.4" lengthAdjust="spacingAndGlyphs" >1:00 PM</text>
<text transform="translate(24.5,811) rotate(-90)" font-size="12" fill="#9e9e9e" text-anchor="middle">%</text>
<g fill="none" stroke-width="1.5" stroke-linejoin="miter">
<path d="M67.5,720.8L1815.0,720.8" stroke="#7f80cd"/>
<path d="M67.5,901.2L206.6,901.2L206.6,894.0L250.7,894.0L250.7,832.7L255.6,832.7L255.6,760.5L257.7,760.5L257.7,695.5L353.1,695.5L353.1,702.7L404.2,702.7L404.2,709.9L407.3,709.9L407.3,717.1L408.7,717.1L408.7,728.0L433.7,728.0L433.7,735.2L457.0,735.2L457.0,742.4L461.3,742.4L461.3,749.6L468.8,749.6L468.8,760.5L506.2,760.5L506.2,767.7L511.5,767.7L511.5,774.9L515.6,774.9L515.6,782.1L556.4,782.1L556.4,778.5L568.8,778.5L568.8,785.7L592.8,785.7L592.8,793.0L595.8,793.0L595.8,800.2L606.2,800.2L606.2,807.4L719.3,807.4L719.3,803.8L730.3,803.8L730.3,811.0L731.7,811.0L731.7,818.2L918.8,818.2L918.8,825.4L1090.8,825.4L1090.8,839.9L1815.0,839.9" stroke="#af8d00"/>
<path d="M67.5,901.2L252.8,901.2L252.8,811.0L257.5,811.0L257.5,720.8L514.7,720.8L514.7,731.6L580.4,731.6L580.4,738.8L646.4,738.8L646.4,753.2L894.3,753.2L894.3,764.1L1614.0,764.1L1614.0,782.1L1815.0,782.1" stroke="#ff7f00"/>
<path d="M67.5,901.2L206.6,901.2L206.6,897.6L251.2,897.6L251.2,883.2L252.8,883.2L252.8,818.2L255.6,818.2L255.6,796.6L257.7,796.6L257.7,713.5L353.1,713.5L353.1,717.1L406.4,717.1L406.4,724.4L461.3,724.4L461.3,728.0L468.8,728.0L468.8,731.6L511.5,731.6L511.5,735.2L514.5,735.2L514.5,742.4L516.0,742.4L516.0,746.0L556.4,746.0L556.4,742.4L568.8,742.4L568.8,746.0L580.4,746.0L580.4,749.6L592.8,749.6L592.8,753.2L606.2,753.2L606.2,756.9L646.4,756.9L646.4,767.7L894.3,767.7L894.3,778.5L1090.8,778.5L1090.8,782.1L1614.0,782.1L1614.0,796.6L1815.0,796.6" stroke="#00d2d5"/>
<path d="M67.5,933.7L206.6,933.7L206.6,930.1L250.7,930.1L250.7,847.1L255.6,847.1L255.6,800.2L257.9,800.2L257.9,717.1L353.1,717.1L353.1,720.8L404.2,720.8L404.2,724.4L406.1,724.4L406.1,731.6L408.7,731.6L408.7,735.2L433.7,735.2L433.7,742.4L457.0,742.4L457.0,746.0L461.3,746.0L461.3,749.6L468.8,749.6L468.8,756.9L506.2,756.9L506.2,760.5L511.5,760.5L511.5,764.1L514.5,764.1L514.5,771.3L516.0,771.3L516.0,774.9L568.8,774.9L568.8,778.5L580.4,778.5L580.4,782.1L592.8,782.1L592.8,789.3L595.8,789.3L595.8,793.0L606.2,793.0L606.2,796.6L646.4,796.6L646.4,803.8L719.3,803.8L719.3,800.2L730.3,800.2L730.3,803.8L731.7,803.8L731.7,811.0L894.3,811.0L894.3,814.6L918.8,814.6L918.8,818.2L1090.8,818.2L1090.8,829.0L1614.0,829.0L1614.0,836.3L1815.0,836.3" stroke="#984ea3"/>
<path d="M67.5,630 L127,630" stroke="#44739e" stroke-width="2"/>
<path d="M127,630.1 L1815,630.1" stroke="#44739e" stroke-width="1.35"/>
<path d="M1755,629.6 L1815,629.6" stroke="#44739e" stroke-width="1.2"/>
</g>
</svg></body></html>
